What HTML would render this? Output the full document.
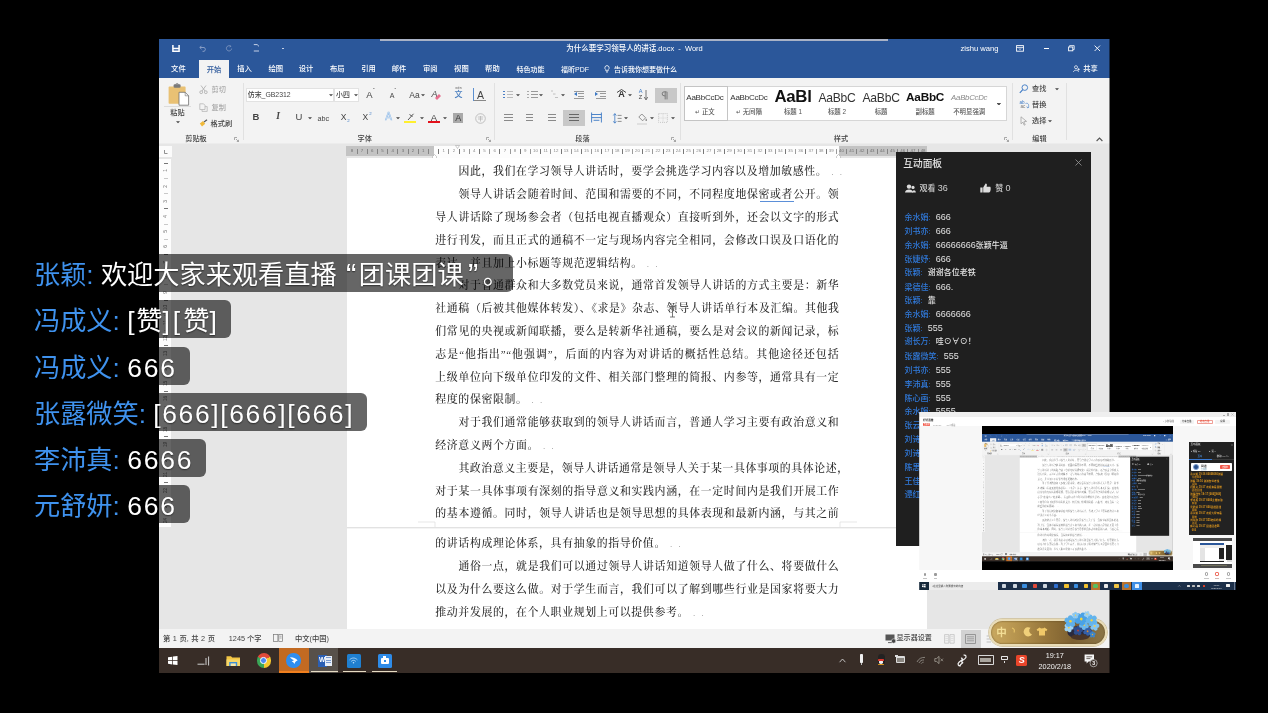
<!DOCTYPE html>
<html lang="zh"><head><meta charset="utf-8"><title>直播</title>
<style>
*{margin:0;padding:0;box-sizing:border-box}
html,body{width:1268px;height:713px;overflow:hidden;background:#000}
body{position:relative;font-family:"Liberation Sans","Noto Sans CJK SC",sans-serif;color:#444}
.a{position:absolute}
svg.a{overflow:visible}
.t{white-space:nowrap;line-height:1;font-weight:500}
#win{left:0;top:0;width:1268px;height:713px;clip-path:inset(39px 158.5px 40px 158.5px);filter:blur(.6px)}
#thumb{left:0;top:0;width:1268px;height:713px;clip-path:inset(412px 32px 122.8px 919.2px);filter:blur(.5px)}
.dl{position:absolute;left:435.3px;width:404px;height:14px;font:10.9px/14px "Liberation Serif","Noto Serif CJK SC",serif;color:#2a2a2a;font-weight:500;white-space:nowrap;text-align:justify;text-align-last:justify;letter-spacing:0.64px}
.dl.s{text-align-last:left}
#thumb .dl{color:#6a6a6a}
.chat{will-change:transform;left:21.8px;height:37.5px;border-radius:6px;background:rgba(0,0,0,.6);padding:0 13px 0 12px;font-size:26.2px;line-height:42px;color:#fff;white-space:nowrap;text-shadow:0 .5px 1.5px rgba(0,0,0,.55)}
.chat i{font-style:normal;font-size:26.5px;letter-spacing:1.8px}
.chat b{font-weight:400;color:#3f92ee}
</style></head><body>

<div id="win" class="a">
<div class="a" style="left:158.5px;top:39px;width:951px;height:634px;background:#e6e6e6"></div>
<div class="a" style="left:158.5px;top:39.0px;width:951.0px;height:39.0px;background:#2b579a;"></div>
<div class="a" style="left:380.0px;top:38.8px;width:508.0px;height:1.9px;background:#a9b2c6;"></div>
<svg class="a" style="left:172.0px;top:45.0px;" width="8" height="7" viewBox="0 0 8 7"><path d="M0.9 0V6.3H7.1V0M0.9 3.4H7.1" fill="none" stroke="#fff" stroke-width="1.5"/></svg>
<svg class="a" style="left:198.5px;top:44.5px;" width="8" height="7" viewBox="0 0 8 7"><path d="M2.5 0.8L0.8 2.5L2.5 4.2M1 2.5H5A2 2 0 0 1 5 6.3H3.5" fill="none" stroke="#8ea3c9" stroke-width="0.9"/></svg>
<svg class="a" style="left:225.0px;top:44.5px;" width="8" height="7" viewBox="0 0 8 7"><path d="M5.5 1.2A2.6 2.6 0 1 0 6.6 3.6M5 0.3L5.8 1.4L4.6 2" fill="none" stroke="#7f96c0" stroke-width="0.9"/></svg>
<svg class="a" style="left:252.5px;top:44.0px;" width="7" height="8" viewBox="0 0 7 8"><path d="M0.8 0.6H4.2L6 2.4M0.8 7H6" fill="none" stroke="#c5d0e6" stroke-width="1"/></svg>
<div class="a" style="left:281.5px;top:47.6px;width:2.0px;height:1.4px;background:#c5d0e6;"></div>
<span class="a t" style="left:634.5px;top:45.0px;font-size:7.5px;line-height:7.5px;color:#fff;transform:translateX(-50%);">为什么要学习领导人的讲话.docx&nbsp; -&nbsp; Word</span>
<span class="a t" style="left:979.5px;top:45.0px;font-size:7.6px;line-height:7.6px;color:#fff;transform:translateX(-50%);">zishu wang</span>
<svg class="a" style="left:1015.5px;top:45.0px;" width="8" height="7" viewBox="0 0 8 7"><rect x="0.6" y="0.6" width="6.8" height="5.6" fill="none" stroke="#fff" stroke-width="0.9"/><path d="M0.6 2.4H7.4M3 3.4L4 4.6L5 3.4" fill="none" stroke="#fff" stroke-width="0.8"/></svg>
<div class="a" style="left:1043.5px;top:48.3px;width:5.0px;height:1.0px;background:#fff;"></div>
<svg class="a" style="left:1068.0px;top:45.0px;" width="7" height="7" viewBox="0 0 7 7"><path d="M1.6 1.8V0.6H6.2V4.6H5" fill="none" stroke="#fff" stroke-width="0.8"/><rect x="0.6" y="2" width="4.2" height="3.8" fill="none" stroke="#fff" stroke-width="0.9"/></svg>
<svg class="a" style="left:1093.5px;top:45.3px;" width="7" height="7" viewBox="0 0 7 7"><path d="M0.6 0.6L6 6M6 0.6L0.6 6" stroke="#fff" stroke-width="0.9"/></svg>
<span class="a t" style="left:178.4px;top:65.4px;font-size:7.3px;line-height:7.3px;color:#fff;transform:translateX(-50%);">文件</span>
<div class="a" style="left:198.7px;top:60.0px;width:30.6px;height:18.2px;background:#f3f3f3;"></div>
<span class="a t" style="left:214.0px;top:65.8px;font-size:7.3px;line-height:7.3px;color:#2b579a;transform:translateX(-50%);">开始</span>
<span class="a t" style="left:244.5px;top:65.4px;font-size:7.3px;line-height:7.3px;color:#fff;transform:translateX(-50%);">插入</span>
<span class="a t" style="left:275.7px;top:65.4px;font-size:7.3px;line-height:7.3px;color:#fff;transform:translateX(-50%);">绘图</span>
<span class="a t" style="left:306.1px;top:65.4px;font-size:7.3px;line-height:7.3px;color:#fff;transform:translateX(-50%);">设计</span>
<span class="a t" style="left:337.3px;top:65.4px;font-size:7.3px;line-height:7.3px;color:#fff;transform:translateX(-50%);">布局</span>
<span class="a t" style="left:368.5px;top:65.4px;font-size:7.3px;line-height:7.3px;color:#fff;transform:translateX(-50%);">引用</span>
<span class="a t" style="left:399.0px;top:65.4px;font-size:7.3px;line-height:7.3px;color:#fff;transform:translateX(-50%);">邮件</span>
<span class="a t" style="left:430.3px;top:65.4px;font-size:7.3px;line-height:7.3px;color:#fff;transform:translateX(-50%);">审阅</span>
<span class="a t" style="left:461.4px;top:65.4px;font-size:7.3px;line-height:7.3px;color:#fff;transform:translateX(-50%);">视图</span>
<span class="a t" style="left:492.4px;top:65.4px;font-size:7.3px;line-height:7.3px;color:#fff;transform:translateX(-50%);">帮助</span>
<span class="a t" style="left:530.5px;top:65.6px;font-size:7.0px;line-height:7.0px;color:#fff;transform:translateX(-50%);">特色功能</span>
<span class="a t" style="left:575.0px;top:65.6px;font-size:7.0px;line-height:7.0px;color:#fff;transform:translateX(-50%);">福昕PDF</span>
<svg class="a" style="left:604.0px;top:64.5px;" width="6" height="8" viewBox="0 0 6 8"><path d="M3 0.6A2.2 2.2 0 0 1 4.2 4.6V5.8H1.8V4.6A2.2 2.2 0 0 1 3 0.6ZM2 7H4" fill="none" stroke="#fff" stroke-width="0.8"/></svg>
<span class="a t" style="left:614.0px;top:65.6px;font-size:7.0px;line-height:7.0px;color:#fff;">告诉我你想要做什么</span>
<svg class="a" style="left:1072.6px;top:64.8px;" width="7" height="8" viewBox="0 0 7 8"><circle cx="3" cy="2.2" r="1.5" fill="none" stroke="#fff" stroke-width="0.7"/><path d="M0.5 7C0.5 4.6 5.5 4.6 5.5 7M5.6 3.2V5.6M4.4 4.4H6.8" fill="none" stroke="#fff" stroke-width="0.7"/></svg>
<span class="a t" style="left:1083.3px;top:65.4px;font-size:7.3px;line-height:7.3px;color:#fff;">共享</span>
<div class="a" style="left:158.5px;top:78.0px;width:951.0px;height:65.5px;background:#f3f3f3;"></div>
<div class="a" style="left:158.5px;top:143.2px;width:951.0px;height:0.8px;background:#ececec;"></div>
<div class="a" style="left:242.5px;top:83.0px;width:0.7px;height:57.0px;background:#e1e1e1;"></div>
<div class="a" style="left:494.0px;top:83.0px;width:0.7px;height:57.0px;background:#e1e1e1;"></div>
<div class="a" style="left:679.5px;top:83.0px;width:0.7px;height:57.0px;background:#e1e1e1;"></div>
<div class="a" style="left:1011.5px;top:83.0px;width:0.7px;height:57.0px;background:#e1e1e1;"></div>
<div class="a" style="left:1065.5px;top:83.0px;width:0.7px;height:57.0px;background:#e1e1e1;"></div>
<svg class="a" style="left:168.0px;top:82.5px;" width="22" height="24" viewBox="0 0 22 24"><rect x="0.6" y="3.6" width="17" height="17.2" rx="0.8" fill="#e9c174"/><rect x="5.6" y="1.2" width="7" height="3.6" rx="1.2" fill="#7a7a7a"/><circle cx="9.1" cy="1.6" r="1.2" fill="none" stroke="#7a7a7a" stroke-width="0.7"/><path d="M11 9.3H17.2L20.6 12.8V22.2H11Z" fill="#fff" stroke="#6e6e6e" stroke-width="0.8"/><path d="M17.2 9.3V12.8H20.6" fill="none" stroke="#6e6e6e" stroke-width="0.6"/></svg>
<span class="a t" style="left:177.5px;top:108.9px;font-size:7.2px;line-height:7.2px;color:#444;transform:translateX(-50%);">粘贴</span>
<svg class="a" style="left:175.7px;top:120.9px" width="4.0" height="2.5" viewBox="0 0 2 1"><path d="M0 0H2L1 1Z" fill="#444"/></svg>
<div class="a" style="left:164.0px;top:106.1px;width:26.5px;height:0.6px;background:#dcdcdc;"></div>
<svg class="a" style="left:198.5px;top:85.0px;" width="9" height="9" viewBox="0 0 9 9"><path d="M2 0.5L6 6M7 0.5L3 6" stroke="#aaa" stroke-width="0.8" fill="none"/><circle cx="2.2" cy="7.2" r="1.4" fill="none" stroke="#aaa" stroke-width="0.8"/><circle cx="6.8" cy="7.2" r="1.4" fill="none" stroke="#aaa" stroke-width="0.8"/></svg>
<span class="a t" style="left:211.5px;top:86.2px;font-size:7.2px;line-height:7.2px;color:#a8a8a8;">剪切</span>
<svg class="a" style="left:199.0px;top:102.5px;" width="9" height="9" viewBox="0 0 9 9"><path d="M0.8 0.8H4.5L6 2.3V6.5H0.8Z M3 6.5V8.4H8.2V3.6H6" fill="none" stroke="#b5b5b5" stroke-width="0.8"/></svg>
<span class="a t" style="left:211.5px;top:103.6px;font-size:7.2px;line-height:7.2px;color:#a8a8a8;">复制</span>
<svg class="a" style="left:198.5px;top:119.0px;" width="9" height="9" viewBox="0 0 9 9"><path d="M0.8 4.5L4 2L6.2 4.8L3 7.5Z" fill="#f0b93a"/><path d="M5 3L8 0.8" stroke="#555" stroke-width="1.2"/></svg>
<span class="a t" style="left:210.5px;top:120.2px;font-size:7.2px;line-height:7.2px;color:#444;">格式刷</span>
<span class="a t" style="left:196.0px;top:135.3px;font-size:7.2px;line-height:7.2px;color:#444;transform:translateX(-50%);">剪贴板</span>
<svg class="a" style="left:234.0px;top:136.9px;" width="5" height="5" viewBox="0 0 5 5"><path d="M0.5 3V0.5H3M2 2L4.4 4.4M4.5 2.8V4.5H2.8" fill="none" stroke="#777" stroke-width="0.6"/></svg>
<div class="a" style="left:245.8px;top:88.3px;width:88.3px;height:13.4px;background:#fff;border:0.6px solid #e2e2e2"></div>
<span class="a t" style="left:247.8px;top:91.5px;font-size:6.9px;line-height:6.9px;color:#444;">仿宋_GB2312</span>
<svg class="a" style="left:328.6px;top:94.1px" width="4.0" height="2.5" viewBox="0 0 2 1"><path d="M0 0H2L1 1Z" fill="#444"/></svg>
<div class="a" style="left:334.4px;top:88.3px;width:24.3px;height:13.4px;background:#fff;border:0.6px solid #e2e2e2"></div>
<span class="a t" style="left:336.0px;top:91.5px;font-size:6.9px;line-height:6.9px;color:#444;">小四</span>
<svg class="a" style="left:353.8px;top:94.1px" width="4.0" height="2.5" viewBox="0 0 2 1"><path d="M0 0H2L1 1Z" fill="#444"/></svg>
<span class="a t" style="left:369.5px;top:90.2px;font-size:9.5px;line-height:9.5px;color:#444;transform:translateX(-50%);">A</span>
<span class="a t" style="left:373.0px;top:87.5px;font-size:5px;line-height:5px;color:#444;">ˆ</span>
<span class="a t" style="left:392.0px;top:92.2px;font-size:7px;line-height:7px;color:#444;transform:translateX(-50%);">A</span>
<span class="a t" style="left:394.5px;top:88.8px;font-size:4.5px;line-height:4.5px;color:#444;">ˇ</span>
<span class="a t" style="left:414.5px;top:90.5px;font-size:8.5px;line-height:8.5px;color:#444;transform:translateX(-50%);">Aa</span>
<svg class="a" style="left:420.5px;top:93.9px" width="4.0" height="2.5" viewBox="0 0 2 1"><path d="M0 0H2L1 1Z" fill="#444"/></svg>
<span class="a t" style="left:434.5px;top:89.5px;font-size:9px;line-height:9px;color:#444;transform:translateX(-50%);font-style:italic">A</span>
<svg class="a" style="left:434.0px;top:93.0px;" width="8" height="8" viewBox="0 0 8 8"><path d="M1 5L5 1L7 3L3 7Z" fill="#e8708f"/></svg>
<span class="a t" style="left:458.5px;top:91.3px;font-size:8px;line-height:8px;color:#4a7fc0;transform:translateX(-50%);">文</span>
<span class="a t" style="left:458.5px;top:87.2px;font-size:3.6px;line-height:3.6px;color:#666;transform:translateX(-50%);">wén</span>
<div class="a" style="left:473.3px;top:88.2px;width:0.8px;height:12.5px;background:#5b8fd0;"></div>
<span class="a t" style="left:480.5px;top:89.5px;font-size:10.5px;line-height:10.5px;color:#444;transform:translateX(-50%);">A</span>
<div class="a" style="left:474.0px;top:100.2px;width:11.5px;height:0.7px;background:#888;"></div>
<span class="a t" style="left:256.0px;top:112.2px;font-size:9.5px;line-height:9.5px;color:#444;transform:translateX(-50%);font-weight:700">B</span>
<span class="a t" style="left:278.0px;top:112.2px;font-size:9.5px;line-height:9.5px;color:#444;transform:translateX(-50%);font-style:italic;font-family:'Liberation Serif',serif;font-weight:700">I</span>
<span class="a t" style="left:299.0px;top:112.2px;font-size:9.5px;line-height:9.5px;color:#444;transform:translateX(-50%);">U</span>
<svg class="a" style="left:308.0px;top:117.4px" width="4.0" height="2.5" viewBox="0 0 2 1"><path d="M0 0H2L1 1Z" fill="#444"/></svg>
<span class="a t" style="left:323.2px;top:115.1px;font-size:7.2px;line-height:7.2px;color:#444;transform:translateX(-50%);">abc</span>
<span class="a t" style="left:343.5px;top:113.4px;font-size:8.5px;line-height:8.5px;color:#444;transform:translateX(-50%);">X</span>
<span class="a t" style="left:347.3px;top:118.8px;font-size:4.3px;line-height:4.3px;color:#3b78c4;">2</span>
<span class="a t" style="left:365.3px;top:113.4px;font-size:8.5px;line-height:8.5px;color:#444;transform:translateX(-50%);">X</span>
<span class="a t" style="left:369.3px;top:112.4px;font-size:4.3px;line-height:4.3px;color:#3b78c4;">2</span>
<span class="a t" style="left:388.5px;top:112.2px;font-size:10px;line-height:10px;color:#f3f3f3;transform:translateX(-50%);-webkit-text-stroke:0.55px #8fbbea">A</span>
<svg class="a" style="left:395.6px;top:117.4px" width="4.0" height="2.5" viewBox="0 0 2 1"><path d="M0 0H2L1 1Z" fill="#444"/></svg>
<svg class="a" style="left:405.5px;top:112.5px;" width="10" height="8" viewBox="0 0 10 8"><path d="M2 7L7.5 0.8M3.5 1.5L6.5 3.5" stroke="#555" stroke-width="1" fill="none"/></svg>
<div class="a" style="left:404.2px;top:121.3px;width:12.0px;height:2.2px;background:#ffef2e;"></div>
<svg class="a" style="left:419.6px;top:117.4px" width="4.0" height="2.5" viewBox="0 0 2 1"><path d="M0 0H2L1 1Z" fill="#444"/></svg>
<span class="a t" style="left:434.0px;top:112.5px;font-size:9.5px;line-height:9.5px;color:#444;transform:translateX(-50%);">A</span>
<div class="a" style="left:428.0px;top:121.3px;width:12.0px;height:2.2px;background:#e3111b;"></div>
<svg class="a" style="left:443.0px;top:117.4px" width="4.0" height="2.5" viewBox="0 0 2 1"><path d="M0 0H2L1 1Z" fill="#444"/></svg>
<div class="a" style="left:453.0px;top:112.5px;width:10.4px;height:10.6px;background:#a9a9a9;"></div>
<span class="a t" style="left:458.2px;top:113.7px;font-size:9px;line-height:9px;color:#3a3a3a;transform:translateX(-50%);">A</span>
<svg class="a" style="left:474.5px;top:112.7px;" width="11" height="11" viewBox="0 0 11 11"><circle cx="5.5" cy="5.5" r="4.8" fill="none" stroke="#aaa" stroke-width="0.7"/><path d="M2.8 4H8.2M3 6H8M5.5 3V8.5" stroke="#aaa" stroke-width="0.6" fill="none"/></svg>
<span class="a t" style="left:364.8px;top:135.3px;font-size:7.2px;line-height:7.2px;color:#444;transform:translateX(-50%);">字体</span>
<svg class="a" style="left:485.5px;top:136.9px;" width="5" height="5" viewBox="0 0 5 5"><path d="M0.5 3V0.5H3M2 2L4.4 4.4M4.5 2.8V4.5H2.8" fill="none" stroke="#777" stroke-width="0.6"/></svg>
<div class="a" style="left:506.5px;top:91.0px;width:6.5px;height:0.8px;background:#bbb;"></div><div class="a" style="left:503.3px;top:90.7px;width:1.4px;height:1.4px;background:#4c7fc4;"></div><div class="a" style="left:506.5px;top:94.2px;width:6.5px;height:0.8px;background:#bbb;"></div><div class="a" style="left:503.3px;top:93.9px;width:1.4px;height:1.4px;background:#4c7fc4;"></div><div class="a" style="left:506.5px;top:97.4px;width:6.5px;height:0.8px;background:#bbb;"></div><div class="a" style="left:503.3px;top:97.1px;width:1.4px;height:1.4px;background:#4c7fc4;"></div>
<svg class="a" style="left:516.0px;top:93.9px" width="4.0" height="2.5" viewBox="0 0 2 1"><path d="M0 0H2L1 1Z" fill="#444"/></svg>
<div class="a" style="left:530.5px;top:91.0px;width:7.0px;height:0.8px;background:#999;"></div><div class="a" style="left:527.3px;top:90.7px;width:1.4px;height:1.4px;background:#aaa;"></div><div class="a" style="left:530.5px;top:94.2px;width:7.0px;height:0.8px;background:#999;"></div><div class="a" style="left:527.3px;top:93.9px;width:1.4px;height:1.4px;background:#aaa;"></div><div class="a" style="left:530.5px;top:97.4px;width:7.0px;height:0.8px;background:#999;"></div><div class="a" style="left:527.3px;top:97.1px;width:1.4px;height:1.4px;background:#aaa;"></div>
<svg class="a" style="left:539.0px;top:93.9px" width="4.0" height="2.5" viewBox="0 0 2 1"><path d="M0 0H2L1 1Z" fill="#444"/></svg>
<svg class="a" style="left:549.5px;top:90.0px;" width="10" height="10" viewBox="0 0 10 10"><path d="M1 1H3M3 4H5.5M5 7.5H8" stroke="#bbb" stroke-width="0.9"/></svg>
<svg class="a" style="left:561.0px;top:93.9px" width="4.0" height="2.5" viewBox="0 0 2 1"><path d="M0 0H2L1 1Z" fill="#444"/></svg>
<div class="a" style="left:574.0px;top:90.5px;width:10.0px;height:0.8px;background:#999;"></div><div class="a" style="left:574.0px;top:93.0px;width:10.0px;height:0.8px;background:#999;"></div><div class="a" style="left:574.0px;top:95.5px;width:10.0px;height:0.8px;background:#999;"></div><div class="a" style="left:574.0px;top:98.0px;width:10.0px;height:0.8px;background:#999;"></div>
<svg class="a" style="left:572.5px;top:92.3px;" width="5" height="4" viewBox="0 0 5 4"><path d="M4 0L1 2L4 4Z" fill="#3b78c4"/></svg><div class="a" style="left:572.0px;top:92.0px;width:6.0px;height:4.6px;background:#f3f3f3;z-index:0"></div>
<svg class="a" style="left:572.8px;top:92.3px;" width="5" height="4" viewBox="0 0 5 4"><path d="M4 0L1 2L4 4Z" fill="#3b78c4"/></svg>
<div class="a" style="left:595.5px;top:90.5px;width:10.0px;height:0.8px;background:#999;"></div><div class="a" style="left:595.5px;top:93.0px;width:10.0px;height:0.8px;background:#999;"></div><div class="a" style="left:595.5px;top:95.5px;width:10.0px;height:0.8px;background:#999;"></div><div class="a" style="left:595.5px;top:98.0px;width:10.0px;height:0.8px;background:#999;"></div>
<div class="a" style="left:593.5px;top:92.0px;width:6.0px;height:4.6px;background:#f3f3f3;"></div>
<svg class="a" style="left:594.3px;top:92.3px;" width="5" height="4" viewBox="0 0 5 4"><path d="M1 0L4 2L1 4Z" fill="#3b78c4"/></svg>
<span class="a t" style="left:621.5px;top:90.0px;font-size:9px;line-height:9px;color:#333;transform:translateX(-50%);font-weight:700">A</span>
<svg class="a" style="left:616.0px;top:89.0px;" width="11" height="4" viewBox="0 0 11 4"><path d="M1 3.5L5.5 0.5L10 3.5" fill="none" stroke="#333" stroke-width="0.9"/></svg>
<svg class="a" style="left:627.5px;top:93.9px" width="4.0" height="2.5" viewBox="0 0 2 1"><path d="M0 0H2L1 1Z" fill="#444"/></svg>
<span class="a t" style="left:640.5px;top:88.8px;font-size:5.6px;line-height:5.6px;color:#3b78c4;transform:translateX(-50%);">A</span>
<span class="a t" style="left:640.5px;top:94.8px;font-size:5.6px;line-height:5.6px;color:#444;transform:translateX(-50%);">Z</span>
<svg class="a" style="left:644.0px;top:89.5px;" width="4" height="11" viewBox="0 0 4 11"><path d="M2 0V9M0.3 7L2 10L3.7 7" fill="none" stroke="#555" stroke-width="0.8"/></svg>
<div class="a" style="left:655.0px;top:87.6px;width:21.7px;height:15.0px;background:#c8c8c8;"></div>
<svg class="a" style="left:661.0px;top:90.5px;" width="9" height="9" viewBox="0 0 9 9"><path d="M5.5 0.8H3.2A2 2 0 0 0 3.2 4.8H4.2M4.2 0.8V8.4M6 0.8V8.4" fill="none" stroke="#666" stroke-width="0.8"/></svg>
<div class="a" style="left:503.8px;top:113.6px;width:8.8px;height:0.9px;background:#8a8a8a;"></div><div class="a" style="left:503.8px;top:116.7px;width:8.8px;height:0.9px;background:#8a8a8a;"></div><div class="a" style="left:503.8px;top:119.8px;width:8.8px;height:0.9px;background:#8a8a8a;"></div>
<div class="a" style="left:525.8px;top:113.6px;width:7.6px;height:0.9px;background:#8a8a8a;"></div><div class="a" style="left:525.8px;top:116.7px;width:7.6px;height:0.9px;background:#8a8a8a;"></div><div class="a" style="left:525.8px;top:119.8px;width:7.6px;height:0.9px;background:#8a8a8a;"></div>
<div class="a" style="left:547.5px;top:113.6px;width:8.8px;height:0.9px;background:#8a8a8a;"></div><div class="a" style="left:547.5px;top:116.7px;width:8.8px;height:0.9px;background:#8a8a8a;"></div><div class="a" style="left:547.5px;top:119.8px;width:8.8px;height:0.9px;background:#8a8a8a;"></div>
<div class="a" style="left:563.2px;top:110.4px;width:21.6px;height:15.3px;background:#c8c8c8;"></div>
<div class="a" style="left:568.8px;top:113.6px;width:10.0px;height:0.9px;background:#666;"></div><div class="a" style="left:568.8px;top:116.7px;width:10.0px;height:0.9px;background:#666;"></div><div class="a" style="left:568.8px;top:119.8px;width:10.0px;height:0.9px;background:#666;"></div>
<svg class="a" style="left:590.5px;top:112.3px;" width="11" height="11" viewBox="0 0 11 11"><path d="M0.6 0.5V10.5M10.4 0.5V10.5M0.6 2.5H10.4M0.6 5.6H10.4M2.6 8.3H8.4" fill="none" stroke="#3b78c4" stroke-width="0.9"/></svg>
<svg class="a" style="left:612.5px;top:112.5px;" width="9" height="11" viewBox="0 0 9 11"><path d="M1.8 0.8V10M0.3 2.5L1.8 0.6L3.3 2.5M0.3 8.3L1.8 10.2L3.3 8.3" fill="none" stroke="#3b78c4" stroke-width="0.8"/><path d="M4.6 2.4H8.6M4.6 5.4H8.6M4.6 8.4H8.6" stroke="#777" stroke-width="0.8"/></svg>
<svg class="a" style="left:623.5px;top:117.4px" width="4.0" height="2.5" viewBox="0 0 2 1"><path d="M0 0H2L1 1Z" fill="#444"/></svg>
<svg class="a" style="left:637.5px;top:113.0px;" width="10" height="10" viewBox="0 0 10 10"><path d="M3.8 1L7.6 4.8L4.6 7.8L0.8 4Z" fill="none" stroke="#777" stroke-width="0.8"/><path d="M8.2 5.6C9.2 7 9.2 8 8.2 8S7.2 7 8.2 5.6Z" fill="#777"/></svg>
<div class="a" style="left:637.0px;top:123.2px;width:10.0px;height:1.8px;background:#e0e0e0;"></div>
<svg class="a" style="left:649.5px;top:117.4px" width="4.0" height="2.5" viewBox="0 0 2 1"><path d="M0 0H2L1 1Z" fill="#444"/></svg>
<svg class="a" style="left:658.0px;top:113.0px;" width="10" height="10" viewBox="0 0 10 10"><rect x="0.6" y="0.6" width="8.8" height="8.8" fill="none" stroke="#bdbdbd" stroke-width="0.8" stroke-dasharray="1 1"/><path d="M0.6 5H9.4M5 0.6V9.4" stroke="#c8c8c8" stroke-width="0.7" stroke-dasharray="1 1"/></svg>
<svg class="a" style="left:670.5px;top:117.4px" width="4.0" height="2.5" viewBox="0 0 2 1"><path d="M0 0H2L1 1Z" fill="#444"/></svg>
<span class="a t" style="left:582.5px;top:135.3px;font-size:7.2px;line-height:7.2px;color:#444;transform:translateX(-50%);">段落</span>
<svg class="a" style="left:671.0px;top:136.9px;" width="5" height="5" viewBox="0 0 5 5"><path d="M0.5 3V0.5H3M2 2L4.4 4.4M4.5 2.8V4.5H2.8" fill="none" stroke="#777" stroke-width="0.6"/></svg>
<div class="a" style="left:683.6px;top:85.6px;width:323.0px;height:35.6px;background:#fff;border:0.7px solid #d6d6d6"></div>
<div class="a" style="left:684.2px;top:86.2px;width:43.4px;height:34.4px;border:1.5px solid #c4c4c4"></div>
<span class="a t" style="left:704.9px;top:94.3px;font-size:8.0px;line-height:8.0px;color:#333;transform:translateX(-50%);;letter-spacing:-0.25px">AaBbCcDc</span>
<span class="a t" style="left:704.9px;top:109.1px;font-size:6.4px;line-height:6.4px;color:#555;transform:translateX(-50%);">↵ 正文</span>
<svg class="a" style="left:997.0px;top:102.6px" width="3.6" height="2.2" viewBox="0 0 2 1"><path d="M0 0H2L1 1Z" fill="#555"/></svg>
<span class="a t" style="left:748.9px;top:94.3px;font-size:8.0px;line-height:8.0px;color:#333;transform:translateX(-50%);;letter-spacing:-0.25px">AaBbCcDc</span>
<span class="a t" style="left:748.9px;top:109.1px;font-size:6.4px;line-height:6.4px;color:#555;transform:translateX(-50%);">↵ 无间隔</span>
<svg class="a" style="left:997.0px;top:102.6px" width="3.6" height="2.2" viewBox="0 0 2 1"><path d="M0 0H2L1 1Z" fill="#555"/></svg>
<span class="a t" style="left:793.0px;top:89.0px;font-size:16.8px;line-height:16.8px;color:#111;transform:translateX(-50%);font-weight:700;letter-spacing:-0.25px">AaBl</span>
<span class="a t" style="left:793.0px;top:109.1px;font-size:6.4px;line-height:6.4px;color:#555;transform:translateX(-50%);">标题 1</span>
<svg class="a" style="left:997.0px;top:102.6px" width="3.6" height="2.2" viewBox="0 0 2 1"><path d="M0 0H2L1 1Z" fill="#555"/></svg>
<span class="a t" style="left:837.0px;top:92.2px;font-size:12.1px;line-height:12.1px;color:#333;transform:translateX(-50%);;letter-spacing:-0.25px">AaBbC</span>
<span class="a t" style="left:837.0px;top:109.1px;font-size:6.4px;line-height:6.4px;color:#555;transform:translateX(-50%);">标题 2</span>
<svg class="a" style="left:997.0px;top:102.6px" width="3.6" height="2.2" viewBox="0 0 2 1"><path d="M0 0H2L1 1Z" fill="#555"/></svg>
<span class="a t" style="left:881.1px;top:92.2px;font-size:12.1px;line-height:12.1px;color:#333;transform:translateX(-50%);;letter-spacing:-0.25px">AaBbC</span>
<span class="a t" style="left:881.1px;top:109.1px;font-size:6.4px;line-height:6.4px;color:#555;transform:translateX(-50%);">标题</span>
<svg class="a" style="left:997.0px;top:102.6px" width="3.6" height="2.2" viewBox="0 0 2 1"><path d="M0 0H2L1 1Z" fill="#555"/></svg>
<span class="a t" style="left:925.1px;top:92.4px;font-size:11.8px;line-height:11.8px;color:#111;transform:translateX(-50%);font-weight:700;letter-spacing:-0.25px">AaBbC</span>
<span class="a t" style="left:925.1px;top:109.1px;font-size:6.4px;line-height:6.4px;color:#555;transform:translateX(-50%);">副标题</span>
<svg class="a" style="left:997.0px;top:102.6px" width="3.6" height="2.2" viewBox="0 0 2 1"><path d="M0 0H2L1 1Z" fill="#555"/></svg>
<span class="a t" style="left:969.2px;top:94.4px;font-size:7.8px;line-height:7.8px;color:#8a8a8a;transform:translateX(-50%);font-style:italic;letter-spacing:-0.25px">AaBbCcDc</span>
<span class="a t" style="left:969.2px;top:109.1px;font-size:6.4px;line-height:6.4px;color:#555;transform:translateX(-50%);">不明显强调</span>
<svg class="a" style="left:997.0px;top:102.6px" width="3.6" height="2.2" viewBox="0 0 2 1"><path d="M0 0H2L1 1Z" fill="#555"/></svg>
<span class="a t" style="left:841.0px;top:135.3px;font-size:7.2px;line-height:7.2px;color:#444;transform:translateX(-50%);">样式</span>
<svg class="a" style="left:1003.5px;top:136.9px;" width="5" height="5" viewBox="0 0 5 5"><path d="M0.5 3V0.5H3M2 2L4.4 4.4M4.5 2.8V4.5H2.8" fill="none" stroke="#777" stroke-width="0.6"/></svg>
<svg class="a" style="left:1018.5px;top:84.0px;" width="10" height="10" viewBox="0 0 10 10"><circle cx="5.8" cy="3.6" r="2.8" fill="none" stroke="#3b78c4" stroke-width="0.9"/><path d="M3.8 5.6L0.8 8.8" stroke="#3b78c4" stroke-width="1.1"/></svg>
<span class="a t" style="left:1032.0px;top:85.2px;font-size:7.2px;line-height:7.2px;color:#444;">查找</span>
<svg class="a" style="left:1054.5px;top:87.9px" width="4.0" height="2.5" viewBox="0 0 2 1"><path d="M0 0H2L1 1Z" fill="#444"/></svg>
<span class="a t" style="left:1019.5px;top:101.0px;font-size:4.6px;line-height:4.6px;color:#3b78c4;">ab</span>
<span class="a t" style="left:1020.5px;top:105.0px;font-size:4.6px;line-height:4.6px;color:#777;">ac</span>
<svg class="a" style="left:1024.5px;top:102.0px;" width="5" height="7" viewBox="0 0 5 7"><path d="M0.5 1.5C3.5 0.5 4.5 3 2.8 5.6M1.6 4.6L2.8 6L4.2 4.9" fill="none" stroke="#3b78c4" stroke-width="0.6"/></svg>
<span class="a t" style="left:1032.0px;top:101.4px;font-size:7.2px;line-height:7.2px;color:#444;">替换</span>
<svg class="a" style="left:1019.5px;top:116.0px;" width="8" height="10" viewBox="0 0 8 10"><path d="M1 0.8L6.6 5.4L3.9 5.7L5.2 8.8L4.2 9.2L2.9 6.2L1 7.8Z" fill="none" stroke="#999" stroke-width="0.7"/></svg>
<span class="a t" style="left:1032.0px;top:117.4px;font-size:7.2px;line-height:7.2px;color:#444;">选择</span>
<svg class="a" style="left:1047.5px;top:120.4px" width="4.0" height="2.5" viewBox="0 0 2 1"><path d="M0 0H2L1 1Z" fill="#444"/></svg>
<span class="a t" style="left:1039.5px;top:135.3px;font-size:7.2px;line-height:7.2px;color:#444;transform:translateX(-50%);">编辑</span>
<svg class="a" style="left:1096.0px;top:136.5px;" width="7" height="5" viewBox="0 0 7 5"><path d="M0.6 4L3.5 1L6.4 4" fill="none" stroke="#555" stroke-width="1.1"/></svg>
<div class="a" style="left:159.0px;top:146.0px;width:12.5px;height:10.8px;background:#fbfbfb;"></div>
<svg class="a" style="left:163.5px;top:149.5px;" width="4" height="4" viewBox="0 0 4 4"><path d="M0.5 0V3.5H3.5" fill="none" stroke="#777" stroke-width="0.8"/></svg>
<div class="a" style="left:159.0px;top:158.5px;width:12.3px;height:368.0px;background:#fdfdfd;"></div>
<span class="a t" style="left:166.3px;top:168.4px;font-size:4.8px;line-height:4.8px;color:#707070;transform:translateX(-50%);transform:translateX(-50%) rotate(-90deg);font-weight:400">1</span>
<div class="a" style="left:164.3px;top:162.8px;width:4.0px;height:0.8px;background:#777;"></div>
<span class="a t" style="left:166.3px;top:183.6px;font-size:4.8px;line-height:4.8px;color:#707070;transform:translateX(-50%);transform:translateX(-50%) rotate(-90deg);font-weight:400">2</span>
<div class="a" style="left:164.3px;top:178.0px;width:4.0px;height:0.8px;background:#c9c9c9;"></div>
<span class="a t" style="left:166.3px;top:198.8px;font-size:4.8px;line-height:4.8px;color:#707070;transform:translateX(-50%);transform:translateX(-50%) rotate(-90deg);font-weight:400">3</span>
<div class="a" style="left:164.3px;top:193.2px;width:4.0px;height:0.8px;background:#c9c9c9;"></div>
<span class="a t" style="left:166.3px;top:214.0px;font-size:4.8px;line-height:4.8px;color:#707070;transform:translateX(-50%);transform:translateX(-50%) rotate(-90deg);font-weight:400">4</span>
<div class="a" style="left:164.3px;top:208.4px;width:4.0px;height:0.8px;background:#777;"></div>
<span class="a t" style="left:166.3px;top:229.2px;font-size:4.8px;line-height:4.8px;color:#707070;transform:translateX(-50%);transform:translateX(-50%) rotate(-90deg);font-weight:400">5</span>
<div class="a" style="left:164.3px;top:223.6px;width:4.0px;height:0.8px;background:#c9c9c9;"></div>
<span class="a t" style="left:166.3px;top:244.4px;font-size:4.8px;line-height:4.8px;color:#707070;transform:translateX(-50%);transform:translateX(-50%) rotate(-90deg);font-weight:400">6</span>
<div class="a" style="left:164.3px;top:238.8px;width:4.0px;height:0.8px;background:#c9c9c9;"></div>
<span class="a t" style="left:166.3px;top:259.6px;font-size:4.8px;line-height:4.8px;color:#707070;transform:translateX(-50%);transform:translateX(-50%) rotate(-90deg);font-weight:400">7</span>
<div class="a" style="left:164.3px;top:254.0px;width:4.0px;height:0.8px;background:#777;"></div>
<span class="a t" style="left:166.3px;top:274.8px;font-size:4.8px;line-height:4.8px;color:#707070;transform:translateX(-50%);transform:translateX(-50%) rotate(-90deg);font-weight:400">8</span>
<div class="a" style="left:164.3px;top:269.2px;width:4.0px;height:0.8px;background:#c9c9c9;"></div>
<span class="a t" style="left:166.3px;top:290.0px;font-size:4.8px;line-height:4.8px;color:#707070;transform:translateX(-50%);transform:translateX(-50%) rotate(-90deg);font-weight:400">9</span>
<div class="a" style="left:164.3px;top:284.4px;width:4.0px;height:0.8px;background:#c9c9c9;"></div>
<span class="a t" style="left:166.3px;top:305.2px;font-size:4.8px;line-height:4.8px;color:#707070;transform:translateX(-50%);transform:translateX(-50%) rotate(-90deg);font-weight:400">10</span>
<div class="a" style="left:164.3px;top:299.6px;width:4.0px;height:0.8px;background:#777;"></div>
<span class="a t" style="left:166.3px;top:320.4px;font-size:4.8px;line-height:4.8px;color:#707070;transform:translateX(-50%);transform:translateX(-50%) rotate(-90deg);font-weight:400">11</span>
<div class="a" style="left:164.3px;top:314.8px;width:4.0px;height:0.8px;background:#c9c9c9;"></div>
<span class="a t" style="left:166.3px;top:335.6px;font-size:4.8px;line-height:4.8px;color:#707070;transform:translateX(-50%);transform:translateX(-50%) rotate(-90deg);font-weight:400">12</span>
<div class="a" style="left:164.3px;top:330.0px;width:4.0px;height:0.8px;background:#c9c9c9;"></div>
<span class="a t" style="left:166.3px;top:350.8px;font-size:4.8px;line-height:4.8px;color:#707070;transform:translateX(-50%);transform:translateX(-50%) rotate(-90deg);font-weight:400">13</span>
<div class="a" style="left:164.3px;top:345.2px;width:4.0px;height:0.8px;background:#777;"></div>
<span class="a t" style="left:166.3px;top:366.0px;font-size:4.8px;line-height:4.8px;color:#707070;transform:translateX(-50%);transform:translateX(-50%) rotate(-90deg);font-weight:400">14</span>
<div class="a" style="left:164.3px;top:360.4px;width:4.0px;height:0.8px;background:#c9c9c9;"></div>
<span class="a t" style="left:166.3px;top:381.2px;font-size:4.8px;line-height:4.8px;color:#707070;transform:translateX(-50%);transform:translateX(-50%) rotate(-90deg);font-weight:400">15</span>
<div class="a" style="left:164.3px;top:375.6px;width:4.0px;height:0.8px;background:#c9c9c9;"></div>
<span class="a t" style="left:166.3px;top:396.4px;font-size:4.8px;line-height:4.8px;color:#707070;transform:translateX(-50%);transform:translateX(-50%) rotate(-90deg);font-weight:400">16</span>
<div class="a" style="left:164.3px;top:390.8px;width:4.0px;height:0.8px;background:#777;"></div>
<span class="a t" style="left:166.3px;top:411.6px;font-size:4.8px;line-height:4.8px;color:#707070;transform:translateX(-50%);transform:translateX(-50%) rotate(-90deg);font-weight:400">17</span>
<div class="a" style="left:164.3px;top:406.0px;width:4.0px;height:0.8px;background:#c9c9c9;"></div>
<span class="a t" style="left:166.3px;top:426.8px;font-size:4.8px;line-height:4.8px;color:#707070;transform:translateX(-50%);transform:translateX(-50%) rotate(-90deg);font-weight:400">18</span>
<div class="a" style="left:164.3px;top:421.2px;width:4.0px;height:0.8px;background:#c9c9c9;"></div>
<span class="a t" style="left:166.3px;top:442.0px;font-size:4.8px;line-height:4.8px;color:#707070;transform:translateX(-50%);transform:translateX(-50%) rotate(-90deg);font-weight:400">19</span>
<div class="a" style="left:164.3px;top:436.4px;width:4.0px;height:0.8px;background:#777;"></div>
<span class="a t" style="left:166.3px;top:457.2px;font-size:4.8px;line-height:4.8px;color:#707070;transform:translateX(-50%);transform:translateX(-50%) rotate(-90deg);font-weight:400">20</span>
<div class="a" style="left:164.3px;top:451.6px;width:4.0px;height:0.8px;background:#c9c9c9;"></div>
<span class="a t" style="left:166.3px;top:472.4px;font-size:4.8px;line-height:4.8px;color:#707070;transform:translateX(-50%);transform:translateX(-50%) rotate(-90deg);font-weight:400">21</span>
<div class="a" style="left:164.3px;top:466.8px;width:4.0px;height:0.8px;background:#c9c9c9;"></div>
<span class="a t" style="left:166.3px;top:487.6px;font-size:4.8px;line-height:4.8px;color:#707070;transform:translateX(-50%);transform:translateX(-50%) rotate(-90deg);font-weight:400">22</span>
<div class="a" style="left:164.3px;top:482.0px;width:4.0px;height:0.8px;background:#777;"></div>
<span class="a t" style="left:166.3px;top:502.8px;font-size:4.8px;line-height:4.8px;color:#707070;transform:translateX(-50%);transform:translateX(-50%) rotate(-90deg);font-weight:400">23</span>
<div class="a" style="left:164.3px;top:497.2px;width:4.0px;height:0.8px;background:#c9c9c9;"></div>
<span class="a t" style="left:166.3px;top:518.0px;font-size:4.8px;line-height:4.8px;color:#707070;transform:translateX(-50%);transform:translateX(-50%) rotate(-90deg);font-weight:400">24</span>
<div class="a" style="left:164.3px;top:512.4px;width:4.0px;height:0.8px;background:#c9c9c9;"></div>
<div class="a" style="left:346.0px;top:146.2px;width:87.5px;height:9.8px;background:#c3c3c3;"></div>
<div class="a" style="left:433.5px;top:145.6px;width:405.0px;height:12.6px;background:#fdfdfd;"></div>
<div class="a" style="left:838.5px;top:146.2px;width:88.2px;height:9.8px;background:#c3c3c3;"></div>
<svg class="a" style="left:836.0px;top:153.8px;" width="5" height="5" viewBox="0 0 5 5"><path d="M0.5 4.5H4.5V2.5L2.5 0.5L0.5 2.5Z" fill="#fff" stroke="#999" stroke-width="0.5"/></svg>
<span class="a t" style="left:351.9px;top:149.2px;font-size:4.4px;line-height:4.4px;color:#6f6f6f;transform:translateX(-50%);font-weight:400">8</span>
<div class="a" style="left:356.6px;top:148.7px;width:0.9px;height:5.4px;background:#858585;"></div>
<span class="a t" style="left:362.1px;top:149.2px;font-size:4.4px;line-height:4.4px;color:#6f6f6f;transform:translateX(-50%);font-weight:400">7</span>
<div class="a" style="left:366.8px;top:148.7px;width:0.9px;height:5.4px;background:#858585;"></div>
<span class="a t" style="left:372.3px;top:149.2px;font-size:4.4px;line-height:4.4px;color:#6f6f6f;transform:translateX(-50%);font-weight:400">6</span>
<div class="a" style="left:377.0px;top:148.7px;width:0.9px;height:5.4px;background:#858585;"></div>
<span class="a t" style="left:382.5px;top:149.2px;font-size:4.4px;line-height:4.4px;color:#6f6f6f;transform:translateX(-50%);font-weight:400">5</span>
<div class="a" style="left:387.2px;top:148.7px;width:0.9px;height:5.4px;background:#858585;"></div>
<span class="a t" style="left:392.7px;top:149.2px;font-size:4.4px;line-height:4.4px;color:#6f6f6f;transform:translateX(-50%);font-weight:400">4</span>
<div class="a" style="left:397.4px;top:148.7px;width:0.9px;height:5.4px;background:#858585;"></div>
<span class="a t" style="left:402.9px;top:149.2px;font-size:4.4px;line-height:4.4px;color:#6f6f6f;transform:translateX(-50%);font-weight:400">3</span>
<div class="a" style="left:407.6px;top:148.7px;width:0.9px;height:5.4px;background:#858585;"></div>
<span class="a t" style="left:413.1px;top:149.2px;font-size:4.4px;line-height:4.4px;color:#6f6f6f;transform:translateX(-50%);font-weight:400">2</span>
<div class="a" style="left:417.8px;top:148.7px;width:0.9px;height:5.4px;background:#858585;"></div>
<span class="a t" style="left:423.3px;top:149.2px;font-size:4.4px;line-height:4.4px;color:#6f6f6f;transform:translateX(-50%);font-weight:400">1</span>
<div class="a" style="left:428.0px;top:148.7px;width:0.9px;height:5.4px;background:#858585;"></div>
<div class="a" style="left:438.2px;top:148.7px;width:0.9px;height:5.4px;background:#777;"></div>
<span class="a t" style="left:443.7px;top:149.2px;font-size:4.4px;line-height:4.4px;color:#8a8a8a;transform:translateX(-50%);font-weight:400">1</span>
<div class="a" style="left:448.4px;top:148.7px;width:0.9px;height:5.4px;background:#9a9a9a;"></div>
<span class="a t" style="left:453.9px;top:149.2px;font-size:4.4px;line-height:4.4px;color:#8a8a8a;transform:translateX(-50%);font-weight:400">2</span>
<div class="a" style="left:458.6px;top:148.7px;width:0.9px;height:5.4px;background:#777;"></div>
<span class="a t" style="left:464.1px;top:149.2px;font-size:4.4px;line-height:4.4px;color:#8a8a8a;transform:translateX(-50%);font-weight:400">3</span>
<div class="a" style="left:468.8px;top:148.7px;width:0.9px;height:5.4px;background:#9a9a9a;"></div>
<span class="a t" style="left:474.3px;top:149.2px;font-size:4.4px;line-height:4.4px;color:#8a8a8a;transform:translateX(-50%);font-weight:400">4</span>
<div class="a" style="left:479.0px;top:148.7px;width:0.9px;height:5.4px;background:#777;"></div>
<span class="a t" style="left:484.5px;top:149.2px;font-size:4.4px;line-height:4.4px;color:#8a8a8a;transform:translateX(-50%);font-weight:400">5</span>
<div class="a" style="left:489.2px;top:148.7px;width:0.9px;height:5.4px;background:#9a9a9a;"></div>
<span class="a t" style="left:494.7px;top:149.2px;font-size:4.4px;line-height:4.4px;color:#8a8a8a;transform:translateX(-50%);font-weight:400">6</span>
<div class="a" style="left:499.4px;top:148.7px;width:0.9px;height:5.4px;background:#777;"></div>
<span class="a t" style="left:504.9px;top:149.2px;font-size:4.4px;line-height:4.4px;color:#8a8a8a;transform:translateX(-50%);font-weight:400">7</span>
<div class="a" style="left:509.6px;top:148.7px;width:0.9px;height:5.4px;background:#9a9a9a;"></div>
<span class="a t" style="left:515.1px;top:149.2px;font-size:4.4px;line-height:4.4px;color:#8a8a8a;transform:translateX(-50%);font-weight:400">8</span>
<div class="a" style="left:519.8px;top:148.7px;width:0.9px;height:5.4px;background:#777;"></div>
<span class="a t" style="left:525.3px;top:149.2px;font-size:4.4px;line-height:4.4px;color:#8a8a8a;transform:translateX(-50%);font-weight:400">9</span>
<div class="a" style="left:529.9px;top:148.7px;width:0.9px;height:5.4px;background:#9a9a9a;"></div>
<span class="a t" style="left:535.5px;top:149.2px;font-size:4.4px;line-height:4.4px;color:#8a8a8a;transform:translateX(-50%);font-weight:400">10</span>
<div class="a" style="left:540.1px;top:148.7px;width:0.9px;height:5.4px;background:#777;"></div>
<span class="a t" style="left:545.7px;top:149.2px;font-size:4.4px;line-height:4.4px;color:#8a8a8a;transform:translateX(-50%);font-weight:400">11</span>
<div class="a" style="left:550.4px;top:148.7px;width:0.9px;height:5.4px;background:#9a9a9a;"></div>
<span class="a t" style="left:555.9px;top:149.2px;font-size:4.4px;line-height:4.4px;color:#8a8a8a;transform:translateX(-50%);font-weight:400">12</span>
<div class="a" style="left:560.5px;top:148.7px;width:0.9px;height:5.4px;background:#777;"></div>
<span class="a t" style="left:566.1px;top:149.2px;font-size:4.4px;line-height:4.4px;color:#8a8a8a;transform:translateX(-50%);font-weight:400">13</span>
<div class="a" style="left:570.8px;top:148.7px;width:0.9px;height:5.4px;background:#9a9a9a;"></div>
<span class="a t" style="left:576.3px;top:149.2px;font-size:4.4px;line-height:4.4px;color:#8a8a8a;transform:translateX(-50%);font-weight:400">14</span>
<div class="a" style="left:580.9px;top:148.7px;width:0.9px;height:5.4px;background:#777;"></div>
<span class="a t" style="left:586.5px;top:149.2px;font-size:4.4px;line-height:4.4px;color:#8a8a8a;transform:translateX(-50%);font-weight:400">15</span>
<div class="a" style="left:591.1px;top:148.7px;width:0.9px;height:5.4px;background:#9a9a9a;"></div>
<span class="a t" style="left:596.7px;top:149.2px;font-size:4.4px;line-height:4.4px;color:#8a8a8a;transform:translateX(-50%);font-weight:400">16</span>
<div class="a" style="left:601.4px;top:148.7px;width:0.9px;height:5.4px;background:#777;"></div>
<span class="a t" style="left:606.9px;top:149.2px;font-size:4.4px;line-height:4.4px;color:#8a8a8a;transform:translateX(-50%);font-weight:400">17</span>
<div class="a" style="left:611.5px;top:148.7px;width:0.9px;height:5.4px;background:#9a9a9a;"></div>
<span class="a t" style="left:617.1px;top:149.2px;font-size:4.4px;line-height:4.4px;color:#8a8a8a;transform:translateX(-50%);font-weight:400">18</span>
<div class="a" style="left:621.8px;top:148.7px;width:0.9px;height:5.4px;background:#777;"></div>
<span class="a t" style="left:627.3px;top:149.2px;font-size:4.4px;line-height:4.4px;color:#8a8a8a;transform:translateX(-50%);font-weight:400">19</span>
<div class="a" style="left:631.9px;top:148.7px;width:0.9px;height:5.4px;background:#9a9a9a;"></div>
<span class="a t" style="left:637.5px;top:149.2px;font-size:4.4px;line-height:4.4px;color:#8a8a8a;transform:translateX(-50%);font-weight:400">20</span>
<div class="a" style="left:642.1px;top:148.7px;width:0.9px;height:5.4px;background:#777;"></div>
<span class="a t" style="left:647.7px;top:149.2px;font-size:4.4px;line-height:4.4px;color:#8a8a8a;transform:translateX(-50%);font-weight:400">21</span>
<div class="a" style="left:652.4px;top:148.7px;width:0.9px;height:5.4px;background:#9a9a9a;"></div>
<span class="a t" style="left:657.9px;top:149.2px;font-size:4.4px;line-height:4.4px;color:#8a8a8a;transform:translateX(-50%);font-weight:400">22</span>
<div class="a" style="left:662.5px;top:148.7px;width:0.9px;height:5.4px;background:#777;"></div>
<span class="a t" style="left:668.1px;top:149.2px;font-size:4.4px;line-height:4.4px;color:#8a8a8a;transform:translateX(-50%);font-weight:400">23</span>
<div class="a" style="left:672.8px;top:148.7px;width:0.9px;height:5.4px;background:#9a9a9a;"></div>
<span class="a t" style="left:678.3px;top:149.2px;font-size:4.4px;line-height:4.4px;color:#8a8a8a;transform:translateX(-50%);font-weight:400">24</span>
<div class="a" style="left:682.9px;top:148.7px;width:0.9px;height:5.4px;background:#777;"></div>
<span class="a t" style="left:688.5px;top:149.2px;font-size:4.4px;line-height:4.4px;color:#8a8a8a;transform:translateX(-50%);font-weight:400">25</span>
<div class="a" style="left:693.1px;top:148.7px;width:0.9px;height:5.4px;background:#9a9a9a;"></div>
<span class="a t" style="left:698.7px;top:149.2px;font-size:4.4px;line-height:4.4px;color:#8a8a8a;transform:translateX(-50%);font-weight:400">26</span>
<div class="a" style="left:703.4px;top:148.7px;width:0.9px;height:5.4px;background:#777;"></div>
<span class="a t" style="left:708.9px;top:149.2px;font-size:4.4px;line-height:4.4px;color:#8a8a8a;transform:translateX(-50%);font-weight:400">27</span>
<div class="a" style="left:713.5px;top:148.7px;width:0.9px;height:5.4px;background:#9a9a9a;"></div>
<span class="a t" style="left:719.1px;top:149.2px;font-size:4.4px;line-height:4.4px;color:#8a8a8a;transform:translateX(-50%);font-weight:400">28</span>
<div class="a" style="left:723.7px;top:148.7px;width:0.9px;height:5.4px;background:#777;"></div>
<span class="a t" style="left:729.3px;top:149.2px;font-size:4.4px;line-height:4.4px;color:#8a8a8a;transform:translateX(-50%);font-weight:400">29</span>
<div class="a" style="left:733.9px;top:148.7px;width:0.9px;height:5.4px;background:#9a9a9a;"></div>
<span class="a t" style="left:739.5px;top:149.2px;font-size:4.4px;line-height:4.4px;color:#8a8a8a;transform:translateX(-50%);font-weight:400">30</span>
<div class="a" style="left:744.1px;top:148.7px;width:0.9px;height:5.4px;background:#777;"></div>
<span class="a t" style="left:749.7px;top:149.2px;font-size:4.4px;line-height:4.4px;color:#8a8a8a;transform:translateX(-50%);font-weight:400">31</span>
<div class="a" style="left:754.4px;top:148.7px;width:0.9px;height:5.4px;background:#9a9a9a;"></div>
<span class="a t" style="left:759.9px;top:149.2px;font-size:4.4px;line-height:4.4px;color:#8a8a8a;transform:translateX(-50%);font-weight:400">32</span>
<div class="a" style="left:764.5px;top:148.7px;width:0.9px;height:5.4px;background:#777;"></div>
<span class="a t" style="left:770.1px;top:149.2px;font-size:4.4px;line-height:4.4px;color:#8a8a8a;transform:translateX(-50%);font-weight:400">33</span>
<div class="a" style="left:774.7px;top:148.7px;width:0.9px;height:5.4px;background:#9a9a9a;"></div>
<span class="a t" style="left:780.3px;top:149.2px;font-size:4.4px;line-height:4.4px;color:#8a8a8a;transform:translateX(-50%);font-weight:400">34</span>
<div class="a" style="left:784.9px;top:148.7px;width:0.9px;height:5.4px;background:#777;"></div>
<span class="a t" style="left:790.5px;top:149.2px;font-size:4.4px;line-height:4.4px;color:#8a8a8a;transform:translateX(-50%);font-weight:400">35</span>
<div class="a" style="left:795.1px;top:148.7px;width:0.9px;height:5.4px;background:#9a9a9a;"></div>
<span class="a t" style="left:800.7px;top:149.2px;font-size:4.4px;line-height:4.4px;color:#8a8a8a;transform:translateX(-50%);font-weight:400">36</span>
<div class="a" style="left:805.4px;top:148.7px;width:0.9px;height:5.4px;background:#777;"></div>
<span class="a t" style="left:810.9px;top:149.2px;font-size:4.4px;line-height:4.4px;color:#8a8a8a;transform:translateX(-50%);font-weight:400">37</span>
<div class="a" style="left:815.5px;top:148.7px;width:0.9px;height:5.4px;background:#9a9a9a;"></div>
<span class="a t" style="left:821.1px;top:149.2px;font-size:4.4px;line-height:4.4px;color:#8a8a8a;transform:translateX(-50%);font-weight:400">38</span>
<div class="a" style="left:825.7px;top:148.7px;width:0.9px;height:5.4px;background:#777;"></div>
<span class="a t" style="left:831.3px;top:149.2px;font-size:4.4px;line-height:4.4px;color:#8a8a8a;transform:translateX(-50%);font-weight:400">39</span>
<div class="a" style="left:835.9px;top:148.7px;width:0.9px;height:5.4px;background:#9a9a9a;"></div>
<span class="a t" style="left:841.5px;top:149.2px;font-size:4.4px;line-height:4.4px;color:#6f6f6f;transform:translateX(-50%);font-weight:400">40</span>
<div class="a" style="left:846.1px;top:148.7px;width:0.9px;height:5.4px;background:#858585;"></div>
<span class="a t" style="left:851.7px;top:149.2px;font-size:4.4px;line-height:4.4px;color:#6f6f6f;transform:translateX(-50%);font-weight:400">41</span>
<div class="a" style="left:856.4px;top:148.7px;width:0.9px;height:5.4px;background:#858585;"></div>
<span class="a t" style="left:861.9px;top:149.2px;font-size:4.4px;line-height:4.4px;color:#6f6f6f;transform:translateX(-50%);font-weight:400">42</span>
<div class="a" style="left:866.5px;top:148.7px;width:0.9px;height:5.4px;background:#858585;"></div>
<span class="a t" style="left:872.1px;top:149.2px;font-size:4.4px;line-height:4.4px;color:#6f6f6f;transform:translateX(-50%);font-weight:400">43</span>
<div class="a" style="left:876.7px;top:148.7px;width:0.9px;height:5.4px;background:#858585;"></div>
<span class="a t" style="left:882.3px;top:149.2px;font-size:4.4px;line-height:4.4px;color:#6f6f6f;transform:translateX(-50%);font-weight:400">44</span>
<div class="a" style="left:886.9px;top:148.7px;width:0.9px;height:5.4px;background:#858585;"></div>
<span class="a t" style="left:892.5px;top:149.2px;font-size:4.4px;line-height:4.4px;color:#6f6f6f;transform:translateX(-50%);font-weight:400">45</span>
<div class="a" style="left:897.1px;top:148.7px;width:0.9px;height:5.4px;background:#858585;"></div>
<span class="a t" style="left:902.7px;top:149.2px;font-size:4.4px;line-height:4.4px;color:#6f6f6f;transform:translateX(-50%);font-weight:400">46</span>
<div class="a" style="left:907.4px;top:148.7px;width:0.9px;height:5.4px;background:#858585;"></div>
<span class="a t" style="left:912.9px;top:149.2px;font-size:4.4px;line-height:4.4px;color:#6f6f6f;transform:translateX(-50%);font-weight:400">47</span>
<div class="a" style="left:917.5px;top:148.7px;width:0.9px;height:5.4px;background:#858585;"></div>
<span class="a t" style="left:923.1px;top:149.2px;font-size:4.4px;line-height:4.4px;color:#6f6f6f;transform:translateX(-50%);font-weight:400">48</span>
<svg class="a" style="left:454.5px;top:144.6px;" width="5" height="4" viewBox="0 0 5 4"><path d="M0.5 0.5H4.5L2.5 3.5Z" fill="#fff" stroke="#999" stroke-width="0.5"/></svg>
<svg class="a" style="left:431.8px;top:153.8px;" width="5" height="5" viewBox="0 0 5 5"><path d="M0.5 4.5H4.5V2.5L2.5 0.5L0.5 2.5Z" fill="#fff" stroke="#999" stroke-width="0.5"/></svg>
<div class="a" style="left:346.8px;top:158.0px;width:579.9px;height:470.5px;background:#fff;"></div>
<div class="a" style="left:346.8px;top:526.6px;width:579.9px;height:0.9px;background:#e2e2e2;"></div>
<div class="a" style="left:346.8px;top:527.5px;width:579.9px;height:1.2px;background:#f4f4f4;"></div>
<svg class="a" style="left:418.0px;top:521.0px;" width="18" height="7" viewBox="0 0 18 7"><path d="M0 1H17V6" fill="none" stroke="#dcdcdc" stroke-width="0.7"/></svg>
<svg class="a" style="left:839.0px;top:521.0px;" width="18" height="7" viewBox="0 0 18 7"><path d="M18 1H1V6" fill="none" stroke="#dcdcdc" stroke-width="0.7"/></svg>
<div class="dl s" style="top:164.3px;padding-left:23.08px;">因此，我们在学习领导人讲话时，要学会挑选学习内容以及增加敏感性。<span style="color:#777;font-size:7px;letter-spacing:2.5px"> . .</span></div>
<div class="dl" style="top:187.1px;padding-left:23.08px;">领导人讲话会随着时间、范围和需要的不同，不同程度地保密或者公开。领</div>
<div class="dl" style="top:209.9px;">导人讲话除了现场参会者（包括电视直播观众）直接听到外，还会以文字的形式</div>
<div class="dl" style="top:232.7px;">进行刊发，而且正式的通稿不一定与现场内容完全相同，会修改口误及口语化的</div>
<div class="dl s" style="top:255.5px;">表达，并且加上小标题等规范逻辑结构。<span style="color:#777;font-size:7px;letter-spacing:2.5px"> . .</span></div>
<div class="dl" style="top:278.3px;padding-left:23.08px;">对于普通群众和大多数党员来说，通常首发领导人讲话的方式主要是：新华</div>
<div class="dl" style="top:301.1px;letter-spacing:0.31px;">社通稿（后被其他媒体转发）、《求是》杂志、领导人讲话单行本及汇编。其他我</div>
<div class="dl" style="top:323.9px;">们常见的央视或新闻联播，要么是转新华社通稿，要么是对会议的新闻记录，标</div>
<div class="dl" style="top:346.7px;">志是“他指出”“他强调”，后面的内容为对讲话的概括性总结。其他途径还包括</div>
<div class="dl" style="top:369.5px;">上级单位向下级单位印发的文件、相关部门整理的简报、内参等，通常具有一定</div>
<div class="dl s" style="top:392.3px;">程度的保密限制。<span style="color:#777;font-size:7px;letter-spacing:2.5px"> . .</span></div>
<div class="dl" style="top:415.1px;padding-left:23.08px;">对于我们通常能够获取到的领导人讲话而言，普通人学习主要有政治意义和</div>
<div class="dl s" style="top:437.9px;">经济意义两个方面。<span style="color:#777;font-size:7px;letter-spacing:2.5px"> . .</span></div>
<div class="dl s" style="top:460.7px;padding-left:23.08px;width:420px;letter-spacing:0.59px;">其政治意义主要是，领导人讲话通常是领导人关于某一具体事项的具体论述，</div>
<div class="dl" style="top:483.5px;">对于某一具体事项有深刻的指导意义和实践内涵，在一定时间内是我们开展工作</div>
<div class="dl" style="top:506.3px;">的基本遵循。同时，领导人讲话也是领导思想的具体表现和最新内涵，与其之前</div>
<div class="dl s" style="top:536.4px;">的讲话构成理论体系，具有抽象的指导价值。<span style="color:#777;font-size:7px;letter-spacing:2.5px"> . .</span></div>
<div class="dl" style="top:559.1px;padding-left:23.08px;">通俗一点，就是我们可以通过领导人讲话知道领导人做了什么、将要做什么</div>
<div class="dl" style="top:581.8px;">以及为什么要这么做。对于学生而言，我们可以了解到哪些行业是国家将要大力</div>
<div class="dl s" style="top:604.5px;">推动并发展的，在个人职业规划上可以提供参考。<span style="color:#777;font-size:7px;letter-spacing:2.5px"> . .</span></div>
<div class="a" style="left:760.0px;top:200.5px;width:34.0px;height:0.8px;background:#5b8fd8;"></div>
<svg class="a" style="left:669.0px;top:306.0px;" width="7" height="12" viewBox="0 0 7 12"><path d="M1 0.5H6M3.5 0.5V11M1 11H6" stroke="#555" stroke-width="0.8" fill="none"/></svg>
<div class="a" style="left:896.0px;top:152.4px;width:194.6px;height:393.6px;background:#1f1f1f;"></div>
<span class="a t" style="left:903.3px;top:158.6px;font-size:9.7px;line-height:9.7px;color:#e4e4e4;">互动面板</span>
<svg class="a" style="left:1075.0px;top:159.0px;" width="7" height="7" viewBox="0 0 7 7"><path d="M0.5 0.5L6.5 6.5M6.5 0.5L0.5 6.5" stroke="#999" stroke-width="0.8"/></svg>
<svg class="a" style="left:904.5px;top:183.6px;" width="11" height="9" viewBox="0 0 11 9"><circle cx="4" cy="2.6" r="2.2" fill="#ddd"/><path d="M0 8.6C0 4.6 8 4.6 8 8.6Z" fill="#ddd"/><circle cx="8" cy="3.4" r="1.6" fill="#ddd"/><path d="M7 8.6C7.4 5.6 10.8 5.6 10.8 8.6Z" fill="#ddd"/></svg>
<span class="a t" style="left:919.4px;top:184.2px;font-size:8px;line-height:8px;color:#cfcfcf;">观看 <span style="font-size:9px">36</span></span>
<svg class="a" style="left:980.3px;top:182.6px;" width="11" height="10" viewBox="0 0 11 10"><path d="M0.3 4.6H2.6V9.4H0.3ZM3.2 9.4V4.6L5.6 0.6C7 0.6 7.2 1.8 6.6 3.8H10.2C11 3.8 11 9.4 9.2 9.4Z" fill="#ddd"/></svg>
<span class="a t" style="left:995.2px;top:184.2px;font-size:8px;line-height:8px;color:#cfcfcf;">赞 <span style="font-size:9px">0</span></span>
<span class="a t" style="left:904.5px;top:213.0px;font-size:8px;line-height:8px;color:#e2e2e2"><span style="color:#3079da">余水娟:</span><span style="margin-left:5px"><span style="font-size:9px">666</span></span></span>
<span class="a t" style="left:904.5px;top:227.0px;font-size:8px;line-height:8px;color:#e2e2e2"><span style="color:#3079da">刘书亦:</span><span style="margin-left:5px"><span style="font-size:9px">666</span></span></span>
<span class="a t" style="left:904.5px;top:241.0px;font-size:8px;line-height:8px;color:#e2e2e2"><span style="color:#3079da">余水娟:</span><span style="margin-left:5px"><span style="font-size:9px">66666666</span>张颖牛逼</span></span>
<span class="a t" style="left:904.5px;top:255.0px;font-size:8px;line-height:8px;color:#e2e2e2"><span style="color:#3079da">张婕妤:</span><span style="margin-left:5px"><span style="font-size:9px">666</span></span></span>
<span class="a t" style="left:904.5px;top:269.0px;font-size:8px;line-height:8px;color:#e2e2e2"><span style="color:#3079da">张颖:</span><span style="margin-left:5px">谢谢各位老铁</span></span>
<span class="a t" style="left:904.5px;top:283.0px;font-size:8px;line-height:8px;color:#e2e2e2"><span style="color:#3079da">梁德佳:</span><span style="margin-left:5px"><span style="font-size:9px">666.</span></span></span>
<span class="a t" style="left:904.5px;top:297.0px;font-size:8px;line-height:8px;color:#e2e2e2"><span style="color:#3079da">张颖:</span><span style="margin-left:5px">靠</span></span>
<span class="a t" style="left:904.5px;top:310.0px;font-size:8px;line-height:8px;color:#e2e2e2"><span style="color:#3079da">余水娟:</span><span style="margin-left:5px"><span style="font-size:9px">6666666</span></span></span>
<span class="a t" style="left:904.5px;top:324.0px;font-size:8px;line-height:8px;color:#e2e2e2"><span style="color:#3079da">张颖:</span><span style="margin-left:5px"><span style="font-size:9px">555</span></span></span>
<span class="a t" style="left:904.5px;top:338.0px;font-size:8px;line-height:8px;color:#e2e2e2"><span style="color:#3079da">谢长万:</span><span style="margin-left:5px">哇⊙∀⊙！</span></span>
<span class="a t" style="left:904.5px;top:352.0px;font-size:8px;line-height:8px;color:#e2e2e2"><span style="color:#3079da">张露微笑:</span><span style="margin-left:5px"><span style="font-size:9px">555</span></span></span>
<span class="a t" style="left:904.5px;top:366.0px;font-size:8px;line-height:8px;color:#e2e2e2"><span style="color:#3079da">刘书亦:</span><span style="margin-left:5px"><span style="font-size:9px">555</span></span></span>
<span class="a t" style="left:904.5px;top:380.0px;font-size:8px;line-height:8px;color:#e2e2e2"><span style="color:#3079da">李沛真:</span><span style="margin-left:5px"><span style="font-size:9px">555</span></span></span>
<span class="a t" style="left:904.5px;top:394.0px;font-size:8px;line-height:8px;color:#e2e2e2"><span style="color:#3079da">陈心画:</span><span style="margin-left:5px"><span style="font-size:9px">555</span></span></span>
<span class="a t" style="left:904.5px;top:407.0px;font-size:8px;line-height:8px;color:#e2e2e2"><span style="color:#3079da">余水娟:</span><span style="margin-left:5px"><span style="font-size:9px">5555</span></span></span>
<span class="a t" style="left:904.5px;top:421.0px;font-size:8px;line-height:8px;color:#e2e2e2"><span style="color:#3079da">张云:</span><span style="margin-left:5px"><span style="font-size:9px">555</span></span></span>
<span class="a t" style="left:904.5px;top:435.0px;font-size:8px;line-height:8px;color:#e2e2e2"><span style="color:#3079da">刘诗:</span><span style="margin-left:5px"><span style="font-size:9px">555</span></span></span>
<span class="a t" style="left:904.5px;top:449.0px;font-size:8px;line-height:8px;color:#e2e2e2"><span style="color:#3079da">刘诗:</span><span style="margin-left:5px"><span style="font-size:9px">555</span></span></span>
<span class="a t" style="left:904.5px;top:463.0px;font-size:8px;line-height:8px;color:#e2e2e2"><span style="color:#3079da">陈思:</span><span style="margin-left:5px"><span style="font-size:9px">555</span></span></span>
<span class="a t" style="left:904.5px;top:477.0px;font-size:8px;line-height:8px;color:#e2e2e2"><span style="color:#3079da">王佳:</span><span style="margin-left:5px"><span style="font-size:9px">555</span></span></span>
<span class="a t" style="left:904.5px;top:490.0px;font-size:8px;line-height:8px;color:#e2e2e2"><span style="color:#3079da">谭红:</span><span style="margin-left:5px"><span style="font-size:9px">555</span></span></span>
<div class="a" style="left:158.5px;top:628.5px;width:951.0px;height:20.0px;background:#f3f3f3;"></div>
<span class="a t" style="left:163.0px;top:635.2px;font-size:7.3px;line-height:7.3px;color:#444;word-spacing:0.5px">第 1 页, 共 2 页</span>
<span class="a t" style="left:228.8px;top:635.2px;font-size:7.3px;line-height:7.3px;color:#444;">1245 个字</span>
<svg class="a" style="left:273.0px;top:634.3px;" width="10" height="8" viewBox="0 0 10 8"><rect x="0.5" y="0.5" width="4.4" height="7" fill="none" stroke="#777" stroke-width="0.7"/><rect x="5.8" y="0.5" width="3.6" height="7" fill="none" stroke="#777" stroke-width="0.7"/><path d="M6.6 2.2H8.6M6.6 4H8.6" stroke="#777" stroke-width="0.6"/></svg>
<span class="a t" style="left:295.0px;top:635.2px;font-size:7.3px;line-height:7.3px;color:#444;">中文(中国)</span>
<svg class="a" style="left:884.5px;top:633.5px;" width="11" height="10" viewBox="0 0 11 10"><rect x="0.5" y="0.5" width="9" height="6" fill="#555"/><path d="M3 8.6H7" stroke="#555" stroke-width="0.9"/><circle cx="8.6" cy="7" r="2.2" fill="#444" stroke="#f3f3f3" stroke-width="0.5"/></svg>
<span class="a t" style="left:896.5px;top:635.0px;font-size:7.1px;line-height:7.1px;color:#444;">显示器设置</span>
<svg class="a" style="left:943.5px;top:633.6px;" width="11" height="10" viewBox="0 0 11 10"><path d="M0.6 0.6H4.8V9.2H0.6ZM6 0.6H10.2V9.2H6Z" fill="none" stroke="#bbb" stroke-width="0.7"/><path d="M1.4 2.6H4M1.4 4.6H4M1.4 6.6H4M6.8 2.6H9.4M6.8 4.6H9.4M6.8 6.6H9.4" stroke="#ccc" stroke-width="0.6"/></svg>
<div class="a" style="left:960.5px;top:629.5px;width:20.0px;height:18.5px;background:#d2d2d2;"></div>
<svg class="a" style="left:965.0px;top:633.5px;" width="11" height="10" viewBox="0 0 11 10"><rect x="0.6" y="0.6" width="9.8" height="8.8" fill="none" stroke="#888" stroke-width="0.8"/><path d="M2 2.8H9M2 4.8H9M2 6.8H9" stroke="#888" stroke-width="0.7"/></svg>
<svg class="a" style="left:985.5px;top:634.5px;" width="6" height="9" viewBox="0 0 6 9"><path d="M0.6 1H5M0.6 4H5M0.6 7H5" stroke="#aaa" stroke-width="0.7"/></svg>
<div class="a" style="left:989.4px;top:618.6px;width:117.8px;height:27.8px;border-radius:14px;background:linear-gradient(90deg,#c9a860 0%,#b6944e 22%,#94743a 50%,#7d6030 72%,#8b7648 100%);border:2px solid #e9dcb6;box-shadow:0 0 0 0.7px #cdbd94,inset 0 0 2px #5a4420"></div>
<span class="a t" style="left:1001.5px;top:626.5px;font-size:10.5px;line-height:10.5px;color:#f3de96;transform:translateX(-50%);font-weight:700">中</span>
<svg class="a" style="left:1010.5px;top:627.0px;" width="6" height="8" viewBox="0 0 6 8"><path d="M1 1C3 1.5 4 3 3 5.5" fill="none" stroke="#e8c56a" stroke-width="1.1"/></svg>
<svg class="a" style="left:1022.5px;top:626.5px;" width="10" height="10" viewBox="0 0 10 10"><path d="M7.5 0.8A4.6 4.6 0 1 0 9 7.4A3.8 3.8 0 0 1 7.5 0.8Z" fill="#f0d07a"/></svg>
<svg class="a" style="left:1036.0px;top:627.0px;" width="12" height="9" viewBox="0 0 12 9"><path d="M3.6 0.6L0.6 2.4L1.8 4.2L3 3.6V8.4H9V3.6L10.2 4.2L11.4 2.4L8.4 0.6C7.4 1.8 4.6 1.8 3.6 0.6Z" fill="#f0c868"/></svg>
<svg class="a" style="left:0;top:0" width="1268" height="713" viewBox="0 0 1268 713"><ellipse cx="1080" cy="632.5" rx="12.5" ry="6.5" fill="#2b2a3e"/><ellipse cx="1080" cy="637" rx="9" ry="3" fill="#4a3528"/><g transform="translate(1078.0 630.5) rotate(10)"><ellipse cx="0" cy="-2.67" rx="2.12" ry="2.39" fill="#2f4f8f" transform="rotate(0)"/><ellipse cx="0" cy="-2.67" rx="2.12" ry="2.39" fill="#2f4f8f" transform="rotate(72)"/><ellipse cx="0" cy="-2.67" rx="2.12" ry="2.39" fill="#2f4f8f" transform="rotate(144)"/><ellipse cx="0" cy="-2.67" rx="2.12" ry="2.39" fill="#2f4f8f" transform="rotate(216)"/><ellipse cx="0" cy="-2.67" rx="2.12" ry="2.39" fill="#2f4f8f" transform="rotate(288)"/><circle r="1.01" fill="#b8443a"/></g><g transform="translate(1087.6 631.2) rotate(30)"><ellipse cx="0" cy="-2.44" rx="1.93" ry="2.18" fill="#3560a8" transform="rotate(0)"/><ellipse cx="0" cy="-2.44" rx="1.93" ry="2.18" fill="#3560a8" transform="rotate(72)"/><ellipse cx="0" cy="-2.44" rx="1.93" ry="2.18" fill="#3560a8" transform="rotate(144)"/><ellipse cx="0" cy="-2.44" rx="1.93" ry="2.18" fill="#3560a8" transform="rotate(216)"/><ellipse cx="0" cy="-2.44" rx="1.93" ry="2.18" fill="#3560a8" transform="rotate(288)"/><circle r="0.92" fill="#d88a3a"/></g><g transform="translate(1092.5 634.5) rotate(0)"><ellipse cx="0" cy="-1.74" rx="1.38" ry="1.56" fill="#3f86c8" transform="rotate(0)"/><ellipse cx="0" cy="-1.74" rx="1.38" ry="1.56" fill="#3f86c8" transform="rotate(72)"/><ellipse cx="0" cy="-1.74" rx="1.38" ry="1.56" fill="#3f86c8" transform="rotate(144)"/><ellipse cx="0" cy="-1.74" rx="1.38" ry="1.56" fill="#3f86c8" transform="rotate(216)"/><ellipse cx="0" cy="-1.74" rx="1.38" ry="1.56" fill="#3f86c8" transform="rotate(288)"/><circle r="0.66" fill="#e0b040"/></g><g transform="translate(1068.8 627.6) rotate(20)"><ellipse cx="0" cy="-2.55" rx="2.02" ry="2.29" fill="#9fd4f4" transform="rotate(0)"/><ellipse cx="0" cy="-2.55" rx="2.02" ry="2.29" fill="#9fd4f4" transform="rotate(72)"/><ellipse cx="0" cy="-2.55" rx="2.02" ry="2.29" fill="#9fd4f4" transform="rotate(144)"/><ellipse cx="0" cy="-2.55" rx="2.02" ry="2.29" fill="#9fd4f4" transform="rotate(216)"/><ellipse cx="0" cy="-2.55" rx="2.02" ry="2.29" fill="#9fd4f4" transform="rotate(288)"/><circle r="0.97" fill="#f0d050"/></g><g transform="translate(1084.0 625.0) rotate(40)"><ellipse cx="0" cy="-2.67" rx="2.12" ry="2.39" fill="#6db8ec" transform="rotate(0)"/><ellipse cx="0" cy="-2.67" rx="2.12" ry="2.39" fill="#6db8ec" transform="rotate(72)"/><ellipse cx="0" cy="-2.67" rx="2.12" ry="2.39" fill="#6db8ec" transform="rotate(144)"/><ellipse cx="0" cy="-2.67" rx="2.12" ry="2.39" fill="#6db8ec" transform="rotate(216)"/><ellipse cx="0" cy="-2.67" rx="2.12" ry="2.39" fill="#6db8ec" transform="rotate(288)"/><circle r="1.01" fill="#f0d050"/></g><g transform="translate(1094.6 626.0) rotate(15)"><ellipse cx="0" cy="-2.55" rx="2.02" ry="2.29" fill="#86c6f0" transform="rotate(0)"/><ellipse cx="0" cy="-2.55" rx="2.02" ry="2.29" fill="#86c6f0" transform="rotate(72)"/><ellipse cx="0" cy="-2.55" rx="2.02" ry="2.29" fill="#86c6f0" transform="rotate(144)"/><ellipse cx="0" cy="-2.55" rx="2.02" ry="2.29" fill="#86c6f0" transform="rotate(216)"/><ellipse cx="0" cy="-2.55" rx="2.02" ry="2.29" fill="#86c6f0" transform="rotate(288)"/><circle r="0.97" fill="#f0d050"/></g><g transform="translate(1070.5 621.3) rotate(0)"><ellipse cx="0" cy="-3.25" rx="2.58" ry="2.91" fill="#5fb0ea" transform="rotate(0)"/><ellipse cx="0" cy="-3.25" rx="2.58" ry="2.91" fill="#5fb0ea" transform="rotate(72)"/><ellipse cx="0" cy="-3.25" rx="2.58" ry="2.91" fill="#5fb0ea" transform="rotate(144)"/><ellipse cx="0" cy="-3.25" rx="2.58" ry="2.91" fill="#5fb0ea" transform="rotate(216)"/><ellipse cx="0" cy="-3.25" rx="2.58" ry="2.91" fill="#5fb0ea" transform="rotate(288)"/><circle r="1.23" fill="#f2d23e"/></g><g transform="translate(1081.3 619.0) rotate(25)"><ellipse cx="0" cy="-3.60" rx="2.85" ry="3.22" fill="#4aa2e6" transform="rotate(0)"/><ellipse cx="0" cy="-3.60" rx="2.85" ry="3.22" fill="#4aa2e6" transform="rotate(72)"/><ellipse cx="0" cy="-3.60" rx="2.85" ry="3.22" fill="#4aa2e6" transform="rotate(144)"/><ellipse cx="0" cy="-3.60" rx="2.85" ry="3.22" fill="#4aa2e6" transform="rotate(216)"/><ellipse cx="0" cy="-3.60" rx="2.85" ry="3.22" fill="#4aa2e6" transform="rotate(288)"/><circle r="1.36" fill="#f2d23e"/></g><g transform="translate(1091.6 620.3) rotate(50)"><ellipse cx="0" cy="-3.13" rx="2.48" ry="2.81" fill="#63b4ec" transform="rotate(0)"/><ellipse cx="0" cy="-3.13" rx="2.48" ry="2.81" fill="#63b4ec" transform="rotate(72)"/><ellipse cx="0" cy="-3.13" rx="2.48" ry="2.81" fill="#63b4ec" transform="rotate(144)"/><ellipse cx="0" cy="-3.13" rx="2.48" ry="2.81" fill="#63b4ec" transform="rotate(216)"/><ellipse cx="0" cy="-3.13" rx="2.48" ry="2.81" fill="#63b4ec" transform="rotate(288)"/><circle r="1.19" fill="#f2d23e"/></g><g transform="translate(1075.5 615.2) rotate(0)"><ellipse cx="0" cy="-1.86" rx="1.47" ry="1.66" fill="#8cc8f0" transform="rotate(0)"/><ellipse cx="0" cy="-1.86" rx="1.47" ry="1.66" fill="#8cc8f0" transform="rotate(72)"/><ellipse cx="0" cy="-1.86" rx="1.47" ry="1.66" fill="#8cc8f0" transform="rotate(144)"/><ellipse cx="0" cy="-1.86" rx="1.47" ry="1.66" fill="#8cc8f0" transform="rotate(216)"/><ellipse cx="0" cy="-1.86" rx="1.47" ry="1.66" fill="#8cc8f0" transform="rotate(288)"/><circle r="0.70" fill="#f0d050"/></g><g transform="translate(1087.0 614.2) rotate(30)"><ellipse cx="0" cy="-1.74" rx="1.38" ry="1.56" fill="#9ad0f2" transform="rotate(0)"/><ellipse cx="0" cy="-1.74" rx="1.38" ry="1.56" fill="#9ad0f2" transform="rotate(72)"/><ellipse cx="0" cy="-1.74" rx="1.38" ry="1.56" fill="#9ad0f2" transform="rotate(144)"/><ellipse cx="0" cy="-1.74" rx="1.38" ry="1.56" fill="#9ad0f2" transform="rotate(216)"/><ellipse cx="0" cy="-1.74" rx="1.38" ry="1.56" fill="#9ad0f2" transform="rotate(288)"/><circle r="0.66" fill="#f0d050"/></g></svg>
<div class="a" style="left:158.5px;top:648.3px;width:951.0px;height:24.9px;background:#382d27;"></div>
<svg class="a" style="left:168.3px;top:656.0px;" width="9.5" height="9" viewBox="0 0 9.5 9"><path d="M0 1.3L4.2 0.7V4.2H0ZM4.9 0.6L9.5 0V4.2H4.9ZM0 4.9H4.2V8.4L0 7.8ZM4.9 4.9H9.5V9L4.9 8.4Z" fill="#fff"/></svg>
<svg class="a" style="left:196.5px;top:655.5px;" width="13" height="10" viewBox="0 0 13 10"><path d="M0.5 8.2H7.6M9 2V9M11.6 0.5V9.5" stroke="#cfcfcf" stroke-width="1" fill="none"/></svg>
<svg class="a" style="left:225.7px;top:654.5px;" width="14.5" height="12" viewBox="0 0 14.5 12"><path d="M0.5 1.2H5L6.2 2.6H14V11H0.5Z" fill="#f2c544"/><rect x="0.5" y="4.4" width="13.5" height="6.6" fill="#f7d768"/><rect x="3.2" y="7" width="8" height="4" fill="#3c8fd6"/><rect x="4.6" y="8.4" width="5.2" height="2.6" fill="#f7e7a8"/></svg>
<div class="a" style="left:256.5px;top:653.3px;width:14.4px;height:14.4px;border-radius:50%;background:conic-gradient(from -60deg,#e04a3a 0 120deg,#f5c92e 120deg 240deg,#3aa757 240deg 360deg)"></div>
<div class="a" style="left:260.4px;top:657.2px;width:6.6px;height:6.6px;border-radius:50%;background:#4a8af4;border:1.2px solid #fff"></div>
<div class="a" style="left:279.0px;top:648.3px;width:29.8px;height:24.9px;background:#c26a22;"></div>
<div class="a" style="left:279.0px;top:671.4px;width:29.8px;height:1.4px;background:#f07f1e;"></div>
<div class="a" style="left:286.2px;top:653.3px;width:14.4px;height:14.4px;border-radius:50%;background:#2f8ef0"></div>
<svg class="a" style="left:288.6px;top:656.0px;" width="10" height="9" viewBox="0 0 10 9"><path d="M1 1.2C4 1 7.6 2.4 8.6 4.4C6.8 4.8 6 6 5.4 8C4.6 6.4 3.8 5.6 2.6 5.2C3.8 5 4.6 4.6 5 4C3.6 3.6 2 2.6 1 1.2Z" fill="#fff"/></svg>
<div class="a" style="left:308.8px;top:648.3px;width:29.7px;height:24.9px;background:#57504a;"></div>
<div class="a" style="left:310.6px;top:670.9px;width:27.6px;height:1.6px;background:#e6dcc4;"></div>
<div class="a" style="left:317.5px;top:654.5px;width:9.6px;height:12.0px;background:#2b5fb4;"></div>
<div class="a" style="left:325.0px;top:655.5px;width:6.6px;height:10.0px;background:#e8eef8;"></div>
<div class="a" style="left:326.0px;top:657.3px;width:4.6px;height:0.9px;background:#7a9bd0;"></div><div class="a" style="left:326.0px;top:659.6px;width:4.6px;height:0.9px;background:#7a9bd0;"></div><div class="a" style="left:326.0px;top:661.9px;width:4.6px;height:0.9px;background:#7a9bd0;"></div>
<span class="a t" style="left:322.0px;top:657.3px;font-size:6.6px;line-height:6.6px;color:#fff;transform:translateX(-50%);font-weight:700">W</span>
<div class="a" style="left:346.7px;top:653.5px;width:14.3px;height:14.3px;background:#1f7fd0;border-radius:1.5px"></div>
<svg class="a" style="left:349.3px;top:657.0px;" width="9" height="7" viewBox="0 0 9 7"><path d="M0.6 2.8C3 0.4 6 0.4 8.4 2.8M2.2 4.4C3.6 3 5.4 3 6.8 4.4" fill="none" stroke="#bfe0fa" stroke-width="0.8"/><circle cx="4.5" cy="5.8" r="0.8" fill="#bfe0fa"/></svg>
<div class="a" style="left:342.6px;top:670.9px;width:23.6px;height:1.6px;background:#e6dcc4;"></div>
<div class="a" style="left:377.5px;top:653.5px;width:14.3px;height:14.3px;background:#2e8be8;border-radius:1.5px"></div>
<div class="a" style="left:380.6px;top:657.6px;width:8.2px;height:6.6px;background:#fff;border-radius:1px"></div>
<div class="a" style="left:383.3px;top:655.8px;width:2.8px;height:2.0px;background:#fff;"></div>
<div class="a" style="left:383.6px;top:659.7px;width:2.2px;height:2.2px;background:#2e8be8;"></div>
<div class="a" style="left:372.3px;top:670.9px;width:24.7px;height:1.6px;background:#e6dcc4;"></div>
<svg class="a" style="left:838.5px;top:658.0px;" width="7" height="5" viewBox="0 0 7 5"><path d="M0.6 4.2L3.5 1L6.4 4.2" fill="none" stroke="#cfcfcf" stroke-width="0.9"/></svg>
<div class="a" style="left:859.6px;top:654.0px;width:3.8px;height:9.2px;background:#efefef;border-radius:0.8px"></div><div class="a" style="left:860.6px;top:663.0px;width:1.8px;height:2.0px;background:#bdbdbd;"></div>
<div class="a" style="left:877.6px;top:654.3px;width:7px;height:10px;border-radius:3.4px 3.4px 2.6px 2.6px;background:#222"></div>
<div class="a" style="left:879.3px;top:660.3px;width:3.6px;height:3.8px;background:#f0f0f0;border-radius:1.8px"></div>
<div class="a" style="left:878.4px;top:659.4px;width:5.4px;height:1.2px;background:#d8352b;border-radius:0.6px"></div>
<div class="a" style="left:878.2px;top:664.2px;width:5.8px;height:1.1px;background:#d8921c;border-radius:0.6px"></div>
<div class="a" style="left:895.6px;top:656.4px;width:9.6px;height:7.0px;background:#dcdcdc;border-radius:1px"></div>
<div class="a" style="left:897.0px;top:658.0px;width:6.8px;height:3.8px;background:#8a8680;"></div>
<div class="a" style="left:894.6px;top:655.2px;width:3.0px;height:2.0px;background:#dcdcdc;"></div>
<svg class="a" style="left:915.5px;top:655.0px;" width="10" height="10" viewBox="0 0 10 10"><path d="M1 7C2.6 3.6 5.6 2.2 9 2.4M3 8C4 5.8 5.8 4.8 8 5M5.2 8.6C5.8 7.6 6.6 7.2 7.6 7.2" fill="none" stroke="#8f8a83" stroke-width="0.9"/></svg>
<svg class="a" style="left:933.5px;top:655.3px;" width="10" height="10" viewBox="0 0 10 10"><path d="M0.8 3.6H2.6L5 1.4V8.6L2.6 6.4H0.8Z" fill="none" stroke="#a8a39b" stroke-width="0.8"/><path d="M6.6 3.6L9 6.2M9 3.6L6.6 6.2" stroke="#a8a39b" stroke-width="0.7"/></svg>
<svg class="a" style="left:955.5px;top:653.5px;" width="12" height="13" viewBox="0 0 12 13"><path d="M7.6 1.2C10 0.6 11 3 9 4.6L6.4 6.6C5 7.6 6 9 7.2 8.4M4.8 11.6C2.4 12.4 1 10 3 8.2L5.8 6C7 5.2 6.2 3.8 5 4.4M3.6 11.8C4.6 10.6 5.6 9.6 6.8 8.8" fill="none" stroke="#f2f2f2" stroke-width="1.2"/></svg>
<div class="a" style="left:977.5px;top:655.2px;width:16.3px;height:10.0px;border:1px solid #d8d8d8;border-radius:0.8px"></div>
<div class="a" style="left:980.0px;top:657.7px;width:11.4px;height:4.8px;background:#a9a59e;"></div>
<div class="a" style="left:1001.0px;top:656.0px;width:7.0px;height:4.4px;border:0.9px solid #e6e6e6;border-radius:0.8px"></div>
<div class="a" style="left:1004.0px;top:660.6px;width:1.0px;height:2.0px;background:#ddd;"></div>
<div class="a" style="left:1016.2px;top:654.8px;width:11.0px;height:11.0px;background:#e8452a;border-radius:1.6px"></div>
<span class="a t" style="left:1021.7px;top:655.9px;font-size:9px;line-height:9px;color:#fff;transform:translateX(-50%);font-weight:700;font-style:italic">S</span>
<span class="a t" style="left:1054.8px;top:651.8px;font-size:7.3px;line-height:7.3px;color:#f2f2f2;transform:translateX(-50%);">19:17</span>
<span class="a t" style="left:1054.8px;top:662.8px;font-size:7.3px;line-height:7.3px;color:#f2f2f2;transform:translateX(-50%);">2020/2/18</span>
<svg class="a" style="left:1084.0px;top:654.3px;" width="14" height="14" viewBox="0 0 14 14"><path d="M0.6 0.6H10V7.4H4.6L2.6 9.4V7.4H0.6Z" fill="#f6f6f6"/><path d="M2.4 2.8H8.2M2.4 4.6H6.4" stroke="#382d27" stroke-width="0.7"/><circle cx="9.6" cy="9.2" r="3.6" fill="#382d27" stroke="#c9c9c9" stroke-width="0.7"/></svg>
<span class="a t" style="left:1093.7px;top:661.0px;font-size:5.2px;line-height:5.2px;color:#fff;transform:translateX(-50%);font-weight:700">3</span>
</div>
<div id="thumb" class="a"><div class="a" style="left:919.2px;top:412.0px;width:316.8px;height:178.2px;background:#f7f7f7;"></div>
<div class="a" style="left:919.2px;top:412.0px;width:316.8px;height:5.0px;background:#efefef;"></div>
<div class="a" style="left:919.2px;top:417.0px;width:316.8px;height:8.8px;background:#fff;"></div>
<div class="a" style="left:1222.5px;top:414.6px;width:2.4px;height:0.6px;background:#aaa;"></div>
<div class="a" style="left:1226.8px;top:413.4px;width:2.4px;height:2.2px;border:0.5px solid #aaa"></div>
<svg class="a" style="left:1231.0px;top:413.3px;" width="3" height="3" viewBox="0 0 3 3"><path d="M0.3 0.3L2.7 2.7M2.7 0.3L0.3 2.7" stroke="#aaa" stroke-width="0.5"/></svg>
<span class="a t" style="left:923.0px;top:419.7px;font-size:2.6px;line-height:2.6px;color:#222;font-weight:700">钉钉直播</span>
<div class="a" style="left:923.0px;top:422.5px;width:7.4px;height:3.3px;background:#f25a4a;border-radius:0.8px"></div>
<span class="a t" style="left:926.7px;top:424.1px;font-size:1.9px;line-height:1.9px;color:#fff;transform:translateX(-50%);">直播中</span>
<span class="a t" style="left:933.0px;top:423.9px;font-size:2.2px;line-height:2.2px;color:#999;">17:30:51</span>
<span class="a t" style="left:946.5px;top:423.9px;font-size:2.2px;line-height:2.2px;color:#999;">27人观看</span>
<span class="a t" style="left:1163.0px;top:421.4px;font-size:2.4px;line-height:2.4px;color:#888;">⌕ 多群联播</span>
<div class="a" style="left:1179.5px;top:419.8px;width:14.5px;height:4.0px;background:#f3f3f3;border-radius:0.8px"></div>
<span class="a t" style="left:1186.7px;top:421.4px;font-size:2.4px;line-height:2.4px;color:#333;transform:translateX(-50%);">分享直播</span>
<div class="a" style="left:1196.6px;top:419.6px;width:16.0px;height:4.4px;background:#fff;border:0.5px solid #f0a097;border-radius:0.8px"></div>
<span class="a t" style="left:1204.6px;top:421.4px;font-size:2.4px;line-height:2.4px;color:#e8503c;transform:translateX(-50%);">结束直播</span>
<div class="a" style="left:1215.4px;top:419.8px;width:14.6px;height:4.0px;background:#f3f3f3;border-radius:0.8px"></div>
<span class="a t" style="left:1222.7px;top:421.4px;font-size:2.4px;line-height:2.4px;color:#333;transform:translateX(-50%);">设置</span>
<div class="a" style="left:981.6px;top:425.8px;width:191.0px;height:144.0px;background:#000;"></div>
<div class="a" style="left:981.6px;top:433.8px;width:951px;height:634px;transform-origin:0 0;transform:scale(0.2008);overflow:hidden"><div class="a" style="left:-158.5px;top:-39px;width:1268px;height:713px"><div class="a" style="left:158.5px;top:39px;width:951px;height:634px;background:#e6e6e6"></div>
<div class="a" style="left:158.5px;top:39.0px;width:951.0px;height:39.0px;background:#2b579a;"></div>
<div class="a" style="left:380.0px;top:38.8px;width:508.0px;height:1.9px;background:#a9b2c6;"></div>
<svg class="a" style="left:172.0px;top:45.0px;" width="8" height="7" viewBox="0 0 8 7"><path d="M0.9 0V6.3H7.1V0M0.9 3.4H7.1" fill="none" stroke="#fff" stroke-width="1.5"/></svg>
<svg class="a" style="left:198.5px;top:44.5px;" width="8" height="7" viewBox="0 0 8 7"><path d="M2.5 0.8L0.8 2.5L2.5 4.2M1 2.5H5A2 2 0 0 1 5 6.3H3.5" fill="none" stroke="#8ea3c9" stroke-width="0.9"/></svg>
<svg class="a" style="left:225.0px;top:44.5px;" width="8" height="7" viewBox="0 0 8 7"><path d="M5.5 1.2A2.6 2.6 0 1 0 6.6 3.6M5 0.3L5.8 1.4L4.6 2" fill="none" stroke="#7f96c0" stroke-width="0.9"/></svg>
<svg class="a" style="left:252.5px;top:44.0px;" width="7" height="8" viewBox="0 0 7 8"><path d="M0.8 0.6H4.2L6 2.4M0.8 7H6" fill="none" stroke="#c5d0e6" stroke-width="1"/></svg>
<div class="a" style="left:281.5px;top:47.6px;width:2.0px;height:1.4px;background:#c5d0e6;"></div>
<span class="a t" style="left:634.5px;top:45.0px;font-size:7.5px;line-height:7.5px;color:#fff;transform:translateX(-50%);">为什么要学习领导人的讲话.docx&nbsp; -&nbsp; Word</span>
<span class="a t" style="left:979.5px;top:45.0px;font-size:7.6px;line-height:7.6px;color:#fff;transform:translateX(-50%);">zishu wang</span>
<svg class="a" style="left:1015.5px;top:45.0px;" width="8" height="7" viewBox="0 0 8 7"><rect x="0.6" y="0.6" width="6.8" height="5.6" fill="none" stroke="#fff" stroke-width="0.9"/><path d="M0.6 2.4H7.4M3 3.4L4 4.6L5 3.4" fill="none" stroke="#fff" stroke-width="0.8"/></svg>
<div class="a" style="left:1043.5px;top:48.3px;width:5.0px;height:1.0px;background:#fff;"></div>
<svg class="a" style="left:1068.0px;top:45.0px;" width="7" height="7" viewBox="0 0 7 7"><path d="M1.6 1.8V0.6H6.2V4.6H5" fill="none" stroke="#fff" stroke-width="0.8"/><rect x="0.6" y="2" width="4.2" height="3.8" fill="none" stroke="#fff" stroke-width="0.9"/></svg>
<svg class="a" style="left:1093.5px;top:45.3px;" width="7" height="7" viewBox="0 0 7 7"><path d="M0.6 0.6L6 6M6 0.6L0.6 6" stroke="#fff" stroke-width="0.9"/></svg>
<span class="a t" style="left:178.4px;top:65.4px;font-size:7.3px;line-height:7.3px;color:#fff;transform:translateX(-50%);">文件</span>
<div class="a" style="left:198.7px;top:60.0px;width:30.6px;height:18.2px;background:#f3f3f3;"></div>
<span class="a t" style="left:214.0px;top:65.8px;font-size:7.3px;line-height:7.3px;color:#2b579a;transform:translateX(-50%);">开始</span>
<span class="a t" style="left:244.5px;top:65.4px;font-size:7.3px;line-height:7.3px;color:#fff;transform:translateX(-50%);">插入</span>
<span class="a t" style="left:275.7px;top:65.4px;font-size:7.3px;line-height:7.3px;color:#fff;transform:translateX(-50%);">绘图</span>
<span class="a t" style="left:306.1px;top:65.4px;font-size:7.3px;line-height:7.3px;color:#fff;transform:translateX(-50%);">设计</span>
<span class="a t" style="left:337.3px;top:65.4px;font-size:7.3px;line-height:7.3px;color:#fff;transform:translateX(-50%);">布局</span>
<span class="a t" style="left:368.5px;top:65.4px;font-size:7.3px;line-height:7.3px;color:#fff;transform:translateX(-50%);">引用</span>
<span class="a t" style="left:399.0px;top:65.4px;font-size:7.3px;line-height:7.3px;color:#fff;transform:translateX(-50%);">邮件</span>
<span class="a t" style="left:430.3px;top:65.4px;font-size:7.3px;line-height:7.3px;color:#fff;transform:translateX(-50%);">审阅</span>
<span class="a t" style="left:461.4px;top:65.4px;font-size:7.3px;line-height:7.3px;color:#fff;transform:translateX(-50%);">视图</span>
<span class="a t" style="left:492.4px;top:65.4px;font-size:7.3px;line-height:7.3px;color:#fff;transform:translateX(-50%);">帮助</span>
<span class="a t" style="left:530.5px;top:65.6px;font-size:7.0px;line-height:7.0px;color:#fff;transform:translateX(-50%);">特色功能</span>
<span class="a t" style="left:575.0px;top:65.6px;font-size:7.0px;line-height:7.0px;color:#fff;transform:translateX(-50%);">福昕PDF</span>
<svg class="a" style="left:604.0px;top:64.5px;" width="6" height="8" viewBox="0 0 6 8"><path d="M3 0.6A2.2 2.2 0 0 1 4.2 4.6V5.8H1.8V4.6A2.2 2.2 0 0 1 3 0.6ZM2 7H4" fill="none" stroke="#fff" stroke-width="0.8"/></svg>
<span class="a t" style="left:614.0px;top:65.6px;font-size:7.0px;line-height:7.0px;color:#fff;">告诉我你想要做什么</span>
<svg class="a" style="left:1072.6px;top:64.8px;" width="7" height="8" viewBox="0 0 7 8"><circle cx="3" cy="2.2" r="1.5" fill="none" stroke="#fff" stroke-width="0.7"/><path d="M0.5 7C0.5 4.6 5.5 4.6 5.5 7M5.6 3.2V5.6M4.4 4.4H6.8" fill="none" stroke="#fff" stroke-width="0.7"/></svg>
<span class="a t" style="left:1083.3px;top:65.4px;font-size:7.3px;line-height:7.3px;color:#fff;">共享</span>
<div class="a" style="left:158.5px;top:78.0px;width:951.0px;height:65.5px;background:#f3f3f3;"></div>
<div class="a" style="left:158.5px;top:143.2px;width:951.0px;height:0.8px;background:#ececec;"></div>
<div class="a" style="left:242.5px;top:83.0px;width:0.7px;height:57.0px;background:#e1e1e1;"></div>
<div class="a" style="left:494.0px;top:83.0px;width:0.7px;height:57.0px;background:#e1e1e1;"></div>
<div class="a" style="left:679.5px;top:83.0px;width:0.7px;height:57.0px;background:#e1e1e1;"></div>
<div class="a" style="left:1011.5px;top:83.0px;width:0.7px;height:57.0px;background:#e1e1e1;"></div>
<div class="a" style="left:1065.5px;top:83.0px;width:0.7px;height:57.0px;background:#e1e1e1;"></div>
<svg class="a" style="left:168.0px;top:82.5px;" width="22" height="24" viewBox="0 0 22 24"><rect x="0.6" y="3.6" width="17" height="17.2" rx="0.8" fill="#e9c174"/><rect x="5.6" y="1.2" width="7" height="3.6" rx="1.2" fill="#7a7a7a"/><circle cx="9.1" cy="1.6" r="1.2" fill="none" stroke="#7a7a7a" stroke-width="0.7"/><path d="M11 9.3H17.2L20.6 12.8V22.2H11Z" fill="#fff" stroke="#6e6e6e" stroke-width="0.8"/><path d="M17.2 9.3V12.8H20.6" fill="none" stroke="#6e6e6e" stroke-width="0.6"/></svg>
<span class="a t" style="left:177.5px;top:108.9px;font-size:7.2px;line-height:7.2px;color:#444;transform:translateX(-50%);">粘贴</span>
<svg class="a" style="left:175.7px;top:120.9px" width="4.0" height="2.5" viewBox="0 0 2 1"><path d="M0 0H2L1 1Z" fill="#444"/></svg>
<div class="a" style="left:164.0px;top:106.1px;width:26.5px;height:0.6px;background:#dcdcdc;"></div>
<svg class="a" style="left:198.5px;top:85.0px;" width="9" height="9" viewBox="0 0 9 9"><path d="M2 0.5L6 6M7 0.5L3 6" stroke="#aaa" stroke-width="0.8" fill="none"/><circle cx="2.2" cy="7.2" r="1.4" fill="none" stroke="#aaa" stroke-width="0.8"/><circle cx="6.8" cy="7.2" r="1.4" fill="none" stroke="#aaa" stroke-width="0.8"/></svg>
<span class="a t" style="left:211.5px;top:86.2px;font-size:7.2px;line-height:7.2px;color:#a8a8a8;">剪切</span>
<svg class="a" style="left:199.0px;top:102.5px;" width="9" height="9" viewBox="0 0 9 9"><path d="M0.8 0.8H4.5L6 2.3V6.5H0.8Z M3 6.5V8.4H8.2V3.6H6" fill="none" stroke="#b5b5b5" stroke-width="0.8"/></svg>
<span class="a t" style="left:211.5px;top:103.6px;font-size:7.2px;line-height:7.2px;color:#a8a8a8;">复制</span>
<svg class="a" style="left:198.5px;top:119.0px;" width="9" height="9" viewBox="0 0 9 9"><path d="M0.8 4.5L4 2L6.2 4.8L3 7.5Z" fill="#f0b93a"/><path d="M5 3L8 0.8" stroke="#555" stroke-width="1.2"/></svg>
<span class="a t" style="left:210.5px;top:120.2px;font-size:7.2px;line-height:7.2px;color:#444;">格式刷</span>
<span class="a t" style="left:196.0px;top:135.3px;font-size:7.2px;line-height:7.2px;color:#444;transform:translateX(-50%);">剪贴板</span>
<svg class="a" style="left:234.0px;top:136.9px;" width="5" height="5" viewBox="0 0 5 5"><path d="M0.5 3V0.5H3M2 2L4.4 4.4M4.5 2.8V4.5H2.8" fill="none" stroke="#777" stroke-width="0.6"/></svg>
<div class="a" style="left:245.8px;top:88.3px;width:88.3px;height:13.4px;background:#fff;border:0.6px solid #e2e2e2"></div>
<span class="a t" style="left:247.8px;top:91.5px;font-size:6.9px;line-height:6.9px;color:#444;">仿宋_GB2312</span>
<svg class="a" style="left:328.6px;top:94.1px" width="4.0" height="2.5" viewBox="0 0 2 1"><path d="M0 0H2L1 1Z" fill="#444"/></svg>
<div class="a" style="left:334.4px;top:88.3px;width:24.3px;height:13.4px;background:#fff;border:0.6px solid #e2e2e2"></div>
<span class="a t" style="left:336.0px;top:91.5px;font-size:6.9px;line-height:6.9px;color:#444;">小四</span>
<svg class="a" style="left:353.8px;top:94.1px" width="4.0" height="2.5" viewBox="0 0 2 1"><path d="M0 0H2L1 1Z" fill="#444"/></svg>
<span class="a t" style="left:369.5px;top:90.2px;font-size:9.5px;line-height:9.5px;color:#444;transform:translateX(-50%);">A</span>
<span class="a t" style="left:373.0px;top:87.5px;font-size:5px;line-height:5px;color:#444;">ˆ</span>
<span class="a t" style="left:392.0px;top:92.2px;font-size:7px;line-height:7px;color:#444;transform:translateX(-50%);">A</span>
<span class="a t" style="left:394.5px;top:88.8px;font-size:4.5px;line-height:4.5px;color:#444;">ˇ</span>
<span class="a t" style="left:414.5px;top:90.5px;font-size:8.5px;line-height:8.5px;color:#444;transform:translateX(-50%);">Aa</span>
<svg class="a" style="left:420.5px;top:93.9px" width="4.0" height="2.5" viewBox="0 0 2 1"><path d="M0 0H2L1 1Z" fill="#444"/></svg>
<span class="a t" style="left:434.5px;top:89.5px;font-size:9px;line-height:9px;color:#444;transform:translateX(-50%);font-style:italic">A</span>
<svg class="a" style="left:434.0px;top:93.0px;" width="8" height="8" viewBox="0 0 8 8"><path d="M1 5L5 1L7 3L3 7Z" fill="#e8708f"/></svg>
<span class="a t" style="left:458.5px;top:91.3px;font-size:8px;line-height:8px;color:#4a7fc0;transform:translateX(-50%);">文</span>
<span class="a t" style="left:458.5px;top:87.2px;font-size:3.6px;line-height:3.6px;color:#666;transform:translateX(-50%);">wén</span>
<div class="a" style="left:473.3px;top:88.2px;width:0.8px;height:12.5px;background:#5b8fd0;"></div>
<span class="a t" style="left:480.5px;top:89.5px;font-size:10.5px;line-height:10.5px;color:#444;transform:translateX(-50%);">A</span>
<div class="a" style="left:474.0px;top:100.2px;width:11.5px;height:0.7px;background:#888;"></div>
<span class="a t" style="left:256.0px;top:112.2px;font-size:9.5px;line-height:9.5px;color:#444;transform:translateX(-50%);font-weight:700">B</span>
<span class="a t" style="left:278.0px;top:112.2px;font-size:9.5px;line-height:9.5px;color:#444;transform:translateX(-50%);font-style:italic;font-family:'Liberation Serif',serif;font-weight:700">I</span>
<span class="a t" style="left:299.0px;top:112.2px;font-size:9.5px;line-height:9.5px;color:#444;transform:translateX(-50%);">U</span>
<svg class="a" style="left:308.0px;top:117.4px" width="4.0" height="2.5" viewBox="0 0 2 1"><path d="M0 0H2L1 1Z" fill="#444"/></svg>
<span class="a t" style="left:323.2px;top:115.1px;font-size:7.2px;line-height:7.2px;color:#444;transform:translateX(-50%);">abc</span>
<span class="a t" style="left:343.5px;top:113.4px;font-size:8.5px;line-height:8.5px;color:#444;transform:translateX(-50%);">X</span>
<span class="a t" style="left:347.3px;top:118.8px;font-size:4.3px;line-height:4.3px;color:#3b78c4;">2</span>
<span class="a t" style="left:365.3px;top:113.4px;font-size:8.5px;line-height:8.5px;color:#444;transform:translateX(-50%);">X</span>
<span class="a t" style="left:369.3px;top:112.4px;font-size:4.3px;line-height:4.3px;color:#3b78c4;">2</span>
<span class="a t" style="left:388.5px;top:112.2px;font-size:10px;line-height:10px;color:#f3f3f3;transform:translateX(-50%);-webkit-text-stroke:0.55px #8fbbea">A</span>
<svg class="a" style="left:395.6px;top:117.4px" width="4.0" height="2.5" viewBox="0 0 2 1"><path d="M0 0H2L1 1Z" fill="#444"/></svg>
<svg class="a" style="left:405.5px;top:112.5px;" width="10" height="8" viewBox="0 0 10 8"><path d="M2 7L7.5 0.8M3.5 1.5L6.5 3.5" stroke="#555" stroke-width="1" fill="none"/></svg>
<div class="a" style="left:404.2px;top:121.3px;width:12.0px;height:2.2px;background:#ffef2e;"></div>
<svg class="a" style="left:419.6px;top:117.4px" width="4.0" height="2.5" viewBox="0 0 2 1"><path d="M0 0H2L1 1Z" fill="#444"/></svg>
<span class="a t" style="left:434.0px;top:112.5px;font-size:9.5px;line-height:9.5px;color:#444;transform:translateX(-50%);">A</span>
<div class="a" style="left:428.0px;top:121.3px;width:12.0px;height:2.2px;background:#e3111b;"></div>
<svg class="a" style="left:443.0px;top:117.4px" width="4.0" height="2.5" viewBox="0 0 2 1"><path d="M0 0H2L1 1Z" fill="#444"/></svg>
<div class="a" style="left:453.0px;top:112.5px;width:10.4px;height:10.6px;background:#a9a9a9;"></div>
<span class="a t" style="left:458.2px;top:113.7px;font-size:9px;line-height:9px;color:#3a3a3a;transform:translateX(-50%);">A</span>
<svg class="a" style="left:474.5px;top:112.7px;" width="11" height="11" viewBox="0 0 11 11"><circle cx="5.5" cy="5.5" r="4.8" fill="none" stroke="#aaa" stroke-width="0.7"/><path d="M2.8 4H8.2M3 6H8M5.5 3V8.5" stroke="#aaa" stroke-width="0.6" fill="none"/></svg>
<span class="a t" style="left:364.8px;top:135.3px;font-size:7.2px;line-height:7.2px;color:#444;transform:translateX(-50%);">字体</span>
<svg class="a" style="left:485.5px;top:136.9px;" width="5" height="5" viewBox="0 0 5 5"><path d="M0.5 3V0.5H3M2 2L4.4 4.4M4.5 2.8V4.5H2.8" fill="none" stroke="#777" stroke-width="0.6"/></svg>
<div class="a" style="left:506.5px;top:91.0px;width:6.5px;height:0.8px;background:#bbb;"></div><div class="a" style="left:503.3px;top:90.7px;width:1.4px;height:1.4px;background:#4c7fc4;"></div><div class="a" style="left:506.5px;top:94.2px;width:6.5px;height:0.8px;background:#bbb;"></div><div class="a" style="left:503.3px;top:93.9px;width:1.4px;height:1.4px;background:#4c7fc4;"></div><div class="a" style="left:506.5px;top:97.4px;width:6.5px;height:0.8px;background:#bbb;"></div><div class="a" style="left:503.3px;top:97.1px;width:1.4px;height:1.4px;background:#4c7fc4;"></div>
<svg class="a" style="left:516.0px;top:93.9px" width="4.0" height="2.5" viewBox="0 0 2 1"><path d="M0 0H2L1 1Z" fill="#444"/></svg>
<div class="a" style="left:530.5px;top:91.0px;width:7.0px;height:0.8px;background:#999;"></div><div class="a" style="left:527.3px;top:90.7px;width:1.4px;height:1.4px;background:#aaa;"></div><div class="a" style="left:530.5px;top:94.2px;width:7.0px;height:0.8px;background:#999;"></div><div class="a" style="left:527.3px;top:93.9px;width:1.4px;height:1.4px;background:#aaa;"></div><div class="a" style="left:530.5px;top:97.4px;width:7.0px;height:0.8px;background:#999;"></div><div class="a" style="left:527.3px;top:97.1px;width:1.4px;height:1.4px;background:#aaa;"></div>
<svg class="a" style="left:539.0px;top:93.9px" width="4.0" height="2.5" viewBox="0 0 2 1"><path d="M0 0H2L1 1Z" fill="#444"/></svg>
<svg class="a" style="left:549.5px;top:90.0px;" width="10" height="10" viewBox="0 0 10 10"><path d="M1 1H3M3 4H5.5M5 7.5H8" stroke="#bbb" stroke-width="0.9"/></svg>
<svg class="a" style="left:561.0px;top:93.9px" width="4.0" height="2.5" viewBox="0 0 2 1"><path d="M0 0H2L1 1Z" fill="#444"/></svg>
<div class="a" style="left:574.0px;top:90.5px;width:10.0px;height:0.8px;background:#999;"></div><div class="a" style="left:574.0px;top:93.0px;width:10.0px;height:0.8px;background:#999;"></div><div class="a" style="left:574.0px;top:95.5px;width:10.0px;height:0.8px;background:#999;"></div><div class="a" style="left:574.0px;top:98.0px;width:10.0px;height:0.8px;background:#999;"></div>
<svg class="a" style="left:572.5px;top:92.3px;" width="5" height="4" viewBox="0 0 5 4"><path d="M4 0L1 2L4 4Z" fill="#3b78c4"/></svg><div class="a" style="left:572.0px;top:92.0px;width:6.0px;height:4.6px;background:#f3f3f3;z-index:0"></div>
<svg class="a" style="left:572.8px;top:92.3px;" width="5" height="4" viewBox="0 0 5 4"><path d="M4 0L1 2L4 4Z" fill="#3b78c4"/></svg>
<div class="a" style="left:595.5px;top:90.5px;width:10.0px;height:0.8px;background:#999;"></div><div class="a" style="left:595.5px;top:93.0px;width:10.0px;height:0.8px;background:#999;"></div><div class="a" style="left:595.5px;top:95.5px;width:10.0px;height:0.8px;background:#999;"></div><div class="a" style="left:595.5px;top:98.0px;width:10.0px;height:0.8px;background:#999;"></div>
<div class="a" style="left:593.5px;top:92.0px;width:6.0px;height:4.6px;background:#f3f3f3;"></div>
<svg class="a" style="left:594.3px;top:92.3px;" width="5" height="4" viewBox="0 0 5 4"><path d="M1 0L4 2L1 4Z" fill="#3b78c4"/></svg>
<span class="a t" style="left:621.5px;top:90.0px;font-size:9px;line-height:9px;color:#333;transform:translateX(-50%);font-weight:700">A</span>
<svg class="a" style="left:616.0px;top:89.0px;" width="11" height="4" viewBox="0 0 11 4"><path d="M1 3.5L5.5 0.5L10 3.5" fill="none" stroke="#333" stroke-width="0.9"/></svg>
<svg class="a" style="left:627.5px;top:93.9px" width="4.0" height="2.5" viewBox="0 0 2 1"><path d="M0 0H2L1 1Z" fill="#444"/></svg>
<span class="a t" style="left:640.5px;top:88.8px;font-size:5.6px;line-height:5.6px;color:#3b78c4;transform:translateX(-50%);">A</span>
<span class="a t" style="left:640.5px;top:94.8px;font-size:5.6px;line-height:5.6px;color:#444;transform:translateX(-50%);">Z</span>
<svg class="a" style="left:644.0px;top:89.5px;" width="4" height="11" viewBox="0 0 4 11"><path d="M2 0V9M0.3 7L2 10L3.7 7" fill="none" stroke="#555" stroke-width="0.8"/></svg>
<div class="a" style="left:655.0px;top:87.6px;width:21.7px;height:15.0px;background:#c8c8c8;"></div>
<svg class="a" style="left:661.0px;top:90.5px;" width="9" height="9" viewBox="0 0 9 9"><path d="M5.5 0.8H3.2A2 2 0 0 0 3.2 4.8H4.2M4.2 0.8V8.4M6 0.8V8.4" fill="none" stroke="#666" stroke-width="0.8"/></svg>
<div class="a" style="left:503.8px;top:113.6px;width:8.8px;height:0.9px;background:#8a8a8a;"></div><div class="a" style="left:503.8px;top:116.7px;width:8.8px;height:0.9px;background:#8a8a8a;"></div><div class="a" style="left:503.8px;top:119.8px;width:8.8px;height:0.9px;background:#8a8a8a;"></div>
<div class="a" style="left:525.8px;top:113.6px;width:7.6px;height:0.9px;background:#8a8a8a;"></div><div class="a" style="left:525.8px;top:116.7px;width:7.6px;height:0.9px;background:#8a8a8a;"></div><div class="a" style="left:525.8px;top:119.8px;width:7.6px;height:0.9px;background:#8a8a8a;"></div>
<div class="a" style="left:547.5px;top:113.6px;width:8.8px;height:0.9px;background:#8a8a8a;"></div><div class="a" style="left:547.5px;top:116.7px;width:8.8px;height:0.9px;background:#8a8a8a;"></div><div class="a" style="left:547.5px;top:119.8px;width:8.8px;height:0.9px;background:#8a8a8a;"></div>
<div class="a" style="left:563.2px;top:110.4px;width:21.6px;height:15.3px;background:#c8c8c8;"></div>
<div class="a" style="left:568.8px;top:113.6px;width:10.0px;height:0.9px;background:#666;"></div><div class="a" style="left:568.8px;top:116.7px;width:10.0px;height:0.9px;background:#666;"></div><div class="a" style="left:568.8px;top:119.8px;width:10.0px;height:0.9px;background:#666;"></div>
<svg class="a" style="left:590.5px;top:112.3px;" width="11" height="11" viewBox="0 0 11 11"><path d="M0.6 0.5V10.5M10.4 0.5V10.5M0.6 2.5H10.4M0.6 5.6H10.4M2.6 8.3H8.4" fill="none" stroke="#3b78c4" stroke-width="0.9"/></svg>
<svg class="a" style="left:612.5px;top:112.5px;" width="9" height="11" viewBox="0 0 9 11"><path d="M1.8 0.8V10M0.3 2.5L1.8 0.6L3.3 2.5M0.3 8.3L1.8 10.2L3.3 8.3" fill="none" stroke="#3b78c4" stroke-width="0.8"/><path d="M4.6 2.4H8.6M4.6 5.4H8.6M4.6 8.4H8.6" stroke="#777" stroke-width="0.8"/></svg>
<svg class="a" style="left:623.5px;top:117.4px" width="4.0" height="2.5" viewBox="0 0 2 1"><path d="M0 0H2L1 1Z" fill="#444"/></svg>
<svg class="a" style="left:637.5px;top:113.0px;" width="10" height="10" viewBox="0 0 10 10"><path d="M3.8 1L7.6 4.8L4.6 7.8L0.8 4Z" fill="none" stroke="#777" stroke-width="0.8"/><path d="M8.2 5.6C9.2 7 9.2 8 8.2 8S7.2 7 8.2 5.6Z" fill="#777"/></svg>
<div class="a" style="left:637.0px;top:123.2px;width:10.0px;height:1.8px;background:#e0e0e0;"></div>
<svg class="a" style="left:649.5px;top:117.4px" width="4.0" height="2.5" viewBox="0 0 2 1"><path d="M0 0H2L1 1Z" fill="#444"/></svg>
<svg class="a" style="left:658.0px;top:113.0px;" width="10" height="10" viewBox="0 0 10 10"><rect x="0.6" y="0.6" width="8.8" height="8.8" fill="none" stroke="#bdbdbd" stroke-width="0.8" stroke-dasharray="1 1"/><path d="M0.6 5H9.4M5 0.6V9.4" stroke="#c8c8c8" stroke-width="0.7" stroke-dasharray="1 1"/></svg>
<svg class="a" style="left:670.5px;top:117.4px" width="4.0" height="2.5" viewBox="0 0 2 1"><path d="M0 0H2L1 1Z" fill="#444"/></svg>
<span class="a t" style="left:582.5px;top:135.3px;font-size:7.2px;line-height:7.2px;color:#444;transform:translateX(-50%);">段落</span>
<svg class="a" style="left:671.0px;top:136.9px;" width="5" height="5" viewBox="0 0 5 5"><path d="M0.5 3V0.5H3M2 2L4.4 4.4M4.5 2.8V4.5H2.8" fill="none" stroke="#777" stroke-width="0.6"/></svg>
<div class="a" style="left:683.6px;top:85.6px;width:323.0px;height:35.6px;background:#fff;border:0.7px solid #d6d6d6"></div>
<div class="a" style="left:684.2px;top:86.2px;width:43.4px;height:34.4px;border:1.5px solid #c4c4c4"></div>
<span class="a t" style="left:704.9px;top:94.3px;font-size:8.0px;line-height:8.0px;color:#333;transform:translateX(-50%);;letter-spacing:-0.25px">AaBbCcDc</span>
<span class="a t" style="left:704.9px;top:109.1px;font-size:6.4px;line-height:6.4px;color:#555;transform:translateX(-50%);">↵ 正文</span>
<svg class="a" style="left:997.0px;top:102.6px" width="3.6" height="2.2" viewBox="0 0 2 1"><path d="M0 0H2L1 1Z" fill="#555"/></svg>
<span class="a t" style="left:748.9px;top:94.3px;font-size:8.0px;line-height:8.0px;color:#333;transform:translateX(-50%);;letter-spacing:-0.25px">AaBbCcDc</span>
<span class="a t" style="left:748.9px;top:109.1px;font-size:6.4px;line-height:6.4px;color:#555;transform:translateX(-50%);">↵ 无间隔</span>
<svg class="a" style="left:997.0px;top:102.6px" width="3.6" height="2.2" viewBox="0 0 2 1"><path d="M0 0H2L1 1Z" fill="#555"/></svg>
<span class="a t" style="left:793.0px;top:89.0px;font-size:16.8px;line-height:16.8px;color:#111;transform:translateX(-50%);font-weight:700;letter-spacing:-0.25px">AaBl</span>
<span class="a t" style="left:793.0px;top:109.1px;font-size:6.4px;line-height:6.4px;color:#555;transform:translateX(-50%);">标题 1</span>
<svg class="a" style="left:997.0px;top:102.6px" width="3.6" height="2.2" viewBox="0 0 2 1"><path d="M0 0H2L1 1Z" fill="#555"/></svg>
<span class="a t" style="left:837.0px;top:92.2px;font-size:12.1px;line-height:12.1px;color:#333;transform:translateX(-50%);;letter-spacing:-0.25px">AaBbC</span>
<span class="a t" style="left:837.0px;top:109.1px;font-size:6.4px;line-height:6.4px;color:#555;transform:translateX(-50%);">标题 2</span>
<svg class="a" style="left:997.0px;top:102.6px" width="3.6" height="2.2" viewBox="0 0 2 1"><path d="M0 0H2L1 1Z" fill="#555"/></svg>
<span class="a t" style="left:881.1px;top:92.2px;font-size:12.1px;line-height:12.1px;color:#333;transform:translateX(-50%);;letter-spacing:-0.25px">AaBbC</span>
<span class="a t" style="left:881.1px;top:109.1px;font-size:6.4px;line-height:6.4px;color:#555;transform:translateX(-50%);">标题</span>
<svg class="a" style="left:997.0px;top:102.6px" width="3.6" height="2.2" viewBox="0 0 2 1"><path d="M0 0H2L1 1Z" fill="#555"/></svg>
<span class="a t" style="left:925.1px;top:92.4px;font-size:11.8px;line-height:11.8px;color:#111;transform:translateX(-50%);font-weight:700;letter-spacing:-0.25px">AaBbC</span>
<span class="a t" style="left:925.1px;top:109.1px;font-size:6.4px;line-height:6.4px;color:#555;transform:translateX(-50%);">副标题</span>
<svg class="a" style="left:997.0px;top:102.6px" width="3.6" height="2.2" viewBox="0 0 2 1"><path d="M0 0H2L1 1Z" fill="#555"/></svg>
<span class="a t" style="left:969.2px;top:94.4px;font-size:7.8px;line-height:7.8px;color:#8a8a8a;transform:translateX(-50%);font-style:italic;letter-spacing:-0.25px">AaBbCcDc</span>
<span class="a t" style="left:969.2px;top:109.1px;font-size:6.4px;line-height:6.4px;color:#555;transform:translateX(-50%);">不明显强调</span>
<svg class="a" style="left:997.0px;top:102.6px" width="3.6" height="2.2" viewBox="0 0 2 1"><path d="M0 0H2L1 1Z" fill="#555"/></svg>
<span class="a t" style="left:841.0px;top:135.3px;font-size:7.2px;line-height:7.2px;color:#444;transform:translateX(-50%);">样式</span>
<svg class="a" style="left:1003.5px;top:136.9px;" width="5" height="5" viewBox="0 0 5 5"><path d="M0.5 3V0.5H3M2 2L4.4 4.4M4.5 2.8V4.5H2.8" fill="none" stroke="#777" stroke-width="0.6"/></svg>
<svg class="a" style="left:1018.5px;top:84.0px;" width="10" height="10" viewBox="0 0 10 10"><circle cx="5.8" cy="3.6" r="2.8" fill="none" stroke="#3b78c4" stroke-width="0.9"/><path d="M3.8 5.6L0.8 8.8" stroke="#3b78c4" stroke-width="1.1"/></svg>
<span class="a t" style="left:1032.0px;top:85.2px;font-size:7.2px;line-height:7.2px;color:#444;">查找</span>
<svg class="a" style="left:1054.5px;top:87.9px" width="4.0" height="2.5" viewBox="0 0 2 1"><path d="M0 0H2L1 1Z" fill="#444"/></svg>
<span class="a t" style="left:1019.5px;top:101.0px;font-size:4.6px;line-height:4.6px;color:#3b78c4;">ab</span>
<span class="a t" style="left:1020.5px;top:105.0px;font-size:4.6px;line-height:4.6px;color:#777;">ac</span>
<svg class="a" style="left:1024.5px;top:102.0px;" width="5" height="7" viewBox="0 0 5 7"><path d="M0.5 1.5C3.5 0.5 4.5 3 2.8 5.6M1.6 4.6L2.8 6L4.2 4.9" fill="none" stroke="#3b78c4" stroke-width="0.6"/></svg>
<span class="a t" style="left:1032.0px;top:101.4px;font-size:7.2px;line-height:7.2px;color:#444;">替换</span>
<svg class="a" style="left:1019.5px;top:116.0px;" width="8" height="10" viewBox="0 0 8 10"><path d="M1 0.8L6.6 5.4L3.9 5.7L5.2 8.8L4.2 9.2L2.9 6.2L1 7.8Z" fill="none" stroke="#999" stroke-width="0.7"/></svg>
<span class="a t" style="left:1032.0px;top:117.4px;font-size:7.2px;line-height:7.2px;color:#444;">选择</span>
<svg class="a" style="left:1047.5px;top:120.4px" width="4.0" height="2.5" viewBox="0 0 2 1"><path d="M0 0H2L1 1Z" fill="#444"/></svg>
<span class="a t" style="left:1039.5px;top:135.3px;font-size:7.2px;line-height:7.2px;color:#444;transform:translateX(-50%);">编辑</span>
<svg class="a" style="left:1096.0px;top:136.5px;" width="7" height="5" viewBox="0 0 7 5"><path d="M0.6 4L3.5 1L6.4 4" fill="none" stroke="#555" stroke-width="1.1"/></svg>
<div class="a" style="left:159.0px;top:146.0px;width:12.5px;height:10.8px;background:#fbfbfb;"></div>
<svg class="a" style="left:163.5px;top:149.5px;" width="4" height="4" viewBox="0 0 4 4"><path d="M0.5 0V3.5H3.5" fill="none" stroke="#777" stroke-width="0.8"/></svg>
<div class="a" style="left:159.0px;top:158.5px;width:12.3px;height:368.0px;background:#fdfdfd;"></div>
<span class="a t" style="left:166.3px;top:168.4px;font-size:4.8px;line-height:4.8px;color:#707070;transform:translateX(-50%);transform:translateX(-50%) rotate(-90deg);font-weight:400">1</span>
<div class="a" style="left:164.3px;top:162.8px;width:4.0px;height:0.8px;background:#777;"></div>
<span class="a t" style="left:166.3px;top:183.6px;font-size:4.8px;line-height:4.8px;color:#707070;transform:translateX(-50%);transform:translateX(-50%) rotate(-90deg);font-weight:400">2</span>
<div class="a" style="left:164.3px;top:178.0px;width:4.0px;height:0.8px;background:#c9c9c9;"></div>
<span class="a t" style="left:166.3px;top:198.8px;font-size:4.8px;line-height:4.8px;color:#707070;transform:translateX(-50%);transform:translateX(-50%) rotate(-90deg);font-weight:400">3</span>
<div class="a" style="left:164.3px;top:193.2px;width:4.0px;height:0.8px;background:#c9c9c9;"></div>
<span class="a t" style="left:166.3px;top:214.0px;font-size:4.8px;line-height:4.8px;color:#707070;transform:translateX(-50%);transform:translateX(-50%) rotate(-90deg);font-weight:400">4</span>
<div class="a" style="left:164.3px;top:208.4px;width:4.0px;height:0.8px;background:#777;"></div>
<span class="a t" style="left:166.3px;top:229.2px;font-size:4.8px;line-height:4.8px;color:#707070;transform:translateX(-50%);transform:translateX(-50%) rotate(-90deg);font-weight:400">5</span>
<div class="a" style="left:164.3px;top:223.6px;width:4.0px;height:0.8px;background:#c9c9c9;"></div>
<span class="a t" style="left:166.3px;top:244.4px;font-size:4.8px;line-height:4.8px;color:#707070;transform:translateX(-50%);transform:translateX(-50%) rotate(-90deg);font-weight:400">6</span>
<div class="a" style="left:164.3px;top:238.8px;width:4.0px;height:0.8px;background:#c9c9c9;"></div>
<span class="a t" style="left:166.3px;top:259.6px;font-size:4.8px;line-height:4.8px;color:#707070;transform:translateX(-50%);transform:translateX(-50%) rotate(-90deg);font-weight:400">7</span>
<div class="a" style="left:164.3px;top:254.0px;width:4.0px;height:0.8px;background:#777;"></div>
<span class="a t" style="left:166.3px;top:274.8px;font-size:4.8px;line-height:4.8px;color:#707070;transform:translateX(-50%);transform:translateX(-50%) rotate(-90deg);font-weight:400">8</span>
<div class="a" style="left:164.3px;top:269.2px;width:4.0px;height:0.8px;background:#c9c9c9;"></div>
<span class="a t" style="left:166.3px;top:290.0px;font-size:4.8px;line-height:4.8px;color:#707070;transform:translateX(-50%);transform:translateX(-50%) rotate(-90deg);font-weight:400">9</span>
<div class="a" style="left:164.3px;top:284.4px;width:4.0px;height:0.8px;background:#c9c9c9;"></div>
<span class="a t" style="left:166.3px;top:305.2px;font-size:4.8px;line-height:4.8px;color:#707070;transform:translateX(-50%);transform:translateX(-50%) rotate(-90deg);font-weight:400">10</span>
<div class="a" style="left:164.3px;top:299.6px;width:4.0px;height:0.8px;background:#777;"></div>
<span class="a t" style="left:166.3px;top:320.4px;font-size:4.8px;line-height:4.8px;color:#707070;transform:translateX(-50%);transform:translateX(-50%) rotate(-90deg);font-weight:400">11</span>
<div class="a" style="left:164.3px;top:314.8px;width:4.0px;height:0.8px;background:#c9c9c9;"></div>
<span class="a t" style="left:166.3px;top:335.6px;font-size:4.8px;line-height:4.8px;color:#707070;transform:translateX(-50%);transform:translateX(-50%) rotate(-90deg);font-weight:400">12</span>
<div class="a" style="left:164.3px;top:330.0px;width:4.0px;height:0.8px;background:#c9c9c9;"></div>
<span class="a t" style="left:166.3px;top:350.8px;font-size:4.8px;line-height:4.8px;color:#707070;transform:translateX(-50%);transform:translateX(-50%) rotate(-90deg);font-weight:400">13</span>
<div class="a" style="left:164.3px;top:345.2px;width:4.0px;height:0.8px;background:#777;"></div>
<span class="a t" style="left:166.3px;top:366.0px;font-size:4.8px;line-height:4.8px;color:#707070;transform:translateX(-50%);transform:translateX(-50%) rotate(-90deg);font-weight:400">14</span>
<div class="a" style="left:164.3px;top:360.4px;width:4.0px;height:0.8px;background:#c9c9c9;"></div>
<span class="a t" style="left:166.3px;top:381.2px;font-size:4.8px;line-height:4.8px;color:#707070;transform:translateX(-50%);transform:translateX(-50%) rotate(-90deg);font-weight:400">15</span>
<div class="a" style="left:164.3px;top:375.6px;width:4.0px;height:0.8px;background:#c9c9c9;"></div>
<span class="a t" style="left:166.3px;top:396.4px;font-size:4.8px;line-height:4.8px;color:#707070;transform:translateX(-50%);transform:translateX(-50%) rotate(-90deg);font-weight:400">16</span>
<div class="a" style="left:164.3px;top:390.8px;width:4.0px;height:0.8px;background:#777;"></div>
<span class="a t" style="left:166.3px;top:411.6px;font-size:4.8px;line-height:4.8px;color:#707070;transform:translateX(-50%);transform:translateX(-50%) rotate(-90deg);font-weight:400">17</span>
<div class="a" style="left:164.3px;top:406.0px;width:4.0px;height:0.8px;background:#c9c9c9;"></div>
<span class="a t" style="left:166.3px;top:426.8px;font-size:4.8px;line-height:4.8px;color:#707070;transform:translateX(-50%);transform:translateX(-50%) rotate(-90deg);font-weight:400">18</span>
<div class="a" style="left:164.3px;top:421.2px;width:4.0px;height:0.8px;background:#c9c9c9;"></div>
<span class="a t" style="left:166.3px;top:442.0px;font-size:4.8px;line-height:4.8px;color:#707070;transform:translateX(-50%);transform:translateX(-50%) rotate(-90deg);font-weight:400">19</span>
<div class="a" style="left:164.3px;top:436.4px;width:4.0px;height:0.8px;background:#777;"></div>
<span class="a t" style="left:166.3px;top:457.2px;font-size:4.8px;line-height:4.8px;color:#707070;transform:translateX(-50%);transform:translateX(-50%) rotate(-90deg);font-weight:400">20</span>
<div class="a" style="left:164.3px;top:451.6px;width:4.0px;height:0.8px;background:#c9c9c9;"></div>
<span class="a t" style="left:166.3px;top:472.4px;font-size:4.8px;line-height:4.8px;color:#707070;transform:translateX(-50%);transform:translateX(-50%) rotate(-90deg);font-weight:400">21</span>
<div class="a" style="left:164.3px;top:466.8px;width:4.0px;height:0.8px;background:#c9c9c9;"></div>
<span class="a t" style="left:166.3px;top:487.6px;font-size:4.8px;line-height:4.8px;color:#707070;transform:translateX(-50%);transform:translateX(-50%) rotate(-90deg);font-weight:400">22</span>
<div class="a" style="left:164.3px;top:482.0px;width:4.0px;height:0.8px;background:#777;"></div>
<span class="a t" style="left:166.3px;top:502.8px;font-size:4.8px;line-height:4.8px;color:#707070;transform:translateX(-50%);transform:translateX(-50%) rotate(-90deg);font-weight:400">23</span>
<div class="a" style="left:164.3px;top:497.2px;width:4.0px;height:0.8px;background:#c9c9c9;"></div>
<span class="a t" style="left:166.3px;top:518.0px;font-size:4.8px;line-height:4.8px;color:#707070;transform:translateX(-50%);transform:translateX(-50%) rotate(-90deg);font-weight:400">24</span>
<div class="a" style="left:164.3px;top:512.4px;width:4.0px;height:0.8px;background:#c9c9c9;"></div>
<div class="a" style="left:346.0px;top:146.2px;width:87.5px;height:9.8px;background:#c3c3c3;"></div>
<div class="a" style="left:433.5px;top:145.6px;width:405.0px;height:12.6px;background:#fdfdfd;"></div>
<div class="a" style="left:838.5px;top:146.2px;width:88.2px;height:9.8px;background:#c3c3c3;"></div>
<svg class="a" style="left:836.0px;top:153.8px;" width="5" height="5" viewBox="0 0 5 5"><path d="M0.5 4.5H4.5V2.5L2.5 0.5L0.5 2.5Z" fill="#fff" stroke="#999" stroke-width="0.5"/></svg>
<span class="a t" style="left:351.9px;top:149.2px;font-size:4.4px;line-height:4.4px;color:#6f6f6f;transform:translateX(-50%);font-weight:400">8</span>
<div class="a" style="left:356.6px;top:148.7px;width:0.9px;height:5.4px;background:#858585;"></div>
<span class="a t" style="left:362.1px;top:149.2px;font-size:4.4px;line-height:4.4px;color:#6f6f6f;transform:translateX(-50%);font-weight:400">7</span>
<div class="a" style="left:366.8px;top:148.7px;width:0.9px;height:5.4px;background:#858585;"></div>
<span class="a t" style="left:372.3px;top:149.2px;font-size:4.4px;line-height:4.4px;color:#6f6f6f;transform:translateX(-50%);font-weight:400">6</span>
<div class="a" style="left:377.0px;top:148.7px;width:0.9px;height:5.4px;background:#858585;"></div>
<span class="a t" style="left:382.5px;top:149.2px;font-size:4.4px;line-height:4.4px;color:#6f6f6f;transform:translateX(-50%);font-weight:400">5</span>
<div class="a" style="left:387.2px;top:148.7px;width:0.9px;height:5.4px;background:#858585;"></div>
<span class="a t" style="left:392.7px;top:149.2px;font-size:4.4px;line-height:4.4px;color:#6f6f6f;transform:translateX(-50%);font-weight:400">4</span>
<div class="a" style="left:397.4px;top:148.7px;width:0.9px;height:5.4px;background:#858585;"></div>
<span class="a t" style="left:402.9px;top:149.2px;font-size:4.4px;line-height:4.4px;color:#6f6f6f;transform:translateX(-50%);font-weight:400">3</span>
<div class="a" style="left:407.6px;top:148.7px;width:0.9px;height:5.4px;background:#858585;"></div>
<span class="a t" style="left:413.1px;top:149.2px;font-size:4.4px;line-height:4.4px;color:#6f6f6f;transform:translateX(-50%);font-weight:400">2</span>
<div class="a" style="left:417.8px;top:148.7px;width:0.9px;height:5.4px;background:#858585;"></div>
<span class="a t" style="left:423.3px;top:149.2px;font-size:4.4px;line-height:4.4px;color:#6f6f6f;transform:translateX(-50%);font-weight:400">1</span>
<div class="a" style="left:428.0px;top:148.7px;width:0.9px;height:5.4px;background:#858585;"></div>
<div class="a" style="left:438.2px;top:148.7px;width:0.9px;height:5.4px;background:#777;"></div>
<span class="a t" style="left:443.7px;top:149.2px;font-size:4.4px;line-height:4.4px;color:#8a8a8a;transform:translateX(-50%);font-weight:400">1</span>
<div class="a" style="left:448.4px;top:148.7px;width:0.9px;height:5.4px;background:#9a9a9a;"></div>
<span class="a t" style="left:453.9px;top:149.2px;font-size:4.4px;line-height:4.4px;color:#8a8a8a;transform:translateX(-50%);font-weight:400">2</span>
<div class="a" style="left:458.6px;top:148.7px;width:0.9px;height:5.4px;background:#777;"></div>
<span class="a t" style="left:464.1px;top:149.2px;font-size:4.4px;line-height:4.4px;color:#8a8a8a;transform:translateX(-50%);font-weight:400">3</span>
<div class="a" style="left:468.8px;top:148.7px;width:0.9px;height:5.4px;background:#9a9a9a;"></div>
<span class="a t" style="left:474.3px;top:149.2px;font-size:4.4px;line-height:4.4px;color:#8a8a8a;transform:translateX(-50%);font-weight:400">4</span>
<div class="a" style="left:479.0px;top:148.7px;width:0.9px;height:5.4px;background:#777;"></div>
<span class="a t" style="left:484.5px;top:149.2px;font-size:4.4px;line-height:4.4px;color:#8a8a8a;transform:translateX(-50%);font-weight:400">5</span>
<div class="a" style="left:489.2px;top:148.7px;width:0.9px;height:5.4px;background:#9a9a9a;"></div>
<span class="a t" style="left:494.7px;top:149.2px;font-size:4.4px;line-height:4.4px;color:#8a8a8a;transform:translateX(-50%);font-weight:400">6</span>
<div class="a" style="left:499.4px;top:148.7px;width:0.9px;height:5.4px;background:#777;"></div>
<span class="a t" style="left:504.9px;top:149.2px;font-size:4.4px;line-height:4.4px;color:#8a8a8a;transform:translateX(-50%);font-weight:400">7</span>
<div class="a" style="left:509.6px;top:148.7px;width:0.9px;height:5.4px;background:#9a9a9a;"></div>
<span class="a t" style="left:515.1px;top:149.2px;font-size:4.4px;line-height:4.4px;color:#8a8a8a;transform:translateX(-50%);font-weight:400">8</span>
<div class="a" style="left:519.8px;top:148.7px;width:0.9px;height:5.4px;background:#777;"></div>
<span class="a t" style="left:525.3px;top:149.2px;font-size:4.4px;line-height:4.4px;color:#8a8a8a;transform:translateX(-50%);font-weight:400">9</span>
<div class="a" style="left:529.9px;top:148.7px;width:0.9px;height:5.4px;background:#9a9a9a;"></div>
<span class="a t" style="left:535.5px;top:149.2px;font-size:4.4px;line-height:4.4px;color:#8a8a8a;transform:translateX(-50%);font-weight:400">10</span>
<div class="a" style="left:540.1px;top:148.7px;width:0.9px;height:5.4px;background:#777;"></div>
<span class="a t" style="left:545.7px;top:149.2px;font-size:4.4px;line-height:4.4px;color:#8a8a8a;transform:translateX(-50%);font-weight:400">11</span>
<div class="a" style="left:550.4px;top:148.7px;width:0.9px;height:5.4px;background:#9a9a9a;"></div>
<span class="a t" style="left:555.9px;top:149.2px;font-size:4.4px;line-height:4.4px;color:#8a8a8a;transform:translateX(-50%);font-weight:400">12</span>
<div class="a" style="left:560.5px;top:148.7px;width:0.9px;height:5.4px;background:#777;"></div>
<span class="a t" style="left:566.1px;top:149.2px;font-size:4.4px;line-height:4.4px;color:#8a8a8a;transform:translateX(-50%);font-weight:400">13</span>
<div class="a" style="left:570.8px;top:148.7px;width:0.9px;height:5.4px;background:#9a9a9a;"></div>
<span class="a t" style="left:576.3px;top:149.2px;font-size:4.4px;line-height:4.4px;color:#8a8a8a;transform:translateX(-50%);font-weight:400">14</span>
<div class="a" style="left:580.9px;top:148.7px;width:0.9px;height:5.4px;background:#777;"></div>
<span class="a t" style="left:586.5px;top:149.2px;font-size:4.4px;line-height:4.4px;color:#8a8a8a;transform:translateX(-50%);font-weight:400">15</span>
<div class="a" style="left:591.1px;top:148.7px;width:0.9px;height:5.4px;background:#9a9a9a;"></div>
<span class="a t" style="left:596.7px;top:149.2px;font-size:4.4px;line-height:4.4px;color:#8a8a8a;transform:translateX(-50%);font-weight:400">16</span>
<div class="a" style="left:601.4px;top:148.7px;width:0.9px;height:5.4px;background:#777;"></div>
<span class="a t" style="left:606.9px;top:149.2px;font-size:4.4px;line-height:4.4px;color:#8a8a8a;transform:translateX(-50%);font-weight:400">17</span>
<div class="a" style="left:611.5px;top:148.7px;width:0.9px;height:5.4px;background:#9a9a9a;"></div>
<span class="a t" style="left:617.1px;top:149.2px;font-size:4.4px;line-height:4.4px;color:#8a8a8a;transform:translateX(-50%);font-weight:400">18</span>
<div class="a" style="left:621.8px;top:148.7px;width:0.9px;height:5.4px;background:#777;"></div>
<span class="a t" style="left:627.3px;top:149.2px;font-size:4.4px;line-height:4.4px;color:#8a8a8a;transform:translateX(-50%);font-weight:400">19</span>
<div class="a" style="left:631.9px;top:148.7px;width:0.9px;height:5.4px;background:#9a9a9a;"></div>
<span class="a t" style="left:637.5px;top:149.2px;font-size:4.4px;line-height:4.4px;color:#8a8a8a;transform:translateX(-50%);font-weight:400">20</span>
<div class="a" style="left:642.1px;top:148.7px;width:0.9px;height:5.4px;background:#777;"></div>
<span class="a t" style="left:647.7px;top:149.2px;font-size:4.4px;line-height:4.4px;color:#8a8a8a;transform:translateX(-50%);font-weight:400">21</span>
<div class="a" style="left:652.4px;top:148.7px;width:0.9px;height:5.4px;background:#9a9a9a;"></div>
<span class="a t" style="left:657.9px;top:149.2px;font-size:4.4px;line-height:4.4px;color:#8a8a8a;transform:translateX(-50%);font-weight:400">22</span>
<div class="a" style="left:662.5px;top:148.7px;width:0.9px;height:5.4px;background:#777;"></div>
<span class="a t" style="left:668.1px;top:149.2px;font-size:4.4px;line-height:4.4px;color:#8a8a8a;transform:translateX(-50%);font-weight:400">23</span>
<div class="a" style="left:672.8px;top:148.7px;width:0.9px;height:5.4px;background:#9a9a9a;"></div>
<span class="a t" style="left:678.3px;top:149.2px;font-size:4.4px;line-height:4.4px;color:#8a8a8a;transform:translateX(-50%);font-weight:400">24</span>
<div class="a" style="left:682.9px;top:148.7px;width:0.9px;height:5.4px;background:#777;"></div>
<span class="a t" style="left:688.5px;top:149.2px;font-size:4.4px;line-height:4.4px;color:#8a8a8a;transform:translateX(-50%);font-weight:400">25</span>
<div class="a" style="left:693.1px;top:148.7px;width:0.9px;height:5.4px;background:#9a9a9a;"></div>
<span class="a t" style="left:698.7px;top:149.2px;font-size:4.4px;line-height:4.4px;color:#8a8a8a;transform:translateX(-50%);font-weight:400">26</span>
<div class="a" style="left:703.4px;top:148.7px;width:0.9px;height:5.4px;background:#777;"></div>
<span class="a t" style="left:708.9px;top:149.2px;font-size:4.4px;line-height:4.4px;color:#8a8a8a;transform:translateX(-50%);font-weight:400">27</span>
<div class="a" style="left:713.5px;top:148.7px;width:0.9px;height:5.4px;background:#9a9a9a;"></div>
<span class="a t" style="left:719.1px;top:149.2px;font-size:4.4px;line-height:4.4px;color:#8a8a8a;transform:translateX(-50%);font-weight:400">28</span>
<div class="a" style="left:723.7px;top:148.7px;width:0.9px;height:5.4px;background:#777;"></div>
<span class="a t" style="left:729.3px;top:149.2px;font-size:4.4px;line-height:4.4px;color:#8a8a8a;transform:translateX(-50%);font-weight:400">29</span>
<div class="a" style="left:733.9px;top:148.7px;width:0.9px;height:5.4px;background:#9a9a9a;"></div>
<span class="a t" style="left:739.5px;top:149.2px;font-size:4.4px;line-height:4.4px;color:#8a8a8a;transform:translateX(-50%);font-weight:400">30</span>
<div class="a" style="left:744.1px;top:148.7px;width:0.9px;height:5.4px;background:#777;"></div>
<span class="a t" style="left:749.7px;top:149.2px;font-size:4.4px;line-height:4.4px;color:#8a8a8a;transform:translateX(-50%);font-weight:400">31</span>
<div class="a" style="left:754.4px;top:148.7px;width:0.9px;height:5.4px;background:#9a9a9a;"></div>
<span class="a t" style="left:759.9px;top:149.2px;font-size:4.4px;line-height:4.4px;color:#8a8a8a;transform:translateX(-50%);font-weight:400">32</span>
<div class="a" style="left:764.5px;top:148.7px;width:0.9px;height:5.4px;background:#777;"></div>
<span class="a t" style="left:770.1px;top:149.2px;font-size:4.4px;line-height:4.4px;color:#8a8a8a;transform:translateX(-50%);font-weight:400">33</span>
<div class="a" style="left:774.7px;top:148.7px;width:0.9px;height:5.4px;background:#9a9a9a;"></div>
<span class="a t" style="left:780.3px;top:149.2px;font-size:4.4px;line-height:4.4px;color:#8a8a8a;transform:translateX(-50%);font-weight:400">34</span>
<div class="a" style="left:784.9px;top:148.7px;width:0.9px;height:5.4px;background:#777;"></div>
<span class="a t" style="left:790.5px;top:149.2px;font-size:4.4px;line-height:4.4px;color:#8a8a8a;transform:translateX(-50%);font-weight:400">35</span>
<div class="a" style="left:795.1px;top:148.7px;width:0.9px;height:5.4px;background:#9a9a9a;"></div>
<span class="a t" style="left:800.7px;top:149.2px;font-size:4.4px;line-height:4.4px;color:#8a8a8a;transform:translateX(-50%);font-weight:400">36</span>
<div class="a" style="left:805.4px;top:148.7px;width:0.9px;height:5.4px;background:#777;"></div>
<span class="a t" style="left:810.9px;top:149.2px;font-size:4.4px;line-height:4.4px;color:#8a8a8a;transform:translateX(-50%);font-weight:400">37</span>
<div class="a" style="left:815.5px;top:148.7px;width:0.9px;height:5.4px;background:#9a9a9a;"></div>
<span class="a t" style="left:821.1px;top:149.2px;font-size:4.4px;line-height:4.4px;color:#8a8a8a;transform:translateX(-50%);font-weight:400">38</span>
<div class="a" style="left:825.7px;top:148.7px;width:0.9px;height:5.4px;background:#777;"></div>
<span class="a t" style="left:831.3px;top:149.2px;font-size:4.4px;line-height:4.4px;color:#8a8a8a;transform:translateX(-50%);font-weight:400">39</span>
<div class="a" style="left:835.9px;top:148.7px;width:0.9px;height:5.4px;background:#9a9a9a;"></div>
<span class="a t" style="left:841.5px;top:149.2px;font-size:4.4px;line-height:4.4px;color:#6f6f6f;transform:translateX(-50%);font-weight:400">40</span>
<div class="a" style="left:846.1px;top:148.7px;width:0.9px;height:5.4px;background:#858585;"></div>
<span class="a t" style="left:851.7px;top:149.2px;font-size:4.4px;line-height:4.4px;color:#6f6f6f;transform:translateX(-50%);font-weight:400">41</span>
<div class="a" style="left:856.4px;top:148.7px;width:0.9px;height:5.4px;background:#858585;"></div>
<span class="a t" style="left:861.9px;top:149.2px;font-size:4.4px;line-height:4.4px;color:#6f6f6f;transform:translateX(-50%);font-weight:400">42</span>
<div class="a" style="left:866.5px;top:148.7px;width:0.9px;height:5.4px;background:#858585;"></div>
<span class="a t" style="left:872.1px;top:149.2px;font-size:4.4px;line-height:4.4px;color:#6f6f6f;transform:translateX(-50%);font-weight:400">43</span>
<div class="a" style="left:876.7px;top:148.7px;width:0.9px;height:5.4px;background:#858585;"></div>
<span class="a t" style="left:882.3px;top:149.2px;font-size:4.4px;line-height:4.4px;color:#6f6f6f;transform:translateX(-50%);font-weight:400">44</span>
<div class="a" style="left:886.9px;top:148.7px;width:0.9px;height:5.4px;background:#858585;"></div>
<span class="a t" style="left:892.5px;top:149.2px;font-size:4.4px;line-height:4.4px;color:#6f6f6f;transform:translateX(-50%);font-weight:400">45</span>
<div class="a" style="left:897.1px;top:148.7px;width:0.9px;height:5.4px;background:#858585;"></div>
<span class="a t" style="left:902.7px;top:149.2px;font-size:4.4px;line-height:4.4px;color:#6f6f6f;transform:translateX(-50%);font-weight:400">46</span>
<div class="a" style="left:907.4px;top:148.7px;width:0.9px;height:5.4px;background:#858585;"></div>
<span class="a t" style="left:912.9px;top:149.2px;font-size:4.4px;line-height:4.4px;color:#6f6f6f;transform:translateX(-50%);font-weight:400">47</span>
<div class="a" style="left:917.5px;top:148.7px;width:0.9px;height:5.4px;background:#858585;"></div>
<span class="a t" style="left:923.1px;top:149.2px;font-size:4.4px;line-height:4.4px;color:#6f6f6f;transform:translateX(-50%);font-weight:400">48</span>
<svg class="a" style="left:454.5px;top:144.6px;" width="5" height="4" viewBox="0 0 5 4"><path d="M0.5 0.5H4.5L2.5 3.5Z" fill="#fff" stroke="#999" stroke-width="0.5"/></svg>
<svg class="a" style="left:431.8px;top:153.8px;" width="5" height="5" viewBox="0 0 5 5"><path d="M0.5 4.5H4.5V2.5L2.5 0.5L0.5 2.5Z" fill="#fff" stroke="#999" stroke-width="0.5"/></svg>
<div class="a" style="left:346.8px;top:158.0px;width:579.9px;height:470.5px;background:#fff;"></div>
<div class="a" style="left:346.8px;top:526.6px;width:579.9px;height:0.9px;background:#e2e2e2;"></div>
<div class="a" style="left:346.8px;top:527.5px;width:579.9px;height:1.2px;background:#f4f4f4;"></div>
<svg class="a" style="left:418.0px;top:521.0px;" width="18" height="7" viewBox="0 0 18 7"><path d="M0 1H17V6" fill="none" stroke="#dcdcdc" stroke-width="0.7"/></svg>
<svg class="a" style="left:839.0px;top:521.0px;" width="18" height="7" viewBox="0 0 18 7"><path d="M18 1H1V6" fill="none" stroke="#dcdcdc" stroke-width="0.7"/></svg>
<div class="dl s" style="top:164.3px;padding-left:23.08px;">因此，我们在学习领导人讲话时，要学会挑选学习内容以及增加敏感性。<span style="color:#777;font-size:7px;letter-spacing:2.5px"> . .</span></div>
<div class="dl" style="top:187.1px;padding-left:23.08px;">领导人讲话会随着时间、范围和需要的不同，不同程度地保密或者公开。领</div>
<div class="dl" style="top:209.9px;">导人讲话除了现场参会者（包括电视直播观众）直接听到外，还会以文字的形式</div>
<div class="dl" style="top:232.7px;">进行刊发，而且正式的通稿不一定与现场内容完全相同，会修改口误及口语化的</div>
<div class="dl s" style="top:255.5px;">表达，并且加上小标题等规范逻辑结构。<span style="color:#777;font-size:7px;letter-spacing:2.5px"> . .</span></div>
<div class="dl" style="top:278.3px;padding-left:23.08px;">对于普通群众和大多数党员来说，通常首发领导人讲话的方式主要是：新华</div>
<div class="dl" style="top:301.1px;letter-spacing:0.31px;">社通稿（后被其他媒体转发）、《求是》杂志、领导人讲话单行本及汇编。其他我</div>
<div class="dl" style="top:323.9px;">们常见的央视或新闻联播，要么是转新华社通稿，要么是对会议的新闻记录，标</div>
<div class="dl" style="top:346.7px;">志是“他指出”“他强调”，后面的内容为对讲话的概括性总结。其他途径还包括</div>
<div class="dl" style="top:369.5px;">上级单位向下级单位印发的文件、相关部门整理的简报、内参等，通常具有一定</div>
<div class="dl s" style="top:392.3px;">程度的保密限制。<span style="color:#777;font-size:7px;letter-spacing:2.5px"> . .</span></div>
<div class="dl" style="top:415.1px;padding-left:23.08px;">对于我们通常能够获取到的领导人讲话而言，普通人学习主要有政治意义和</div>
<div class="dl s" style="top:437.9px;">经济意义两个方面。<span style="color:#777;font-size:7px;letter-spacing:2.5px"> . .</span></div>
<div class="dl s" style="top:460.7px;padding-left:23.08px;width:420px;letter-spacing:0.59px;">其政治意义主要是，领导人讲话通常是领导人关于某一具体事项的具体论述，</div>
<div class="dl" style="top:483.5px;">对于某一具体事项有深刻的指导意义和实践内涵，在一定时间内是我们开展工作</div>
<div class="dl" style="top:506.3px;">的基本遵循。同时，领导人讲话也是领导思想的具体表现和最新内涵，与其之前</div>
<div class="dl s" style="top:536.4px;">的讲话构成理论体系，具有抽象的指导价值。<span style="color:#777;font-size:7px;letter-spacing:2.5px"> . .</span></div>
<div class="dl" style="top:559.1px;padding-left:23.08px;">通俗一点，就是我们可以通过领导人讲话知道领导人做了什么、将要做什么</div>
<div class="dl" style="top:581.8px;">以及为什么要这么做。对于学生而言，我们可以了解到哪些行业是国家将要大力</div>
<div class="dl s" style="top:604.5px;">推动并发展的，在个人职业规划上可以提供参考。<span style="color:#777;font-size:7px;letter-spacing:2.5px"> . .</span></div>
<div class="a" style="left:760.0px;top:200.5px;width:34.0px;height:0.8px;background:#5b8fd8;"></div>
<svg class="a" style="left:669.0px;top:306.0px;" width="7" height="12" viewBox="0 0 7 12"><path d="M1 0.5H6M3.5 0.5V11M1 11H6" stroke="#555" stroke-width="0.8" fill="none"/></svg>
<div class="a" style="left:896.0px;top:152.4px;width:194.6px;height:393.6px;background:#1f1f1f;"></div>
<span class="a t" style="left:903.3px;top:158.6px;font-size:9.7px;line-height:9.7px;color:#e4e4e4;">互动面板</span>
<svg class="a" style="left:1075.0px;top:159.0px;" width="7" height="7" viewBox="0 0 7 7"><path d="M0.5 0.5L6.5 6.5M6.5 0.5L0.5 6.5" stroke="#999" stroke-width="0.8"/></svg>
<svg class="a" style="left:904.5px;top:183.6px;" width="11" height="9" viewBox="0 0 11 9"><circle cx="4" cy="2.6" r="2.2" fill="#ddd"/><path d="M0 8.6C0 4.6 8 4.6 8 8.6Z" fill="#ddd"/><circle cx="8" cy="3.4" r="1.6" fill="#ddd"/><path d="M7 8.6C7.4 5.6 10.8 5.6 10.8 8.6Z" fill="#ddd"/></svg>
<span class="a t" style="left:919.4px;top:184.2px;font-size:8px;line-height:8px;color:#cfcfcf;">观看 <span style="font-size:9px">36</span></span>
<svg class="a" style="left:980.3px;top:182.6px;" width="11" height="10" viewBox="0 0 11 10"><path d="M0.3 4.6H2.6V9.4H0.3ZM3.2 9.4V4.6L5.6 0.6C7 0.6 7.2 1.8 6.6 3.8H10.2C11 3.8 11 9.4 9.2 9.4Z" fill="#ddd"/></svg>
<span class="a t" style="left:995.2px;top:184.2px;font-size:8px;line-height:8px;color:#cfcfcf;">赞 <span style="font-size:9px">0</span></span>
<span class="a t" style="left:904.5px;top:213.0px;font-size:8px;line-height:8px;color:#e2e2e2"><span style="color:#3079da">余水娟:</span><span style="margin-left:5px"><span style="font-size:9px">666</span></span></span>
<span class="a t" style="left:904.5px;top:227.0px;font-size:8px;line-height:8px;color:#e2e2e2"><span style="color:#3079da">刘书亦:</span><span style="margin-left:5px"><span style="font-size:9px">666</span></span></span>
<span class="a t" style="left:904.5px;top:241.0px;font-size:8px;line-height:8px;color:#e2e2e2"><span style="color:#3079da">余水娟:</span><span style="margin-left:5px"><span style="font-size:9px">66666666</span>张颖牛逼</span></span>
<span class="a t" style="left:904.5px;top:255.0px;font-size:8px;line-height:8px;color:#e2e2e2"><span style="color:#3079da">张婕妤:</span><span style="margin-left:5px"><span style="font-size:9px">666</span></span></span>
<span class="a t" style="left:904.5px;top:269.0px;font-size:8px;line-height:8px;color:#e2e2e2"><span style="color:#3079da">张颖:</span><span style="margin-left:5px">谢谢各位老铁</span></span>
<span class="a t" style="left:904.5px;top:283.0px;font-size:8px;line-height:8px;color:#e2e2e2"><span style="color:#3079da">梁德佳:</span><span style="margin-left:5px"><span style="font-size:9px">666.</span></span></span>
<span class="a t" style="left:904.5px;top:297.0px;font-size:8px;line-height:8px;color:#e2e2e2"><span style="color:#3079da">张颖:</span><span style="margin-left:5px">靠</span></span>
<span class="a t" style="left:904.5px;top:310.0px;font-size:8px;line-height:8px;color:#e2e2e2"><span style="color:#3079da">余水娟:</span><span style="margin-left:5px"><span style="font-size:9px">6666666</span></span></span>
<span class="a t" style="left:904.5px;top:324.0px;font-size:8px;line-height:8px;color:#e2e2e2"><span style="color:#3079da">张颖:</span><span style="margin-left:5px"><span style="font-size:9px">555</span></span></span>
<span class="a t" style="left:904.5px;top:338.0px;font-size:8px;line-height:8px;color:#e2e2e2"><span style="color:#3079da">谢长万:</span><span style="margin-left:5px">哇⊙∀⊙！</span></span>
<span class="a t" style="left:904.5px;top:352.0px;font-size:8px;line-height:8px;color:#e2e2e2"><span style="color:#3079da">张露微笑:</span><span style="margin-left:5px"><span style="font-size:9px">555</span></span></span>
<span class="a t" style="left:904.5px;top:366.0px;font-size:8px;line-height:8px;color:#e2e2e2"><span style="color:#3079da">刘书亦:</span><span style="margin-left:5px"><span style="font-size:9px">555</span></span></span>
<span class="a t" style="left:904.5px;top:380.0px;font-size:8px;line-height:8px;color:#e2e2e2"><span style="color:#3079da">李沛真:</span><span style="margin-left:5px"><span style="font-size:9px">555</span></span></span>
<span class="a t" style="left:904.5px;top:394.0px;font-size:8px;line-height:8px;color:#e2e2e2"><span style="color:#3079da">陈心画:</span><span style="margin-left:5px"><span style="font-size:9px">555</span></span></span>
<span class="a t" style="left:904.5px;top:407.0px;font-size:8px;line-height:8px;color:#e2e2e2"><span style="color:#3079da">余水娟:</span><span style="margin-left:5px"><span style="font-size:9px">5555</span></span></span>
<span class="a t" style="left:904.5px;top:421.0px;font-size:8px;line-height:8px;color:#e2e2e2"><span style="color:#3079da">张云:</span><span style="margin-left:5px"><span style="font-size:9px">555</span></span></span>
<span class="a t" style="left:904.5px;top:435.0px;font-size:8px;line-height:8px;color:#e2e2e2"><span style="color:#3079da">刘诗:</span><span style="margin-left:5px"><span style="font-size:9px">555</span></span></span>
<span class="a t" style="left:904.5px;top:449.0px;font-size:8px;line-height:8px;color:#e2e2e2"><span style="color:#3079da">刘诗:</span><span style="margin-left:5px"><span style="font-size:9px">555</span></span></span>
<span class="a t" style="left:904.5px;top:463.0px;font-size:8px;line-height:8px;color:#e2e2e2"><span style="color:#3079da">陈思:</span><span style="margin-left:5px"><span style="font-size:9px">555</span></span></span>
<span class="a t" style="left:904.5px;top:477.0px;font-size:8px;line-height:8px;color:#e2e2e2"><span style="color:#3079da">王佳:</span><span style="margin-left:5px"><span style="font-size:9px">555</span></span></span>
<span class="a t" style="left:904.5px;top:490.0px;font-size:8px;line-height:8px;color:#e2e2e2"><span style="color:#3079da">谭红:</span><span style="margin-left:5px"><span style="font-size:9px">555</span></span></span>
<div class="a" style="left:158.5px;top:628.5px;width:951.0px;height:20.0px;background:#f3f3f3;"></div>
<span class="a t" style="left:163.0px;top:635.2px;font-size:7.3px;line-height:7.3px;color:#444;word-spacing:0.5px">第 1 页, 共 2 页</span>
<span class="a t" style="left:228.8px;top:635.2px;font-size:7.3px;line-height:7.3px;color:#444;">1245 个字</span>
<svg class="a" style="left:273.0px;top:634.3px;" width="10" height="8" viewBox="0 0 10 8"><rect x="0.5" y="0.5" width="4.4" height="7" fill="none" stroke="#777" stroke-width="0.7"/><rect x="5.8" y="0.5" width="3.6" height="7" fill="none" stroke="#777" stroke-width="0.7"/><path d="M6.6 2.2H8.6M6.6 4H8.6" stroke="#777" stroke-width="0.6"/></svg>
<span class="a t" style="left:295.0px;top:635.2px;font-size:7.3px;line-height:7.3px;color:#444;">中文(中国)</span>
<svg class="a" style="left:884.5px;top:633.5px;" width="11" height="10" viewBox="0 0 11 10"><rect x="0.5" y="0.5" width="9" height="6" fill="#555"/><path d="M3 8.6H7" stroke="#555" stroke-width="0.9"/><circle cx="8.6" cy="7" r="2.2" fill="#444" stroke="#f3f3f3" stroke-width="0.5"/></svg>
<span class="a t" style="left:896.5px;top:635.0px;font-size:7.1px;line-height:7.1px;color:#444;">显示器设置</span>
<svg class="a" style="left:943.5px;top:633.6px;" width="11" height="10" viewBox="0 0 11 10"><path d="M0.6 0.6H4.8V9.2H0.6ZM6 0.6H10.2V9.2H6Z" fill="none" stroke="#bbb" stroke-width="0.7"/><path d="M1.4 2.6H4M1.4 4.6H4M1.4 6.6H4M6.8 2.6H9.4M6.8 4.6H9.4M6.8 6.6H9.4" stroke="#ccc" stroke-width="0.6"/></svg>
<div class="a" style="left:960.5px;top:629.5px;width:20.0px;height:18.5px;background:#d2d2d2;"></div>
<svg class="a" style="left:965.0px;top:633.5px;" width="11" height="10" viewBox="0 0 11 10"><rect x="0.6" y="0.6" width="9.8" height="8.8" fill="none" stroke="#888" stroke-width="0.8"/><path d="M2 2.8H9M2 4.8H9M2 6.8H9" stroke="#888" stroke-width="0.7"/></svg>
<svg class="a" style="left:985.5px;top:634.5px;" width="6" height="9" viewBox="0 0 6 9"><path d="M0.6 1H5M0.6 4H5M0.6 7H5" stroke="#aaa" stroke-width="0.7"/></svg>
<div class="a" style="left:989.4px;top:618.6px;width:117.8px;height:27.8px;border-radius:14px;background:linear-gradient(90deg,#c9a860 0%,#b6944e 22%,#94743a 50%,#7d6030 72%,#8b7648 100%);border:2px solid #e9dcb6;box-shadow:0 0 0 0.7px #cdbd94,inset 0 0 2px #5a4420"></div>
<span class="a t" style="left:1001.5px;top:626.5px;font-size:10.5px;line-height:10.5px;color:#f3de96;transform:translateX(-50%);font-weight:700">中</span>
<svg class="a" style="left:1010.5px;top:627.0px;" width="6" height="8" viewBox="0 0 6 8"><path d="M1 1C3 1.5 4 3 3 5.5" fill="none" stroke="#e8c56a" stroke-width="1.1"/></svg>
<svg class="a" style="left:1022.5px;top:626.5px;" width="10" height="10" viewBox="0 0 10 10"><path d="M7.5 0.8A4.6 4.6 0 1 0 9 7.4A3.8 3.8 0 0 1 7.5 0.8Z" fill="#f0d07a"/></svg>
<svg class="a" style="left:1036.0px;top:627.0px;" width="12" height="9" viewBox="0 0 12 9"><path d="M3.6 0.6L0.6 2.4L1.8 4.2L3 3.6V8.4H9V3.6L10.2 4.2L11.4 2.4L8.4 0.6C7.4 1.8 4.6 1.8 3.6 0.6Z" fill="#f0c868"/></svg>
<svg class="a" style="left:0;top:0" width="1268" height="713" viewBox="0 0 1268 713"><ellipse cx="1080" cy="632.5" rx="12.5" ry="6.5" fill="#2b2a3e"/><ellipse cx="1080" cy="637" rx="9" ry="3" fill="#4a3528"/><g transform="translate(1078.0 630.5) rotate(10)"><ellipse cx="0" cy="-2.67" rx="2.12" ry="2.39" fill="#2f4f8f" transform="rotate(0)"/><ellipse cx="0" cy="-2.67" rx="2.12" ry="2.39" fill="#2f4f8f" transform="rotate(72)"/><ellipse cx="0" cy="-2.67" rx="2.12" ry="2.39" fill="#2f4f8f" transform="rotate(144)"/><ellipse cx="0" cy="-2.67" rx="2.12" ry="2.39" fill="#2f4f8f" transform="rotate(216)"/><ellipse cx="0" cy="-2.67" rx="2.12" ry="2.39" fill="#2f4f8f" transform="rotate(288)"/><circle r="1.01" fill="#b8443a"/></g><g transform="translate(1087.6 631.2) rotate(30)"><ellipse cx="0" cy="-2.44" rx="1.93" ry="2.18" fill="#3560a8" transform="rotate(0)"/><ellipse cx="0" cy="-2.44" rx="1.93" ry="2.18" fill="#3560a8" transform="rotate(72)"/><ellipse cx="0" cy="-2.44" rx="1.93" ry="2.18" fill="#3560a8" transform="rotate(144)"/><ellipse cx="0" cy="-2.44" rx="1.93" ry="2.18" fill="#3560a8" transform="rotate(216)"/><ellipse cx="0" cy="-2.44" rx="1.93" ry="2.18" fill="#3560a8" transform="rotate(288)"/><circle r="0.92" fill="#d88a3a"/></g><g transform="translate(1092.5 634.5) rotate(0)"><ellipse cx="0" cy="-1.74" rx="1.38" ry="1.56" fill="#3f86c8" transform="rotate(0)"/><ellipse cx="0" cy="-1.74" rx="1.38" ry="1.56" fill="#3f86c8" transform="rotate(72)"/><ellipse cx="0" cy="-1.74" rx="1.38" ry="1.56" fill="#3f86c8" transform="rotate(144)"/><ellipse cx="0" cy="-1.74" rx="1.38" ry="1.56" fill="#3f86c8" transform="rotate(216)"/><ellipse cx="0" cy="-1.74" rx="1.38" ry="1.56" fill="#3f86c8" transform="rotate(288)"/><circle r="0.66" fill="#e0b040"/></g><g transform="translate(1068.8 627.6) rotate(20)"><ellipse cx="0" cy="-2.55" rx="2.02" ry="2.29" fill="#9fd4f4" transform="rotate(0)"/><ellipse cx="0" cy="-2.55" rx="2.02" ry="2.29" fill="#9fd4f4" transform="rotate(72)"/><ellipse cx="0" cy="-2.55" rx="2.02" ry="2.29" fill="#9fd4f4" transform="rotate(144)"/><ellipse cx="0" cy="-2.55" rx="2.02" ry="2.29" fill="#9fd4f4" transform="rotate(216)"/><ellipse cx="0" cy="-2.55" rx="2.02" ry="2.29" fill="#9fd4f4" transform="rotate(288)"/><circle r="0.97" fill="#f0d050"/></g><g transform="translate(1084.0 625.0) rotate(40)"><ellipse cx="0" cy="-2.67" rx="2.12" ry="2.39" fill="#6db8ec" transform="rotate(0)"/><ellipse cx="0" cy="-2.67" rx="2.12" ry="2.39" fill="#6db8ec" transform="rotate(72)"/><ellipse cx="0" cy="-2.67" rx="2.12" ry="2.39" fill="#6db8ec" transform="rotate(144)"/><ellipse cx="0" cy="-2.67" rx="2.12" ry="2.39" fill="#6db8ec" transform="rotate(216)"/><ellipse cx="0" cy="-2.67" rx="2.12" ry="2.39" fill="#6db8ec" transform="rotate(288)"/><circle r="1.01" fill="#f0d050"/></g><g transform="translate(1094.6 626.0) rotate(15)"><ellipse cx="0" cy="-2.55" rx="2.02" ry="2.29" fill="#86c6f0" transform="rotate(0)"/><ellipse cx="0" cy="-2.55" rx="2.02" ry="2.29" fill="#86c6f0" transform="rotate(72)"/><ellipse cx="0" cy="-2.55" rx="2.02" ry="2.29" fill="#86c6f0" transform="rotate(144)"/><ellipse cx="0" cy="-2.55" rx="2.02" ry="2.29" fill="#86c6f0" transform="rotate(216)"/><ellipse cx="0" cy="-2.55" rx="2.02" ry="2.29" fill="#86c6f0" transform="rotate(288)"/><circle r="0.97" fill="#f0d050"/></g><g transform="translate(1070.5 621.3) rotate(0)"><ellipse cx="0" cy="-3.25" rx="2.58" ry="2.91" fill="#5fb0ea" transform="rotate(0)"/><ellipse cx="0" cy="-3.25" rx="2.58" ry="2.91" fill="#5fb0ea" transform="rotate(72)"/><ellipse cx="0" cy="-3.25" rx="2.58" ry="2.91" fill="#5fb0ea" transform="rotate(144)"/><ellipse cx="0" cy="-3.25" rx="2.58" ry="2.91" fill="#5fb0ea" transform="rotate(216)"/><ellipse cx="0" cy="-3.25" rx="2.58" ry="2.91" fill="#5fb0ea" transform="rotate(288)"/><circle r="1.23" fill="#f2d23e"/></g><g transform="translate(1081.3 619.0) rotate(25)"><ellipse cx="0" cy="-3.60" rx="2.85" ry="3.22" fill="#4aa2e6" transform="rotate(0)"/><ellipse cx="0" cy="-3.60" rx="2.85" ry="3.22" fill="#4aa2e6" transform="rotate(72)"/><ellipse cx="0" cy="-3.60" rx="2.85" ry="3.22" fill="#4aa2e6" transform="rotate(144)"/><ellipse cx="0" cy="-3.60" rx="2.85" ry="3.22" fill="#4aa2e6" transform="rotate(216)"/><ellipse cx="0" cy="-3.60" rx="2.85" ry="3.22" fill="#4aa2e6" transform="rotate(288)"/><circle r="1.36" fill="#f2d23e"/></g><g transform="translate(1091.6 620.3) rotate(50)"><ellipse cx="0" cy="-3.13" rx="2.48" ry="2.81" fill="#63b4ec" transform="rotate(0)"/><ellipse cx="0" cy="-3.13" rx="2.48" ry="2.81" fill="#63b4ec" transform="rotate(72)"/><ellipse cx="0" cy="-3.13" rx="2.48" ry="2.81" fill="#63b4ec" transform="rotate(144)"/><ellipse cx="0" cy="-3.13" rx="2.48" ry="2.81" fill="#63b4ec" transform="rotate(216)"/><ellipse cx="0" cy="-3.13" rx="2.48" ry="2.81" fill="#63b4ec" transform="rotate(288)"/><circle r="1.19" fill="#f2d23e"/></g><g transform="translate(1075.5 615.2) rotate(0)"><ellipse cx="0" cy="-1.86" rx="1.47" ry="1.66" fill="#8cc8f0" transform="rotate(0)"/><ellipse cx="0" cy="-1.86" rx="1.47" ry="1.66" fill="#8cc8f0" transform="rotate(72)"/><ellipse cx="0" cy="-1.86" rx="1.47" ry="1.66" fill="#8cc8f0" transform="rotate(144)"/><ellipse cx="0" cy="-1.86" rx="1.47" ry="1.66" fill="#8cc8f0" transform="rotate(216)"/><ellipse cx="0" cy="-1.86" rx="1.47" ry="1.66" fill="#8cc8f0" transform="rotate(288)"/><circle r="0.70" fill="#f0d050"/></g><g transform="translate(1087.0 614.2) rotate(30)"><ellipse cx="0" cy="-1.74" rx="1.38" ry="1.56" fill="#9ad0f2" transform="rotate(0)"/><ellipse cx="0" cy="-1.74" rx="1.38" ry="1.56" fill="#9ad0f2" transform="rotate(72)"/><ellipse cx="0" cy="-1.74" rx="1.38" ry="1.56" fill="#9ad0f2" transform="rotate(144)"/><ellipse cx="0" cy="-1.74" rx="1.38" ry="1.56" fill="#9ad0f2" transform="rotate(216)"/><ellipse cx="0" cy="-1.74" rx="1.38" ry="1.56" fill="#9ad0f2" transform="rotate(288)"/><circle r="0.66" fill="#f0d050"/></g></svg>
<div class="a" style="left:158.5px;top:648.3px;width:951.0px;height:24.9px;background:#382d27;"></div>
<svg class="a" style="left:168.3px;top:656.0px;" width="9.5" height="9" viewBox="0 0 9.5 9"><path d="M0 1.3L4.2 0.7V4.2H0ZM4.9 0.6L9.5 0V4.2H4.9ZM0 4.9H4.2V8.4L0 7.8ZM4.9 4.9H9.5V9L4.9 8.4Z" fill="#fff"/></svg>
<svg class="a" style="left:196.5px;top:655.5px;" width="13" height="10" viewBox="0 0 13 10"><path d="M0.5 8.2H7.6M9 2V9M11.6 0.5V9.5" stroke="#cfcfcf" stroke-width="1" fill="none"/></svg>
<svg class="a" style="left:225.7px;top:654.5px;" width="14.5" height="12" viewBox="0 0 14.5 12"><path d="M0.5 1.2H5L6.2 2.6H14V11H0.5Z" fill="#f2c544"/><rect x="0.5" y="4.4" width="13.5" height="6.6" fill="#f7d768"/><rect x="3.2" y="7" width="8" height="4" fill="#3c8fd6"/><rect x="4.6" y="8.4" width="5.2" height="2.6" fill="#f7e7a8"/></svg>
<div class="a" style="left:256.5px;top:653.3px;width:14.4px;height:14.4px;border-radius:50%;background:conic-gradient(from -60deg,#e04a3a 0 120deg,#f5c92e 120deg 240deg,#3aa757 240deg 360deg)"></div>
<div class="a" style="left:260.4px;top:657.2px;width:6.6px;height:6.6px;border-radius:50%;background:#4a8af4;border:1.2px solid #fff"></div>
<div class="a" style="left:279.0px;top:648.3px;width:29.8px;height:24.9px;background:#c26a22;"></div>
<div class="a" style="left:279.0px;top:671.4px;width:29.8px;height:1.4px;background:#f07f1e;"></div>
<div class="a" style="left:286.2px;top:653.3px;width:14.4px;height:14.4px;border-radius:50%;background:#2f8ef0"></div>
<svg class="a" style="left:288.6px;top:656.0px;" width="10" height="9" viewBox="0 0 10 9"><path d="M1 1.2C4 1 7.6 2.4 8.6 4.4C6.8 4.8 6 6 5.4 8C4.6 6.4 3.8 5.6 2.6 5.2C3.8 5 4.6 4.6 5 4C3.6 3.6 2 2.6 1 1.2Z" fill="#fff"/></svg>
<div class="a" style="left:308.8px;top:648.3px;width:29.7px;height:24.9px;background:#57504a;"></div>
<div class="a" style="left:310.6px;top:670.9px;width:27.6px;height:1.6px;background:#e6dcc4;"></div>
<div class="a" style="left:317.5px;top:654.5px;width:9.6px;height:12.0px;background:#2b5fb4;"></div>
<div class="a" style="left:325.0px;top:655.5px;width:6.6px;height:10.0px;background:#e8eef8;"></div>
<div class="a" style="left:326.0px;top:657.3px;width:4.6px;height:0.9px;background:#7a9bd0;"></div><div class="a" style="left:326.0px;top:659.6px;width:4.6px;height:0.9px;background:#7a9bd0;"></div><div class="a" style="left:326.0px;top:661.9px;width:4.6px;height:0.9px;background:#7a9bd0;"></div>
<span class="a t" style="left:322.0px;top:657.3px;font-size:6.6px;line-height:6.6px;color:#fff;transform:translateX(-50%);font-weight:700">W</span>
<div class="a" style="left:346.7px;top:653.5px;width:14.3px;height:14.3px;background:#1f7fd0;border-radius:1.5px"></div>
<svg class="a" style="left:349.3px;top:657.0px;" width="9" height="7" viewBox="0 0 9 7"><path d="M0.6 2.8C3 0.4 6 0.4 8.4 2.8M2.2 4.4C3.6 3 5.4 3 6.8 4.4" fill="none" stroke="#bfe0fa" stroke-width="0.8"/><circle cx="4.5" cy="5.8" r="0.8" fill="#bfe0fa"/></svg>
<div class="a" style="left:342.6px;top:670.9px;width:23.6px;height:1.6px;background:#e6dcc4;"></div>
<div class="a" style="left:377.5px;top:653.5px;width:14.3px;height:14.3px;background:#2e8be8;border-radius:1.5px"></div>
<div class="a" style="left:380.6px;top:657.6px;width:8.2px;height:6.6px;background:#fff;border-radius:1px"></div>
<div class="a" style="left:383.3px;top:655.8px;width:2.8px;height:2.0px;background:#fff;"></div>
<div class="a" style="left:383.6px;top:659.7px;width:2.2px;height:2.2px;background:#2e8be8;"></div>
<div class="a" style="left:372.3px;top:670.9px;width:24.7px;height:1.6px;background:#e6dcc4;"></div>
<svg class="a" style="left:838.5px;top:658.0px;" width="7" height="5" viewBox="0 0 7 5"><path d="M0.6 4.2L3.5 1L6.4 4.2" fill="none" stroke="#cfcfcf" stroke-width="0.9"/></svg>
<div class="a" style="left:859.6px;top:654.0px;width:3.8px;height:9.2px;background:#efefef;border-radius:0.8px"></div><div class="a" style="left:860.6px;top:663.0px;width:1.8px;height:2.0px;background:#bdbdbd;"></div>
<div class="a" style="left:877.6px;top:654.3px;width:7px;height:10px;border-radius:3.4px 3.4px 2.6px 2.6px;background:#222"></div>
<div class="a" style="left:879.3px;top:660.3px;width:3.6px;height:3.8px;background:#f0f0f0;border-radius:1.8px"></div>
<div class="a" style="left:878.4px;top:659.4px;width:5.4px;height:1.2px;background:#d8352b;border-radius:0.6px"></div>
<div class="a" style="left:878.2px;top:664.2px;width:5.8px;height:1.1px;background:#d8921c;border-radius:0.6px"></div>
<div class="a" style="left:895.6px;top:656.4px;width:9.6px;height:7.0px;background:#dcdcdc;border-radius:1px"></div>
<div class="a" style="left:897.0px;top:658.0px;width:6.8px;height:3.8px;background:#8a8680;"></div>
<div class="a" style="left:894.6px;top:655.2px;width:3.0px;height:2.0px;background:#dcdcdc;"></div>
<svg class="a" style="left:915.5px;top:655.0px;" width="10" height="10" viewBox="0 0 10 10"><path d="M1 7C2.6 3.6 5.6 2.2 9 2.4M3 8C4 5.8 5.8 4.8 8 5M5.2 8.6C5.8 7.6 6.6 7.2 7.6 7.2" fill="none" stroke="#8f8a83" stroke-width="0.9"/></svg>
<svg class="a" style="left:933.5px;top:655.3px;" width="10" height="10" viewBox="0 0 10 10"><path d="M0.8 3.6H2.6L5 1.4V8.6L2.6 6.4H0.8Z" fill="none" stroke="#a8a39b" stroke-width="0.8"/><path d="M6.6 3.6L9 6.2M9 3.6L6.6 6.2" stroke="#a8a39b" stroke-width="0.7"/></svg>
<svg class="a" style="left:955.5px;top:653.5px;" width="12" height="13" viewBox="0 0 12 13"><path d="M7.6 1.2C10 0.6 11 3 9 4.6L6.4 6.6C5 7.6 6 9 7.2 8.4M4.8 11.6C2.4 12.4 1 10 3 8.2L5.8 6C7 5.2 6.2 3.8 5 4.4M3.6 11.8C4.6 10.6 5.6 9.6 6.8 8.8" fill="none" stroke="#f2f2f2" stroke-width="1.2"/></svg>
<div class="a" style="left:977.5px;top:655.2px;width:16.3px;height:10.0px;border:1px solid #d8d8d8;border-radius:0.8px"></div>
<div class="a" style="left:980.0px;top:657.7px;width:11.4px;height:4.8px;background:#a9a59e;"></div>
<div class="a" style="left:1001.0px;top:656.0px;width:7.0px;height:4.4px;border:0.9px solid #e6e6e6;border-radius:0.8px"></div>
<div class="a" style="left:1004.0px;top:660.6px;width:1.0px;height:2.0px;background:#ddd;"></div>
<div class="a" style="left:1016.2px;top:654.8px;width:11.0px;height:11.0px;background:#e8452a;border-radius:1.6px"></div>
<span class="a t" style="left:1021.7px;top:655.9px;font-size:9px;line-height:9px;color:#fff;transform:translateX(-50%);font-weight:700;font-style:italic">S</span>
<span class="a t" style="left:1054.8px;top:651.8px;font-size:7.3px;line-height:7.3px;color:#f2f2f2;transform:translateX(-50%);">19:17</span>
<span class="a t" style="left:1054.8px;top:662.8px;font-size:7.3px;line-height:7.3px;color:#f2f2f2;transform:translateX(-50%);">2020/2/18</span>
<svg class="a" style="left:1084.0px;top:654.3px;" width="14" height="14" viewBox="0 0 14 14"><path d="M0.6 0.6H10V7.4H4.6L2.6 9.4V7.4H0.6Z" fill="#f6f6f6"/><path d="M2.4 2.8H8.2M2.4 4.6H6.4" stroke="#382d27" stroke-width="0.7"/><circle cx="9.6" cy="9.2" r="3.6" fill="#382d27" stroke="#c9c9c9" stroke-width="0.7"/></svg>
<span class="a t" style="left:1093.7px;top:661.0px;font-size:5.2px;line-height:5.2px;color:#fff;transform:translateX(-50%);font-weight:700">3</span></div></div>
<div class="a" style="left:919.2px;top:570.2px;width:316.8px;height:11.6px;background:#fff;"></div>
<div class="a" style="left:923.6px;top:573.0px;width:2.4px;height:2.8px;background:#9a9a9a;border-radius:1px"></div>
<div class="a" style="left:923.0px;top:577.6px;width:3.6px;height:0.6px;background:#c4c4c4;"></div>
<div class="a" style="left:934.4px;top:573.0px;width:2.4px;height:2.8px;background:#9a9a9a;border-radius:1px"></div>
<div class="a" style="left:933.8px;top:577.6px;width:3.6px;height:0.6px;background:#c4c4c4;"></div>
<div class="a" style="left:1204.9px;top:572.4px;width:3.6px;height:3.8px;border:0.7px solid #9a9a9a;border-radius:1.2px"></div>
<div class="a" style="left:1204.3px;top:578.0px;width:4.8px;height:0.6px;background:#c8c8c8;"></div>
<div class="a" style="left:1215.2px;top:572.4px;width:3.6px;height:3.8px;border:0.7px solid #ee5a4a;border-radius:1.2px"></div>
<div class="a" style="left:1214.6px;top:578.0px;width:4.8px;height:0.6px;background:#d0b8b4;"></div>
<div class="a" style="left:1226.7px;top:572.4px;width:3.6px;height:3.8px;border:0.7px solid #9a9a9a;border-radius:1.2px"></div>
<div class="a" style="left:1226.1px;top:578.0px;width:4.8px;height:0.6px;background:#c8c8c8;"></div>
<div class="a" style="left:1188.6px;top:441.9px;width:45.6px;height:93.0px;background:#222;"></div>
<span class="a t" style="left:1190.4px;top:444.2px;font-size:2.5px;line-height:2.5px;color:#ddd;">互动面板</span>
<svg class="a" style="left:1230.5px;top:443.6px;" width="2" height="2" viewBox="0 0 2 2"><path d="M0.2 0.2L1.8 1.8M1.8 0.2L0.2 1.8" stroke="#888" stroke-width="0.4"/></svg>
<span class="a t" style="left:1190.8px;top:449.9px;font-size:2.3px;line-height:2.3px;color:#ccc;">● 观看 27</span>
<span class="a t" style="left:1208.6px;top:449.9px;font-size:2.3px;line-height:2.3px;color:#ccc;">▲ 赞 0</span>
<span class="a t" style="left:1199.8px;top:456.2px;font-size:2.4px;line-height:2.4px;color:#4a90e2;transform:translateX(-50%);">互动</span>
<span class="a t" style="left:1222.8px;top:456.2px;font-size:2.4px;line-height:2.4px;color:#ccc;transform:translateX(-50%);">群聊 (41人)</span>
<div class="a" style="left:1188.6px;top:459.2px;width:23.0px;height:0.9px;background:#3a7bd5;"></div>
<div class="a" style="left:1211.6px;top:459.4px;width:22.6px;height:0.5px;background:#3a3a3a;"></div>
<div class="a" style="left:1191.0px;top:462.6px;width:41.2px;height:8.8px;background:#fff;border-radius:0.8px"></div>
<div class="a" style="left:1192.8px;top:463.8px;width:6.4px;height:6.4px;border-radius:50%;background:#2a4f8a;border:0.8px solid #7fa0d0"></div>
<span class="a t" style="left:1201.0px;top:465.0px;font-size:2.8px;line-height:2.8px;color:#333;font-weight:700">团课</span>
<span class="a t" style="left:1201.0px;top:468.7px;font-size:1.9px;line-height:1.9px;color:#8ab;">直播群</span>
<div class="a" style="left:1220.0px;top:464.8px;width:10.0px;height:4.4px;background:#f2584a;border-radius:0.8px"></div>
<span class="a t" style="left:1225.0px;top:466.9px;font-size:1.9px;line-height:1.9px;color:#fff;transform:translateX(-50%);">直播中</span>
<span class="a t" style="left:1190.2px;top:473.9px;font-size:2.55px;line-height:2.55px;color:#e39a1e;font-weight:700;letter-spacing:0.05px">余水娟 19:16 66666666张颖</span>
<span class="a t" style="left:1191.8px;top:477.2px;font-size:2.55px;line-height:2.55px;color:#cf8a18;font-weight:700">牛逼666</span>
<span class="a t" style="left:1190.2px;top:480.5px;font-size:2.55px;line-height:2.55px;color:#e39a1e;font-weight:700;letter-spacing:0.05px">张颖 19:16 谢谢各位老铁</span>
<span class="a t" style="left:1191.8px;top:483.8px;font-size:2.55px;line-height:2.55px;color:#cf8a18;font-weight:700">支持</span>
<span class="a t" style="left:1190.2px;top:487.0px;font-size:2.55px;line-height:2.55px;color:#e39a1e;font-weight:700;letter-spacing:0.05px">冯成义 19:17 欢迎来看直播</span>
<span class="a t" style="left:1191.8px;top:490.3px;font-size:2.55px;line-height:2.55px;color:#cf8a18;font-weight:700">团课团课</span>
<span class="a t" style="left:1190.2px;top:493.6px;font-size:2.55px;line-height:2.55px;color:#e39a1e;font-weight:700;letter-spacing:0.05px">张露微笑 19:17 [666][666]</span>
<span class="a t" style="left:1191.8px;top:496.9px;font-size:2.55px;line-height:2.55px;color:#cf8a18;font-weight:700">[666]</span>
<span class="a t" style="left:1190.2px;top:500.1px;font-size:2.55px;line-height:2.55px;color:#e39a1e;font-weight:700;letter-spacing:0.05px">李沛真 19:17 6666主播加油</span>
<span class="a t" style="left:1191.8px;top:503.4px;font-size:2.55px;line-height:2.55px;color:#cf8a18;font-weight:700">加油</span>
<span class="a t" style="left:1190.2px;top:506.7px;font-size:2.55px;line-height:2.55px;color:#e39a1e;font-weight:700;letter-spacing:0.05px">元舒妍 19:17 666团课团课</span>
<span class="a t" style="left:1191.8px;top:510.0px;font-size:2.55px;line-height:2.55px;color:#cf8a18;font-weight:700">真棒</span>
<span class="a t" style="left:1190.2px;top:513.2px;font-size:2.55px;line-height:2.55px;color:#e39a1e;font-weight:700;letter-spacing:0.05px">余水娟 19:17 欢迎大家观看</span>
<span class="a t" style="left:1191.8px;top:516.5px;font-size:2.55px;line-height:2.55px;color:#cf8a18;font-weight:700">直播</span>
<span class="a t" style="left:1190.2px;top:519.8px;font-size:2.55px;line-height:2.55px;color:#e39a1e;font-weight:700;letter-spacing:0.05px">刘书亦 19:17 555老师好棒</span>
<span class="a t" style="left:1191.8px;top:523.1px;font-size:2.55px;line-height:2.55px;color:#cf8a18;font-weight:700">点赞</span>
<span class="a t" style="left:1190.2px;top:526.3px;font-size:2.55px;line-height:2.55px;color:#e39a1e;font-weight:700;letter-spacing:0.05px">陈心画 19:17 团课团课66</span>
<span class="a t" style="left:1191.8px;top:529.6px;font-size:2.55px;line-height:2.55px;color:#cf8a18;font-weight:700">666</span>
<div class="a" style="left:1192.7px;top:538.0px;width:39.4px;height:29.6px;background:#fff;"></div>
<div class="a" style="left:1192.7px;top:538.0px;width:39.4px;height:3.4px;background:#4a4a4a;"></div>
<div class="a" style="left:1192.7px;top:564.0px;width:39.4px;height:3.6px;background:#4a4a4a;"></div>
<div class="a" style="left:1200.0px;top:543.4px;width:24.0px;height:1.8px;background:#2b579a;"></div>
<div class="a" style="left:1200.0px;top:545.2px;width:24.0px;height:2.6px;background:#eee;"></div>
<div class="a" style="left:1200.0px;top:547.8px;width:24.0px;height:13.0px;background:#e4e4e4;"></div>
<div class="a" style="left:1204.6px;top:547.8px;width:14.0px;height:13.0px;background:#fff;"></div>
<div class="a" style="left:1200.0px;top:560.8px;width:24.0px;height:1.2px;background:#222;"></div>
<div class="a" style="left:1219.2px;top:548.4px;width:4.6px;height:10.6px;background:#222;"></div>
<div class="a" style="left:1226.2px;top:545.0px;width:5.6px;height:14.6px;background:#222;"></div>
<div class="a" style="left:1226.6px;top:559.6px;width:5.0px;height:2.0px;background:#ddd;"></div>
<div class="a" style="left:1200.5px;top:564.6px;width:26.0px;height:1.2px;background:#6f6f5a;"></div>
<div class="a" style="left:919.2px;top:581.8px;width:316.8px;height:8.4px;background:#1c2f49;"></div>
<div class="a" style="left:919.2px;top:581.8px;width:9.8px;height:8.4px;background:#16293a;"></div>
<svg class="a" style="left:922.3px;top:584.2px;" width="3.6" height="3.6" viewBox="0 0 3.6 3.6"><path d="M0 0.5L1.6 0.3V1.6H0ZM1.9 0.25L3.6 0V1.6H1.9ZM0 1.9H1.6V3.2L0 3ZM1.9 1.9H3.6V3.5L1.9 3.25Z" fill="#fff"/></svg>
<div class="a" style="left:929.0px;top:582.2px;width:69.4px;height:7.6px;background:#ececec;"></div>
<span class="a t" style="left:931.5px;top:585.5px;font-size:2.5px;line-height:2.5px;color:#555;">⌕ 在这里输入你要搜索的内容</span>
<div class="a" style="left:1002.1px;top:583.8px;width:4.2px;height:4.4px;background:#cfd6df;border-radius:0.8px"></div>
<div class="a" style="left:1012.7px;top:583.8px;width:4.2px;height:4.4px;background:#cfd6df;border-radius:0.8px"></div>
<div class="a" style="left:1022.4px;top:583.8px;width:4.2px;height:4.4px;background:#3a8ee0;border-radius:0.8px"></div>
<div class="a" style="left:1032.7px;top:583.8px;width:4.2px;height:4.4px;background:#e04a3a;border-radius:0.8px"></div>
<div class="a" style="left:1043.1px;top:583.8px;width:4.2px;height:4.4px;background:#cfd6df;border-radius:0.8px"></div>
<div class="a" style="left:1053.7px;top:583.8px;width:4.2px;height:4.4px;background:#2f6fd0;border-radius:0.8px"></div>
<div class="a" style="left:1064.4px;top:583.8px;width:4.2px;height:4.4px;background:#f2c230;border-radius:0.8px"></div>
<div class="a" style="left:1074.0px;top:583.8px;width:4.2px;height:4.4px;background:#3a8ee0;border-radius:0.8px"></div>
<div class="a" style="left:1083.7px;top:583.8px;width:4.2px;height:4.4px;background:#f2c230;border-radius:0.8px"></div>
<div class="a" style="left:1103.7px;top:583.8px;width:4.2px;height:4.4px;background:#e9e9e9;border-radius:0.8px"></div>
<div class="a" style="left:1114.4px;top:583.8px;width:4.2px;height:4.4px;background:#f2c544;border-radius:0.8px"></div>
<div class="a" style="left:1091.3px;top:581.8px;width:9.2px;height:8.4px;background:#b8722e;"></div>
<div class="a" style="left:1093.2px;top:583.8px;width:5.2px;height:4.4px;background:#58c060;border-radius:1.5px"></div>
<div class="a" style="left:1122.0px;top:581.8px;width:9.2px;height:8.4px;background:#b8722e;"></div>
<div class="a" style="left:1124.4px;top:583.8px;width:4.6px;height:4.4px;background:#3a8ee0;border-radius:2px"></div>
<div class="a" style="left:1131.6px;top:581.8px;width:10.2px;height:8.4px;background:#3f8fe6;"></div>
<div class="a" style="left:1134.6px;top:584.0px;width:4.2px;height:3.8px;background:#e8f2fc;border-radius:0.6px"></div>
<svg class="a" style="left:1177.5px;top:585.0px;" width="2.6" height="2" viewBox="0 0 2.6 2"><path d="M0.2 1.6L1.3 0.4L2.4 1.6" fill="none" stroke="#ccc" stroke-width="0.4"/></svg>
<div class="a" style="left:1187.0px;top:584.6px;width:2.6px;height:2.8px;background:#ddd;border-radius:0.5px"></div>
<div class="a" style="left:1192.2px;top:584.6px;width:2.6px;height:2.8px;background:#bbb;border-radius:0.5px"></div>
<div class="a" style="left:1197.3px;top:584.6px;width:2.6px;height:2.8px;background:#ddd;border-radius:0.5px"></div>
<div class="a" style="left:1202.7px;top:584.6px;width:2.6px;height:2.8px;background:#e8452a;border-radius:0.5px"></div>
<span class="a t" style="left:1216.3px;top:583.9px;font-size:2.3px;line-height:2.3px;color:#ddd;transform:translateX(-50%);">17:30</span>
<span class="a t" style="left:1216.3px;top:587.2px;font-size:2.3px;line-height:2.3px;color:#ddd;transform:translateX(-50%);">2020/2/18</span>
<div class="a" style="left:1226.4px;top:584.2px;width:3.4px;height:3.2px;background:#f0f0f0;border-radius:0.5px"></div>
<div class="a" style="left:1234.2px;top:581.8px;width:0.5px;height:8.4px;background:#6a7a90;"></div></div>
<div class="a chat" style="top:254px;padding-right:4.2px"><b>张颖:</b> 欢迎大家来观看直播<i style="margin-left:9.3px;letter-spacing:2.6px;font-size:31px;line-height:30px;position:relative;top:1.5px">“</i>团课团课<i style="margin-left:4.4px;letter-spacing:4.4px;font-size:31px;line-height:30px;position:relative;top:1.5px">”</i>。</div>
<div class="a chat" style="top:300px"><b>冯成义:</b> <i>[</i>赞<i style="letter-spacing:3px">][</i>赞<i style="letter-spacing:1.4px">]</i></div>
<div class="a chat" style="top:346.5px"><b>冯成义:</b> <i>666</i></div>
<div class="a chat" style="top:392.7px"><b>张露微笑:</b> <i style="letter-spacing:1.6px">[666][666][666]</i></div>
<div class="a chat" style="top:438.7px"><b>李沛真:</b> <i>6666</i></div>
<div class="a chat" style="top:484.7px"><b>元舒妍:</b> <i>666</i></div>

</body></html>
